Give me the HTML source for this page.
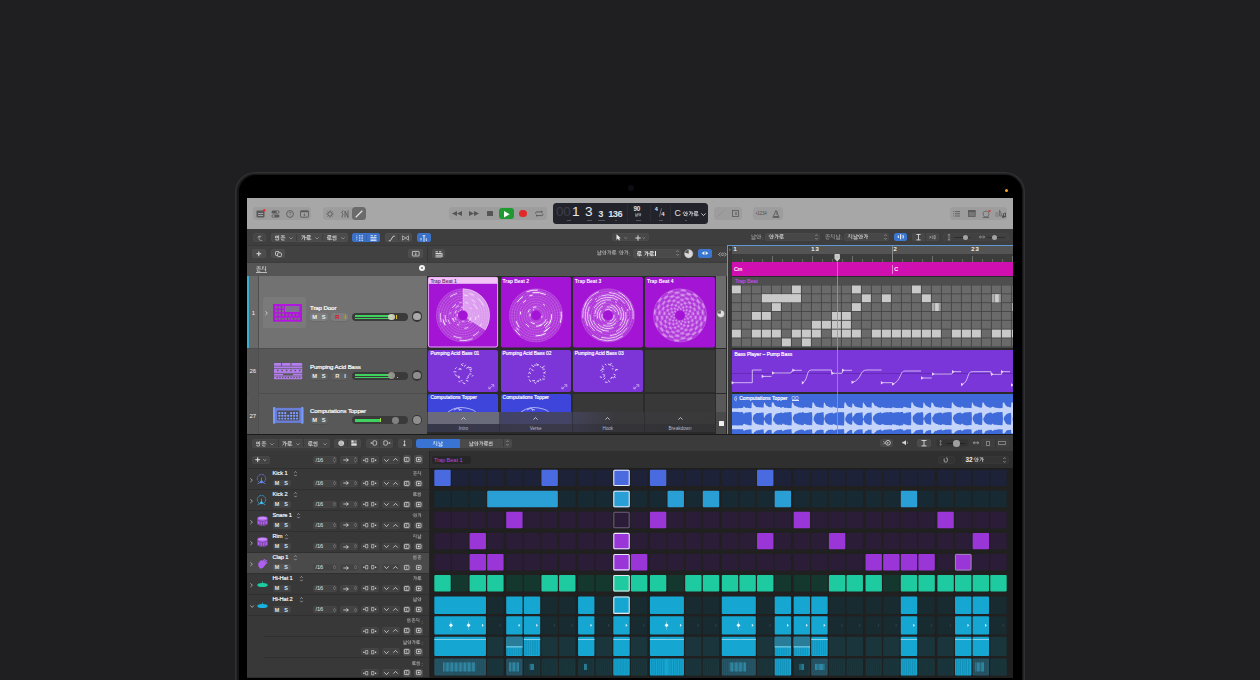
<!DOCTYPE html><html><head><meta charset="utf-8"><style>
html,body{margin:0;padding:0;width:1260px;height:680px;overflow:hidden;background:#1f1f21;}
body{position:relative;font-family:"Liberation Sans",sans-serif;}
.t{position:absolute;white-space:nowrap;font-family:"Liberation Sans",sans-serif;}
svg{overflow:visible}
</style></head><body>
<div style="position:absolute;left:234.80px;top:172.00px;width:790.40px;height:548.00px;background:#151516;border-radius:20px;box-shadow:inset 0 0 0 1px #313133, inset 0 0 0 2.2px #252527;"></div>
<div style="position:absolute;left:238.60px;top:175.30px;width:783.00px;height:544.70px;background:#000;border-radius:17px;"></div>
<div style="position:absolute;left:627.50px;top:184.50px;width:6.00px;height:6.00px;background:#0c0d12;border-radius:50%;"></div>
<div style="position:absolute;left:1004.60px;top:189.10px;width:3.20px;height:3.20px;background:#f5a623;border-radius:50%;"></div>
<div style="position:absolute;left:0;top:0;width:1260px;height:680px;clip-path:polygon(247px 198px,1013px 198px,1013px 677.6px,247px 677.6px);">
<div style="position:absolute;left:247.00px;top:198.00px;width:766.00px;height:479.60px;background:#3c3c3c;"></div>
<div style="position:absolute;left:247.00px;top:198.00px;width:766.00px;height:31.00px;background:#a7a7a7;"></div>
<div style="position:absolute;left:253.30px;top:207.20px;width:57.70px;height:12.40px;background:#9d9d9d;border-radius:3.5px;"></div>
<div style="position:absolute;left:323.00px;top:207.20px;width:43.00px;height:12.40px;background:#9d9d9d;border-radius:3.5px;"></div>
<div style="position:absolute;left:352.00px;top:207.20px;width:14.00px;height:12.40px;background:#6b6b6b;border-radius:3.5px;"></div>
<div style="position:absolute;left:448.70px;top:207.20px;width:98.00px;height:12.70px;background:#9d9d9d;border-radius:3.5px;"></div>
<div style="position:absolute;left:498.70px;top:207.50px;width:15.30px;height:11.90px;background:#1f9a30;border-radius:3px;"></div>
<div style="position:absolute;left:714.40px;top:207.20px;width:28.10px;height:12.70px;background:#9d9d9d;border-radius:3.5px;"></div>
<div style="position:absolute;left:753.30px;top:207.20px;width:29.40px;height:12.70px;background:#9d9d9d;border-radius:3.5px;"></div>
<div style="position:absolute;left:949.80px;top:207.20px;width:57.60px;height:12.70px;background:#9d9d9d;border-radius:3.5px;"></div>
<div style="position:absolute;left:553.00px;top:203.20px;width:155.00px;height:20.50px;background:#23242b;border-radius:3.5px;"></div>
<svg style="position:absolute;left:256.00px;top:209.00px;" width="10" height="9" viewBox="0 0 10 9"><rect x="0.5" y="1.5" width="8" height="7" rx="1" fill="#5a5a5a"/><rect x="2" y="4" width="5" height="1" fill="#a0a0a0"/><rect x="2" y="6" width="5" height="1" fill="#a0a0a0"/><circle cx="8.3" cy="1.3" r="1.3" fill="#f02a2a"/></svg>
<svg style="position:absolute;left:271.00px;top:209.50px;" width="9" height="8" viewBox="0 0 9 8"><rect x="0.5" y="0.5" width="8" height="3" rx="1.5" fill="#5a5a5a"/><rect x="0.5" y="4.5" width="8" height="3" rx="1.5" fill="#5a5a5a"/><circle cx="6.5" cy="2" r="1" fill="#a0a0a0"/><circle cx="2.5" cy="6" r="1" fill="#a0a0a0"/></svg>
<svg style="position:absolute;left:285.50px;top:209.50px;" width="8" height="8" viewBox="0 0 8 8"><circle cx="4" cy="4" r="3.4" fill="none" stroke="#5a5a5a" stroke-width="0.9"/><text x="4" y="6" font-size="5" text-anchor="middle" fill="#5a5a5a" font-family="Liberation Sans">?</text></svg>
<svg style="position:absolute;left:300.00px;top:209.50px;" width="9" height="8" viewBox="0 0 9 8"><rect x="0.5" y="0.8" width="8" height="6.4" rx="0.6" fill="none" stroke="#5a5a5a" stroke-width="0.9"/><rect x="0.5" y="0.8" width="8" height="1.4" fill="#5a5a5a"/><path d="M4.5 3.5v2M3.5 4.8l1 1 1-1" stroke="#5a5a5a" stroke-width="0.7" fill="none"/></svg>
<svg style="position:absolute;left:325.50px;top:209.50px;" width="8" height="8" viewBox="0 0 8 8"><circle cx="4" cy="4" r="2.2" fill="none" stroke="#5a5a5a" stroke-width="0.9"/><path d="M4 0.3v1.2M4 6.5v1.2M0.3 4h1.2M6.5 4h1.2M1.4 1.4l.8.8M5.8 5.8l.8.8M1.4 6.6l.8-.8M5.8 2.2l.8-.8" stroke="#5a5a5a" stroke-width="0.7"/></svg>
<svg style="position:absolute;left:340.50px;top:209.50px;" width="8" height="8" viewBox="0 0 8 8"><path d="M2 0.5L0.8 2.5 2 4.5 0.8 6.5 2 7.5M4 7.5V1l3 6.5V0.5" stroke="#5a5a5a" stroke-width="0.9" fill="none"/></svg>
<svg style="position:absolute;left:355.00px;top:209.50px;" width="8" height="8" viewBox="0 0 8 8"><path d="M1 7L7 1" stroke="#e8e8e8" stroke-width="1.1" stroke-linecap="round"/></svg>
<svg style="position:absolute;left:451.80px;top:211.00px;" width="10" height="5" viewBox="0 0 10 5"><path d="M5 0L0 2.5 5 5zM10 0L5 2.5 10 5z" fill="#555"/></svg>
<svg style="position:absolute;left:469.10px;top:211.00px;" width="10" height="5" viewBox="0 0 10 5"><path d="M0 0L5 2.5 0 5zM5 0L10 2.5 5 5z" fill="#555"/></svg>
<div style="position:absolute;left:487.20px;top:211.00px;width:5.70px;height:5.40px;background:#555;border-radius:0.5px;"></div>
<svg style="position:absolute;left:504.00px;top:210.60px;" width="6" height="6.6" viewBox="0 0 6 6.6"><path d="M0 0L5.6 3.3 0 6.6z" fill="#fff"/></svg>
<div style="position:absolute;left:519.20px;top:210.05px;width:7.40px;height:7.40px;background:#e02a2a;border-radius:50%;"></div>
<svg style="position:absolute;left:535.00px;top:211.00px;" width="8.5" height="5.5" viewBox="0 0 8.5 5.5"><path d="M0.6 2.6V2.1q0-1.2 1.2-1.2h5.5M6.4 0l1 .9-1 .9M7.9 2.9v.5q0 1.2-1.2 1.2H1.2M2.1 3.7l-1 .9 1 .9" stroke="#555" stroke-width="0.9" fill="none"/></svg>
<svg style="position:absolute;left:717.00px;top:210.00px;" width="8" height="7" viewBox="0 0 8 7"><path d="M0.5 6.5L7 0.5" stroke="#8e8e8e" stroke-width="0.9"/></svg>
<div style="position:absolute;left:732.20px;top:210.20px;width:6.80px;height:6.80px;background:transparent;box-shadow:inset 0 0 0 1px #666;"></div>
<div style="position:absolute;left:734.60px;top:212.40px;width:2.00px;height:2.40px;background:#777;"></div>
<div class="t" style="left:755.80px;top:210.80px;font-size:4.6px;line-height:5.6px;color:#555;letter-spacing:-0.2px;">&#8226;1234</div>
<svg style="position:absolute;left:772.00px;top:209.50px;" width="8" height="8" viewBox="0 0 8 8"><path d="M4 0.5L1.3 6.5h5.4z" fill="none" stroke="#5a5a5a" stroke-width="0.9"/><path d="M0.5 7.3h7" stroke="#5a5a5a" stroke-width="1"/><path d="M4 5L6 1.5" stroke="#5a5a5a" stroke-width="0.7"/></svg>
<svg style="position:absolute;left:953.00px;top:210.80px;" width="7" height="6" viewBox="0 0 7 6"><path d="M0.3 0.6h.8M0.3 2.8h.8M0.3 5h.8M2 0.6h5M2 2.8h5M2 5h5" stroke="#5a5a5a" stroke-width="0.9"/></svg>
<svg style="position:absolute;left:968.00px;top:210.00px;" width="7.5" height="7" viewBox="0 0 7.5 7"><rect x="0.4" y="0.5" width="6.8" height="6" fill="#777" stroke="#5a5a5a" stroke-width="0.8"/><rect x="0.4" y="0.5" width="6.8" height="1.6" fill="#5a5a5a"/></svg>
<svg style="position:absolute;left:982.00px;top:209.50px;" width="9" height="8" viewBox="0 0 9 8"><circle cx="4" cy="4" r="3" fill="none" stroke="#6a6a6a" stroke-width="0.9"/><path d="M0.8 7.5h6.4" stroke="#5a5a5a" stroke-width="0.8"/><circle cx="7.6" cy="1" r="1.1" fill="#f02a2a"/></svg>
<svg style="position:absolute;left:995.00px;top:209.00px;" width="12" height="9" viewBox="0 0 12 9"><rect x="0.3" y="3" width="3.4" height="5" fill="#8a8a8a"/><path d="M4.5 1L7.5 7H4.5z" fill="#8a8a8a" stroke="#5a5a5a" stroke-width="0.6"/><path d="M8.5 4.5V8M10.5 4V7.5M8.5 4.5l2-.5" stroke="#444" stroke-width="0.8"/><circle cx="8" cy="8" r="0.9" fill="#444"/><circle cx="10" cy="7.5" r="0.9" fill="#444"/></svg>
<div style="position:absolute;left:627.30px;top:205.00px;width:0.50px;height:17.00px;background:#2c2d35;"></div>
<div style="position:absolute;left:649.50px;top:205.00px;width:0.50px;height:17.00px;background:#2c2d35;"></div>
<div style="position:absolute;left:669.50px;top:205.00px;width:0.50px;height:17.00px;background:#2c2d35;"></div>
<div class="t" style="left:556.00px;top:205.29px;font-size:13.6px;line-height:14.6px;color:#3c3e49;letter-spacing:-0.4px;">00</div>
<div class="t" style="left:572.00px;top:205.29px;font-size:13.6px;line-height:14.6px;color:#e6e8ee;">1</div>
<div class="t" style="left:584.90px;top:205.29px;font-size:13.6px;line-height:14.6px;color:#e6e8ee;">3</div>
<div class="t" style="left:598.30px;top:208.93px;font-size:9.3px;line-height:10.3px;color:#dfe1e8;font-weight:bold;">3</div>
<div class="t" style="left:608.20px;top:208.93px;font-size:9.3px;line-height:10.3px;color:#dfe1e8;font-weight:bold;letter-spacing:-0.5px;">136</div>
<div class="t" style="left:565.80px;top:218.60px;font-size:3px;line-height:4px;color:#666a77;">&#183;&#183;&#183;</div>
<div style="position:absolute;left:566.50px;top:220.10px;width:4.50px;height:1.00px;background:#50535e;"></div>
<div style="position:absolute;left:586.50px;top:220.10px;width:5.00px;height:1.00px;background:#50535e;"></div>
<div style="position:absolute;left:597.50px;top:220.10px;width:7.50px;height:1.00px;background:#50535e;"></div>
<div style="position:absolute;left:614.60px;top:220.10px;width:2.00px;height:1.00px;background:#50535e;"></div>
<div class="t" style="left:633.60px;top:205.37px;font-size:6.3px;line-height:7.3px;color:#dfe1e8;font-weight:bold;letter-spacing:-0.3px;">90</div>
<svg style="position:absolute;left:635.00px;top:212.80px" width="6.46" height="3.40" viewBox="0 0 19.00 10"><g fill="none" stroke="#c8cad2" stroke-width="1.5"><path transform="translate(0.00 0)" d="M1.5 1v4h3.5M6.8 0.5v6M6.8 3h2M1.5 7.5h6v2h-6z"/><path transform="translate(9.50 0)" d="M2.5 1.5a2.2 2.2 0 1 0 0.01 0M6.8 0.5v9M6.8 4.5h2M1.5 8h4"/></g></svg>
<div style="position:absolute;left:635.50px;top:219.70px;width:5.50px;height:1.00px;background:#50535e;"></div>
<div class="t" style="left:654.80px;top:205.64px;font-size:5.5px;line-height:6.5px;color:#dfe1e8;font-weight:bold;">4</div>
<svg style="position:absolute;left:658.50px;top:207.50px;" width="3" height="9" viewBox="0 0 3 9"><path d="M2.5 0.3L0.5 8.7" stroke="#9a9ca5" stroke-width="0.6"/></svg>
<div class="t" style="left:661.30px;top:211.02px;font-size:6px;line-height:7px;color:#dfe1e8;font-weight:bold;">4</div>
<div style="position:absolute;left:658.50px;top:219.70px;width:4.50px;height:1.00px;background:#50535e;"></div>
<div class="t" style="left:674.60px;top:209.15px;font-size:8.8px;line-height:9.8px;color:#e4e6ec;">C</div>
<svg style="position:absolute;left:683.00px;top:211.20px" width="15.96" height="5.60" viewBox="0 0 28.50 10"><g fill="none" stroke="#e4e6ec" stroke-width="1.35"><path transform="translate(0.00 0)" d="M2.5 1.5a2.2 2.2 0 1 0 0.01 0M6.8 0.5v9M6.8 4.5h2M1.5 8h4"/><path transform="translate(9.50 0)" d="M1 1.5h3.5q0 4-3.5 6M6.5 0.5v9M6.5 4.5h2"/><path transform="translate(19.00 0)" d="M1 1h6v2.3h-6v2.3h6M0.5 7.5h8.5M4.5 7.5v2"/></g></svg>
<div style="position:absolute;left:684.60px;top:219.70px;width:2.20px;height:1.00px;background:#50535e;"></div>
<svg style="position:absolute;left:701.30px;top:212.60px;" width="5" height="3.5" viewBox="0 0 5 3.5"><path d="M0.4 0.5L2.5 2.6 4.6 0.5" stroke="#e0e0e6" stroke-width="0.9" fill="none"/></svg>
<div style="position:absolute;left:247.00px;top:229.00px;width:766.00px;height:16.00px;background:#3e3e3e;"></div>
<div style="position:absolute;left:247.00px;top:245.00px;width:480.50px;height:17.30px;background:#414141;"></div>
<div style="position:absolute;left:247.00px;top:244.60px;width:480.50px;height:0.60px;background:#383838;"></div>
<div style="position:absolute;left:252.60px;top:233.40px;width:13.40px;height:8.30px;background:#464646;border-radius:2.5px;box-shadow:inset 0 0 0 0.5px rgba(255,255,255,0.04);"></div>
<svg style="position:absolute;left:256.50px;top:234.80px;" width="6" height="6" viewBox="0 0 6 6"><path d="M4.5 1.2L2 1.2 2 3.8M0.8 2.6L2 1 3.2 2.6M2 3.8q0 1.5 1.6 1.6h1.6" stroke="#a9a9a9" stroke-width="0.8" fill="none"/></svg>
<div style="position:absolute;left:270.80px;top:233.40px;width:77.20px;height:8.30px;background:#4b4b4b;border-radius:2.5px;box-shadow:inset 0 0 0 0.5px rgba(255,255,255,0.04);"></div>
<div style="position:absolute;left:296.40px;top:233.80px;width:0.50px;height:7.50px;background:#3e3e3e;"></div>
<div style="position:absolute;left:322.20px;top:233.80px;width:0.50px;height:7.50px;background:#3e3e3e;"></div>
<svg style="position:absolute;left:275.00px;top:234.80px" width="10.64" height="5.60" viewBox="0 0 19.00 10"><g fill="none" stroke="#e6e6e6" stroke-width="1.3"><path transform="translate(0.00 0)" d="M1 2h3.5v3h-3.5zM6.5 0.5v9M1.5 7v2h4"/><path transform="translate(9.50 0)" d="M1 1.5h7M4.5 1.5v2.5M0.5 5h8.5M2.5 7v2h5"/></g></svg>
<svg style="position:absolute;left:288.60px;top:236.60px;" width="4" height="2.4" viewBox="0 0 4 2.4"><path d="M0.3 0.3L2.0 2.0 3.7 0.3" stroke="#9a9a9a" stroke-width="0.8" fill="none"/></svg>
<svg style="position:absolute;left:301.00px;top:234.80px" width="10.64" height="5.60" viewBox="0 0 19.00 10"><g fill="none" stroke="#e6e6e6" stroke-width="1.3"><path transform="translate(0.00 0)" d="M1 1.5h3.5q0 4-3.5 6M6.5 0.5v9M6.5 4.5h2"/><path transform="translate(9.50 0)" d="M1 1h6v2.3h-6v2.3h6M0.5 7.5h8.5M4.5 7.5v2"/></g></svg>
<svg style="position:absolute;left:315.20px;top:236.60px;" width="4" height="2.4" viewBox="0 0 4 2.4"><path d="M0.3 0.3L2.0 2.0 3.7 0.3" stroke="#9a9a9a" stroke-width="0.8" fill="none"/></svg>
<svg style="position:absolute;left:327.00px;top:234.80px" width="10.64" height="5.60" viewBox="0 0 19.00 10"><g fill="none" stroke="#e6e6e6" stroke-width="1.3"><path transform="translate(0.00 0)" d="M1 1h6v2.3h-6v2.3h6M0.5 7.5h8.5M4.5 7.5v2"/><path transform="translate(9.50 0)" d="M1 2h3.5v3h-3.5zM6.5 0.5v9M1.5 7v2h4"/></g></svg>
<svg style="position:absolute;left:341.30px;top:236.60px;" width="4" height="2.4" viewBox="0 0 4 2.4"><path d="M0.3 0.3L2.0 2.0 3.7 0.3" stroke="#9a9a9a" stroke-width="0.8" fill="none"/></svg>
<div style="position:absolute;left:352.00px;top:233.40px;width:28.30px;height:8.30px;background:#3a70c8;border-radius:2.5px;box-shadow:inset 0 0 0 0.5px rgba(255,255,255,0.04);"></div>
<div style="position:absolute;left:365.90px;top:233.80px;width:0.50px;height:7.50px;background:#3563b0;"></div>
<svg style="position:absolute;left:355.50px;top:234.80px;" width="8" height="6" viewBox="0 0 8 6"><path d="M0.8 0.5v5M3 0.6h4M3 2.2h4M3 3.8h4M3 5.4h4M0.8 0.5v.01" stroke="#e8eef8" stroke-width="0.9" stroke-dasharray="0.9 0.7"/></svg>
<svg style="position:absolute;left:370.00px;top:234.60px;" width="7" height="6.2" viewBox="0 0 7 6.2"><path d="M0.5 0.7h2.5M4 0.7h2.5M0.5 2.4h6M0.5 4.1h6M0.5 5.6h6" stroke="#e8eef8" stroke-width="0.9"/></svg>
<div style="position:absolute;left:384.80px;top:233.40px;width:27.00px;height:8.30px;background:#4b4b4b;border-radius:2.5px;box-shadow:inset 0 0 0 0.5px rgba(255,255,255,0.04);"></div>
<div style="position:absolute;left:398.20px;top:233.80px;width:0.50px;height:7.50px;background:#3e3e3e;"></div>
<svg style="position:absolute;left:388.00px;top:234.60px;" width="7.5" height="6.5" viewBox="0 0 7.5 6.5"><path d="M0.8 5.8L2.2 5.8 5.2 1.2 6.8 1.2" stroke="#dcdcdc" stroke-width="0.9" fill="none"/></svg>
<svg style="position:absolute;left:402.00px;top:234.80px;" width="7" height="6" viewBox="0 0 7 6"><path d="M0.5 0.8q3 2.2 6 4.4M0.5 5.2q3-2.2 6-4.4M0.5 0.8v4.4M6.5 0.8v4.4" stroke="#b5b5b5" stroke-width="0.8" fill="none"/></svg>
<div style="position:absolute;left:416.50px;top:233.40px;width:14.60px;height:8.30px;background:#3a70c8;border-radius:2.5px;box-shadow:inset 0 0 0 0.5px rgba(255,255,255,0.04);"></div>
<svg style="position:absolute;left:419.50px;top:234.50px;" width="9" height="7" viewBox="0 0 9 7"><path d="M4 0.6v6.2M2.6 0.8h2.8M1 3v2.5M7 3.5q-1 0-1 1.1t1 1.1" stroke="#eaf0fa" stroke-width="0.9" fill="none"/></svg>
<div style="position:absolute;left:611.70px;top:233.20px;width:37.20px;height:8.00px;background:#474747;border-radius:2.5px;box-shadow:inset 0 0 0 0.5px rgba(255,255,255,0.04);"></div>
<svg style="position:absolute;left:615.50px;top:234.20px;" width="5" height="6.5" viewBox="0 0 5 6.5"><path d="M0.5 0.3v5.6l1.4-1.3 1.1 1.8 1-.5-1-1.7h1.8z" fill="#eee"/></svg>
<svg style="position:absolute;left:623.50px;top:236.60px;" width="3.5" height="2.1" viewBox="0 0 3.5 2.1"><path d="M0.3 0.3L1.75 1.7000000000000002 3.2 0.3" stroke="#8a8a8a" stroke-width="0.8" fill="none"/></svg>
<svg style="position:absolute;left:634.50px;top:234.60px;" width="6" height="6" viewBox="0 0 6 6"><path d="M3 0.3v5.4M0.3 3h5.4" stroke="#e6e6e6" stroke-width="0.9"/></svg>
<svg style="position:absolute;left:642.20px;top:236.60px;" width="3.5" height="2.1" viewBox="0 0 3.5 2.1"><path d="M0.3 0.3L1.75 1.7000000000000002 3.2 0.3" stroke="#8a8a8a" stroke-width="0.8" fill="none"/></svg>
<svg style="position:absolute;left:751.00px;top:234.40px" width="10.64" height="5.60" viewBox="0 0 19.00 10"><g fill="none" stroke="#a9a9a9" stroke-width="1.1"><path transform="translate(0.00 0)" d="M1.5 1v4h3.5M6.8 0.5v6M6.8 3h2M1.5 7.5h6v2h-6z"/><path transform="translate(9.50 0)" d="M2.5 1.5a2.2 2.2 0 1 0 0.01 0M6.8 0.5v9M6.8 4.5h2M1.5 8h4"/></g></svg>
<div class="t" style="left:762.00px;top:234.96px;font-size:5.6px;line-height:6.6px;color:#a9a9a9;">:</div>
<div style="position:absolute;left:765.00px;top:232.90px;width:54.80px;height:8.00px;background:#474747;border-radius:2.5px;box-shadow:inset 0 0 0 0.5px rgba(255,255,255,0.04);"></div>
<svg style="position:absolute;left:769.20px;top:234.40px" width="15.39" height="5.40" viewBox="0 0 28.50 10"><g fill="none" stroke="#e6e6e6" stroke-width="1.2"><path transform="translate(0.00 0)" d="M2.5 1.5a2.2 2.2 0 1 0 0.01 0M6.8 0.5v9M6.8 4.5h2M1.5 8h4"/><path transform="translate(9.50 0)" d="M1 1.5h3.5q0 4-3.5 6M6.5 0.5v9M6.5 4.5h2"/><path transform="translate(19.00 0)" d="M1 1h6v2.3h-6v2.3h6M0.5 7.5h8.5M4.5 7.5v2"/></g></svg>
<svg style="position:absolute;left:815.20px;top:233.90px;" width="3" height="6" viewBox="0 0 3 6"><path d="M0.3 2L1.5 0.6 2.7 2M0.3 4L1.5 5.4 2.7 4" stroke="#9a9a9a" stroke-width="0.7" fill="none"/></svg>
<svg style="position:absolute;left:824.60px;top:234.40px" width="15.96" height="5.60" viewBox="0 0 28.50 10"><g fill="none" stroke="#a9a9a9" stroke-width="1.1"><path transform="translate(0.00 0)" d="M1 1.5h7M4.5 1.5v2.5M0.5 5h8.5M2.5 7v2h5"/><path transform="translate(9.50 0)" d="M1 1.5h3M2.5 1.5q0 3-2 5M3 4.5l2 2M7 0.5v9"/><path transform="translate(19.00 0)" d="M1.5 1v4h3.5M6.8 0.5v6M6.8 3h2M1.5 7.5h6v2h-6z"/></g></svg>
<div class="t" style="left:841.00px;top:234.96px;font-size:5.6px;line-height:6.6px;color:#a9a9a9;">:</div>
<div style="position:absolute;left:843.80px;top:232.90px;width:44.80px;height:8.00px;background:#474747;border-radius:2.5px;box-shadow:inset 0 0 0 0.5px rgba(255,255,255,0.04);"></div>
<svg style="position:absolute;left:847.50px;top:234.40px" width="20.52" height="5.40" viewBox="0 0 38.00 10"><g fill="none" stroke="#e6e6e6" stroke-width="1.2"><path transform="translate(0.00 0)" d="M1 1.5h3M2.5 1.5q0 3-2 5M3 4.5l2 2M7 0.5v9"/><path transform="translate(9.50 0)" d="M1.5 1v4h3.5M6.8 0.5v6M6.8 3h2M1.5 7.5h6v2h-6z"/><path transform="translate(19.00 0)" d="M2.5 1.5a2.2 2.2 0 1 0 0.01 0M6.8 0.5v9M6.8 4.5h2M1.5 8h4"/><path transform="translate(28.50 0)" d="M1 1.5h3.5q0 4-3.5 6M6.5 0.5v9M6.5 4.5h2"/></g></svg>
<svg style="position:absolute;left:884.00px;top:233.90px;" width="3" height="6" viewBox="0 0 3 6"><path d="M0.3 2L1.5 0.6 2.7 2M0.3 4L1.5 5.4 2.7 4" stroke="#9a9a9a" stroke-width="0.7" fill="none"/></svg>
<div style="position:absolute;left:894.20px;top:232.60px;width:12.80px;height:8.60px;background:#3a76d0;border-radius:2.5px;box-shadow:inset 0 0 0 0.5px rgba(255,255,255,0.04);"></div>
<svg style="position:absolute;left:897.80px;top:234.20px;" width="6" height="5.6" viewBox="0 0 6 5.6"><path d="M2.6 0.3v5M0.3 1.5v2.6M4.8 1.2q1.2 1.6 0 3.2" stroke="#eef3fb" stroke-width="1.1" fill="none"/></svg>
<div style="position:absolute;left:912.00px;top:232.60px;width:26.60px;height:8.60px;background:#474747;border-radius:2.5px;box-shadow:inset 0 0 0 0.5px rgba(255,255,255,0.04);"></div>
<div style="position:absolute;left:925.10px;top:233.00px;width:0.50px;height:7.80px;background:#3e3e3e;"></div>
<svg style="position:absolute;left:916.40px;top:233.80px;" width="5" height="6.4" viewBox="0 0 5 6.4"><path d="M0.4 0.5h4.2M0.4 5.9h4.2M2.5 0.5v5.4" stroke="#d8d8d8" stroke-width="0.9"/></svg>
<svg style="position:absolute;left:929.40px;top:234.80px;" width="6.5" height="4.4" viewBox="0 0 6.5 4.4"><path d="M0.4 2.2h1.4M0.6 1l1.2 1.2-1.2 1.2M3.3 0.5v3.4M5 0.5h1.2v3.4H5z" stroke="#a9a9a9" stroke-width="0.7" fill="none"/></svg>
<div style="position:absolute;left:943.00px;top:232.60px;width:65.80px;height:8.60px;background:#414141;border-radius:2.5px;box-shadow:inset 0 0 0 0.5px rgba(255,255,255,0.04);"></div>
<svg style="position:absolute;left:946.80px;top:233.60px;" width="4" height="6.6" viewBox="0 0 4 6.6"><path d="M2 0.3v6M0.8 1.4L2 0.3 3.2 1.4M0.8 5.2L2 6.3 3.2 5.2" stroke="#a0a0a0" stroke-width="0.7" fill="none"/></svg>
<div style="position:absolute;left:953.50px;top:236.60px;width:16.00px;height:0.80px;background:#2e2e2e;"></div>
<div style="position:absolute;left:963.40px;top:234.50px;width:5.00px;height:5.00px;background:#a3a3a3;border-radius:50%;"></div>
<svg style="position:absolute;left:978.60px;top:235.40px;" width="6" height="4" viewBox="0 0 6 4"><path d="M0.4 2h5.2M1.6 0.6L0.4 2l1.2 1.4M4.4 0.6L5.6 2 4.4 3.4" stroke="#a0a0a0" stroke-width="0.7" fill="none"/></svg>
<div style="position:absolute;left:986.50px;top:236.60px;width:18.50px;height:0.80px;background:#2e2e2e;"></div>
<div style="position:absolute;left:992.30px;top:234.50px;width:5.00px;height:5.00px;background:#a3a3a3;border-radius:50%;"></div>
<div style="position:absolute;left:252.20px;top:249.20px;width:13.80px;height:8.80px;background:#4c4c4c;border-radius:2.5px;box-shadow:inset 0 0 0 0.5px rgba(255,255,255,0.04);"></div>
<svg style="position:absolute;left:256.30px;top:250.80px;" width="5.6" height="5.6" viewBox="0 0 5.6 5.6"><path d="M2.8 0.4v4.8M0.4 2.8h4.8" stroke="#dcdcdc" stroke-width="1.1"/></svg>
<div style="position:absolute;left:270.80px;top:249.20px;width:14.70px;height:8.80px;background:#4c4c4c;border-radius:2.5px;box-shadow:inset 0 0 0 0.5px rgba(255,255,255,0.04);"></div>
<svg style="position:absolute;left:274.80px;top:250.60px;" width="7" height="6" viewBox="0 0 7 6"><rect x="0.5" y="0.5" width="3.6" height="4" rx="0.8" fill="none" stroke="#dcdcdc" stroke-width="0.8"/><rect x="2.6" y="1.8" width="3.8" height="3.8" rx="0.8" fill="#4c4c4c" stroke="#dcdcdc" stroke-width="0.8"/></svg>
<div style="position:absolute;left:408.00px;top:249.20px;width:14.70px;height:8.80px;background:#4c4c4c;border-radius:2.5px;box-shadow:inset 0 0 0 0.5px rgba(255,255,255,0.04);"></div>
<svg style="position:absolute;left:411.60px;top:251.00px;" width="7.5" height="5.4" viewBox="0 0 7.5 5.4"><rect x="0.4" y="0.4" width="6.7" height="4.6" rx="0.5" fill="none" stroke="#dcdcdc" stroke-width="0.8"/><path d="M3.75 1.4v2.4M2.8 2.9l.95.95.95-.95" stroke="#dcdcdc" stroke-width="0.7" fill="none"/></svg>
<div style="position:absolute;left:426.70px;top:245.20px;width:0.60px;height:17.10px;background:#363636;"></div>
<div style="position:absolute;left:432.00px;top:249.20px;width:13.40px;height:8.80px;background:#4c4c4c;border-radius:2.5px;box-shadow:inset 0 0 0 0.5px rgba(255,255,255,0.04);"></div>
<svg style="position:absolute;left:434.80px;top:250.50px;" width="8" height="6.5" viewBox="0 0 8 6.5"><path d="M0.5 0.8h2.5M4 0.8h2.5M0.5 2.5h6M0.5 4.2h6M0.5 5.9h6M7 2v4" stroke="#e8e8e8" stroke-width="0.9"/></svg>
<svg style="position:absolute;left:596.80px;top:250.40px" width="19.76" height="5.20" viewBox="0 0 38.00 10"><g fill="none" stroke="#bcbcbc" stroke-width="1.25"><path transform="translate(0.00 0)" d="M1.5 1v4h3.5M6.8 0.5v6M6.8 3h2M1.5 7.5h6v2h-6z"/><path transform="translate(9.50 0)" d="M2.5 1.5a2.2 2.2 0 1 0 0.01 0M6.8 0.5v9M6.8 4.5h2M1.5 8h4"/><path transform="translate(19.00 0)" d="M1 1.5h3.5q0 4-3.5 6M6.5 0.5v9M6.5 4.5h2"/><path transform="translate(28.50 0)" d="M1 1h6v2.3h-6v2.3h6M0.5 7.5h8.5M4.5 7.5v2"/></g></svg>
<svg style="position:absolute;left:618.60px;top:250.40px" width="9.88" height="5.20" viewBox="0 0 19.00 10"><g fill="none" stroke="#bcbcbc" stroke-width="1.25"><path transform="translate(0.00 0)" d="M2.5 1.5a2.2 2.2 0 1 0 0.01 0M6.8 0.5v9M6.8 4.5h2M1.5 8h4"/><path transform="translate(9.50 0)" d="M1 1.5h3.5q0 4-3.5 6M6.5 0.5v9M6.5 4.5h2"/></g></svg>
<div class="t" style="left:628.80px;top:251.19px;font-size:5.8px;line-height:6.8px;color:#bcbcbc;">:</div>
<div style="position:absolute;left:632.80px;top:249.20px;width:47.80px;height:8.70px;background:#4a4a4a;border-radius:2.5px;box-shadow:inset 0 0 0 0.5px rgba(255,255,255,0.04);"></div>
<svg style="position:absolute;left:637.20px;top:250.60px" width="5.32" height="5.60" viewBox="0 0 9.50 10"><g fill="none" stroke="#f4f4f4" stroke-width="1.4"><path transform="translate(0.00 0)" d="M1 1h6v2.3h-6v2.3h6M0.5 7.5h8.5M4.5 7.5v2"/></g></svg>
<svg style="position:absolute;left:644.20px;top:250.60px" width="10.64" height="5.60" viewBox="0 0 19.00 10"><g fill="none" stroke="#f4f4f4" stroke-width="1.4"><path transform="translate(0.00 0)" d="M1 1.5h3.5q0 4-3.5 6M6.5 0.5v9M6.5 4.5h2"/><path transform="translate(9.50 0)" d="M1 1h6v2.3h-6v2.3h6M0.5 7.5h8.5M4.5 7.5v2"/></g></svg>
<div style="position:absolute;left:655.00px;top:250.60px;width:0.80px;height:5.80px;background:#f4f4f4;"></div>
<svg style="position:absolute;left:676.00px;top:250.40px;" width="3" height="6" viewBox="0 0 3 6"><path d="M0.3 2L1.5 0.6 2.7 2M0.3 4L1.5 5.4 2.7 4" stroke="#9a9a9a" stroke-width="0.7" fill="none"/></svg>
<svg style="position:absolute;left:684.00px;top:249.40px;" width="9.4" height="9.4" viewBox="0 0 9.4 9.4"><circle cx="4.7" cy="4.7" r="4.2" fill="#d8d8d8"/><path d="M4.7 4.7V0.5A4.2 4.2 0 0 0 0.7 3.4z" fill="#555"/><circle cx="4.7" cy="4.7" r="4.2" fill="none" stroke="#aaa" stroke-width="0.5"/></svg>
<div style="position:absolute;left:697.80px;top:249.20px;width:14.10px;height:8.90px;background:#3a76d0;border-radius:2.5px;box-shadow:inset 0 0 0 0.5px rgba(255,255,255,0.04);"></div>
<svg style="position:absolute;left:700.80px;top:251.40px;" width="8" height="4.4" viewBox="0 0 8 4.4"><path d="M3.4 0.3L0.6 2.2 3.4 4.1zM4.6 0.3L7.4 2.2 4.6 4.1z" fill="#eef3fb"/></svg>
<svg style="position:absolute;left:718.00px;top:251.60px;" width="9" height="4.8" viewBox="0 0 9 4.8"><path d="M2.6 0.6L0.5 2.4 2.6 4.2M6.4 0.6L8.5 2.4 6.4 4.2M4.5 0.8L3.2 2.4 4.5 4 5.8 2.4z" stroke="#c0c0c0" stroke-width="0.75" fill="none"/></svg>
<div style="position:absolute;left:247.00px;top:262.60px;width:180.00px;height:13.40px;background:#555555;"></div>
<div style="position:absolute;left:427.00px;top:262.60px;width:300.50px;height:13.40px;background:#535353;"></div>
<svg style="position:absolute;left:255.50px;top:265.50px" width="11.02" height="5.80" viewBox="0 0 19.00 10"><g fill="none" stroke="#e0e0e0" stroke-width="1.2"><path transform="translate(0.00 0)" d="M1 1.5h7M4.5 1.5v2.5M0.5 5h8.5M2.5 7v2h5"/><path transform="translate(9.50 0)" d="M1 1.5h3M2.5 1.5q0 3-2 5M3 4.5l2 2M7 0.5v9"/></g></svg>
<div style="position:absolute;left:255.50px;top:272.10px;width:11.50px;height:0.60px;background:#bbb;"></div>
<div style="position:absolute;left:418.60px;top:264.90px;width:6.20px;height:6.20px;background:#f4f4f4;border-radius:50%;"></div>
<div style="position:absolute;left:420.60px;top:266.90px;width:2.20px;height:2.20px;background:#777;border-radius:50%;"></div>
<div style="position:absolute;left:247.00px;top:276.00px;width:180.00px;height:72.80px;background:#727272;"></div>
<div style="position:absolute;left:247.00px;top:348.80px;width:180.00px;height:85.20px;background:#585858;"></div>
<div style="position:absolute;left:247.00px;top:393.30px;width:180.00px;height:0.80px;background:#4d4d4d;"></div>
<div style="position:absolute;left:247.00px;top:276.00px;width:2.00px;height:72.50px;background:#3bb0d0;"></div>
<div style="position:absolute;left:249.00px;top:276.00px;width:9.30px;height:72.50px;background:#696969;"></div>
<div style="position:absolute;left:258.30px;top:276.00px;width:0.60px;height:158.00px;background:#4f4f4f;"></div>
<div style="position:absolute;left:247.00px;top:348.40px;width:180.00px;height:0.70px;background:#4d4d4d;"></div>
<div style="position:absolute;left:249.00px;top:348.90px;width:9.30px;height:85.10px;background:#555;"></div>
<div class="t" style="left:251.80px;top:309.62px;font-size:6px;line-height:7px;color:#f4f4f4;">1</div>
<div class="t" style="left:249.60px;top:368.32px;font-size:6px;line-height:7px;color:#f4f4f4;letter-spacing:-0.1px;">26</div>
<div class="t" style="left:249.60px;top:412.82px;font-size:6px;line-height:7px;color:#f4f4f4;letter-spacing:-0.1px;">27</div>
<div style="position:absolute;left:262.90px;top:297.20px;width:42.70px;height:30.50px;background:#7a7a7a;border-radius:2.5px;"></div>
<svg style="position:absolute;left:265.30px;top:310.60px;" width="3" height="4.4" viewBox="0 0 3 4.4"><path d="M0.4 0.4L2.4 2.2 0.4 4" stroke="#e8e8e8" stroke-width="0.7" fill="none"/></svg>
<svg style="position:absolute;left:273.10px;top:303.70px;" width="29" height="17.7" viewBox="0 0 29 17.7"><rect x="0" y="0" width="29" height="17.7" fill="#b414e0"/><rect x="2.20" y="2.20" width="2.2" height="2.3" fill="#7d6a86"/><rect x="5.60" y="2.20" width="2.2" height="2.3" fill="#7d6a86"/><rect x="9.00" y="2.20" width="2.2" height="2.3" fill="#7d6a86"/><rect x="2.20" y="5.90" width="2.2" height="2.3" fill="#7d6a86"/><rect x="5.60" y="5.90" width="2.2" height="2.3" fill="#7d6a86"/><rect x="9.00" y="5.90" width="2.2" height="2.3" fill="#7d6a86"/><rect x="2.20" y="9.60" width="2.2" height="2.3" fill="#7d6a86"/><rect x="5.60" y="9.60" width="2.2" height="2.3" fill="#7d6a86"/><rect x="9.00" y="9.60" width="2.2" height="2.3" fill="#7d6a86"/><rect x="12" y="2" width="14.5" height="6" fill="#7f7090"/><rect x="2.20" y="13.6" width="2.2" height="2.3" fill="#7d6a86"/><rect x="5.40" y="13.6" width="2.2" height="2.3" fill="#7d6a86"/><rect x="8.60" y="13.6" width="2.2" height="2.3" fill="#7d6a86"/><rect x="11.80" y="13.6" width="2.2" height="2.3" fill="#7d6a86"/><rect x="15.00" y="13.6" width="2.2" height="2.3" fill="#7d6a86"/><rect x="18.20" y="13.6" width="2.2" height="2.3" fill="#7d6a86"/><rect x="21.40" y="13.6" width="2.2" height="2.3" fill="#7d6a86"/><rect x="24.60" y="13.6" width="2.2" height="2.3" fill="#7d6a86"/><rect x="13.00" y="10" width="1.8" height="1.8" fill="#7d6a86"/><rect x="16.40" y="10" width="1.8" height="1.8" fill="#7d6a86"/><rect x="19.80" y="10" width="1.8" height="1.8" fill="#7d6a86"/><rect x="23.20" y="10" width="1.8" height="1.8" fill="#7d6a86"/></svg>
<div class="t" style="left:310.00px;top:304.24px;font-size:6.1px;line-height:7.1px;color:#ffffff;letter-spacing:-0.1px;-webkit-text-stroke:0.2px #fff;">Trap Door</div>
<div style="position:absolute;left:310.00px;top:313.00px;width:17.80px;height:7.60px;background:#7d7d7d;border-radius:2px;box-shadow:0 0.3px 0.6px rgba(0,0,0,.25);"></div>
<div class="t" style="left:312.20px;top:313.89px;font-size:5.8px;line-height:6.8px;color:#f0f0f0;font-weight:bold;">M</div>
<div class="t" style="left:321.80px;top:313.89px;font-size:5.8px;line-height:6.8px;color:#f0f0f0;font-weight:bold;">S</div>
<div style="position:absolute;left:330.60px;top:313.00px;width:17.90px;height:7.60px;background:#7d7d7d;border-radius:2px;box-shadow:0 0.3px 0.6px rgba(0,0,0,.25);"></div>
<div class="t" style="left:335.20px;top:313.89px;font-size:5.8px;line-height:6.8px;color:#d21e1e;font-weight:bold;">R</div>
<div class="t" style="left:344.20px;top:313.89px;font-size:5.8px;line-height:6.8px;color:#e39a26;font-weight:bold;">I</div>
<div style="position:absolute;left:351.80px;top:312.80px;width:56.00px;height:8.20px;background:#3a3a3a;border-radius:4px;"></div>
<div style="position:absolute;left:354.80px;top:315.30px;width:37.00px;height:1.40px;background:#3fd25e;"></div>
<div style="position:absolute;left:354.80px;top:317.70px;width:37.00px;height:1.40px;background:#3fd25e;"></div>
<div style="position:absolute;left:388.40px;top:313.50px;width:6.80px;height:6.80px;background:#d4d6c4;border-radius:50%;opacity:0.9;"></div>
<div style="position:absolute;left:396.20px;top:314.60px;width:0.60px;height:4.80px;background:#d8c020;"></div>
<div style="position:absolute;left:411.60px;top:311.40px;width:10.60px;height:10.60px;background:#353535;border-radius:50%;"></div>
<div style="position:absolute;left:413.10px;top:312.90px;width:7.60px;height:7.60px;background:#a9a9a9;border-radius:50%;"></div>
<svg style="position:absolute;left:273.80px;top:362.80px;" width="28.2" height="16.2" viewBox="0 0 28.2 16.2"><rect x="0" y="0" width="28.2" height="16.2" rx="1" fill="#b47ef0"/><path d="M0 3.2h28.2M0 5.6h28.2M0 10.4h28.2M0 13h28.2" stroke="#585858" stroke-width="0.7"/><path d="M7.5 0v3.2M17 0v3.2" stroke="#585858" stroke-width="0.9"/><rect x="3.00" y="6.8" width="1.5" height="1.5" fill="#585858"/><rect x="7.40" y="6.8" width="1.5" height="1.5" fill="#585858"/><rect x="11.80" y="6.8" width="1.5" height="1.5" fill="#585858"/><rect x="16.20" y="6.8" width="1.5" height="1.5" fill="#585858"/><rect x="20.60" y="6.8" width="1.5" height="1.5" fill="#585858"/><rect x="25.00" y="6.8" width="1.5" height="1.5" fill="#585858"/><rect x="2.50" y="14" width="1.3" height="1.2" fill="#585858"/><rect x="5.30" y="14" width="1.3" height="1.2" fill="#585858"/><rect x="8.10" y="14" width="1.3" height="1.2" fill="#585858"/><rect x="10.90" y="14" width="1.3" height="1.2" fill="#585858"/><rect x="13.70" y="14" width="1.3" height="1.2" fill="#585858"/><rect x="16.50" y="14" width="1.3" height="1.2" fill="#585858"/><rect x="19.30" y="14" width="1.3" height="1.2" fill="#585858"/><rect x="22.10" y="14" width="1.3" height="1.2" fill="#585858"/><rect x="24.90" y="14" width="1.3" height="1.2" fill="#585858"/><rect x="9" y="10.9" width="10" height="1.4" fill="#585858"/></svg>
<div class="t" style="left:310.00px;top:362.54px;font-size:6.1px;line-height:7.1px;color:#ffffff;letter-spacing:-0.1px;-webkit-text-stroke:0.2px #fff;">Pumping Acid Bass</div>
<div style="position:absolute;left:310.00px;top:372.80px;width:17.80px;height:6.80px;background:#5f5f5f;border-radius:2px;box-shadow:0 0.3px 0.6px rgba(0,0,0,.25);"></div>
<div class="t" style="left:312.20px;top:372.89px;font-size:5.8px;line-height:6.8px;color:#f0f0f0;font-weight:bold;">M</div>
<div class="t" style="left:321.80px;top:372.89px;font-size:5.8px;line-height:6.8px;color:#f0f0f0;font-weight:bold;">S</div>
<div style="position:absolute;left:330.60px;top:372.80px;width:17.90px;height:6.80px;background:#5f5f5f;border-radius:2px;box-shadow:0 0.3px 0.6px rgba(0,0,0,.25);"></div>
<div class="t" style="left:335.20px;top:372.89px;font-size:5.8px;line-height:6.8px;color:#e6e6e6;font-weight:bold;">R</div>
<div class="t" style="left:344.20px;top:372.89px;font-size:5.8px;line-height:6.8px;color:#e6e6e6;font-weight:bold;">I</div>
<div style="position:absolute;left:351.80px;top:371.70px;width:56.00px;height:8.20px;background:#3a3a3a;border-radius:4px;"></div>
<div style="position:absolute;left:354.80px;top:374.20px;width:37.00px;height:1.40px;background:#3fd25e;"></div>
<div style="position:absolute;left:354.80px;top:376.60px;width:37.00px;height:1.40px;background:#3fd25e;"></div>
<div style="position:absolute;left:388.40px;top:372.40px;width:6.80px;height:6.80px;background:#9a9a90;border-radius:50%;opacity:0.9;"></div>
<div style="position:absolute;left:397.00px;top:376.50px;width:0.60px;height:1.70px;background:#d8c020;"></div>
<div style="position:absolute;left:411.60px;top:370.30px;width:10.60px;height:10.60px;background:#353535;border-radius:50%;"></div>
<div style="position:absolute;left:413.10px;top:371.80px;width:7.60px;height:7.60px;background:#8e8e8e;border-radius:50%;"></div>
<svg style="position:absolute;left:272.60px;top:407.10px;" width="30.5" height="17" viewBox="0 0 30.5 17"><rect x="0" y="0" width="2.4" height="16.7" rx="0.8" fill="#7a9af8"/><rect x="28.1" y="0" width="2.4" height="16.7" rx="0.8" fill="#7a9af8"/><rect x="2.2" y="0.9" width="26.1" height="15" fill="#6a80d8"/><rect x="4.2" y="3.6" width="22.1" height="10" rx="0.8" fill="#4c4c5c"/><rect x="5.40" y="5.00" width="1.9" height="1.9" rx="0.5" fill="#80a0ff"/><rect x="8.35" y="5.00" width="1.9" height="1.9" rx="0.5" fill="#80a0ff"/><rect x="11.30" y="5.00" width="1.9" height="1.9" rx="0.5" fill="#80a0ff"/><rect x="17.20" y="5.00" width="1.9" height="1.9" rx="0.5" fill="#80a0ff"/><rect x="20.15" y="5.00" width="1.9" height="1.9" rx="0.5" fill="#80a0ff"/><rect x="23.10" y="5.00" width="1.9" height="1.9" rx="0.5" fill="#80a0ff"/><rect x="5.40" y="7.85" width="1.9" height="1.9" rx="0.5" fill="#80a0ff"/><rect x="8.35" y="7.85" width="1.9" height="1.9" rx="0.5" fill="#80a0ff"/><rect x="11.30" y="7.85" width="1.9" height="1.9" rx="0.5" fill="#80a0ff"/><rect x="14.25" y="7.85" width="1.9" height="1.9" rx="0.5" fill="#80a0ff"/><rect x="17.20" y="7.85" width="1.9" height="1.9" rx="0.5" fill="#80a0ff"/><rect x="20.15" y="7.85" width="1.9" height="1.9" rx="0.5" fill="#80a0ff"/><rect x="23.10" y="7.85" width="1.9" height="1.9" rx="0.5" fill="#80a0ff"/><rect x="5.40" y="10.70" width="1.9" height="1.9" rx="0.5" fill="#80a0ff"/><rect x="8.35" y="10.70" width="1.9" height="1.9" rx="0.5" fill="#80a0ff"/><rect x="11.30" y="10.70" width="1.9" height="1.9" rx="0.5" fill="#80a0ff"/><rect x="14.25" y="10.70" width="1.9" height="1.9" rx="0.5" fill="#80a0ff"/><rect x="17.20" y="10.70" width="1.9" height="1.9" rx="0.5" fill="#80a0ff"/><rect x="20.15" y="10.70" width="1.9" height="1.9" rx="0.5" fill="#80a0ff"/><rect x="23.10" y="10.70" width="1.9" height="1.9" rx="0.5" fill="#80a0ff"/></svg>
<div class="t" style="left:310.00px;top:407.14px;font-size:6.1px;line-height:7.1px;color:#ffffff;letter-spacing:-0.1px;-webkit-text-stroke:0.2px #fff;">Computations Topper</div>
<div style="position:absolute;left:310.00px;top:416.90px;width:17.80px;height:6.80px;background:#5f5f5f;border-radius:2px;box-shadow:0 0.3px 0.6px rgba(0,0,0,.25);"></div>
<div class="t" style="left:312.20px;top:416.99px;font-size:5.8px;line-height:6.8px;color:#f0f0f0;font-weight:bold;">M</div>
<div class="t" style="left:321.80px;top:416.99px;font-size:5.8px;line-height:6.8px;color:#f0f0f0;font-weight:bold;">S</div>
<div style="position:absolute;left:351.80px;top:416.10px;width:56.00px;height:8.20px;background:#3a3a3a;border-radius:4px;"></div>
<div style="position:absolute;left:354.80px;top:418.60px;width:25.70px;height:3.20px;background:#3fd25e;"></div>
<div style="position:absolute;left:392.40px;top:416.80px;width:6.80px;height:6.80px;background:#8a8a8a;border-radius:50%;opacity:0.9;"></div>
<div style="position:absolute;left:380.40px;top:418.20px;width:0.50px;height:4.00px;background:#a6e040;"></div>
<div style="position:absolute;left:411.60px;top:414.90px;width:10.60px;height:10.60px;background:#353535;border-radius:50%;"></div>
<div style="position:absolute;left:413.10px;top:416.40px;width:7.60px;height:7.60px;background:#8e8e8e;border-radius:50%;"></div>
<div style="position:absolute;left:427.00px;top:276.00px;width:288.00px;height:158.00px;background:#2b2b2b;"></div>
<div style="position:absolute;left:715.00px;top:276.00px;width:12.50px;height:158.00px;background:#2b2b2b;"></div>
<div style="position:absolute;left:716.00px;top:276.00px;width:10.00px;height:72.30px;background:#6c6c6c;"></div>
<div style="position:absolute;left:716.00px;top:349.20px;width:10.00px;height:43.80px;background:#585858;"></div>
<div style="position:absolute;left:716.00px;top:393.90px;width:10.00px;height:40.10px;background:#585858;"></div>
<svg style="position:absolute;left:428.40px;top:277.30px;" width="70" height="70.4" viewBox="0 0 70 70.4"><rect x="0" y="0" width="70" height="70.4" rx="2" fill="#a314d4"/><circle cx="35" cy="38.4" r="26.6" fill="rgba(255,255,255,0.13)"/><circle cx="35" cy="38.4" r="7.22" fill="none" stroke="rgba(255,255,255,0.42)" stroke-width="0.4"/><circle cx="35" cy="38.4" r="9.64" fill="none" stroke="rgba(255,255,255,0.42)" stroke-width="0.4"/><circle cx="35" cy="38.4" r="12.07" fill="none" stroke="rgba(255,255,255,0.42)" stroke-width="0.4"/><circle cx="35" cy="38.4" r="14.49" fill="none" stroke="rgba(255,255,255,0.42)" stroke-width="0.4"/><circle cx="35" cy="38.4" r="16.91" fill="none" stroke="rgba(255,255,255,0.42)" stroke-width="0.4"/><circle cx="35" cy="38.4" r="19.33" fill="none" stroke="rgba(255,255,255,0.42)" stroke-width="0.4"/><circle cx="35" cy="38.4" r="21.76" fill="none" stroke="rgba(255,255,255,0.42)" stroke-width="0.4"/><circle cx="35" cy="38.4" r="24.18" fill="none" stroke="rgba(255,255,255,0.42)" stroke-width="0.4"/><circle cx="35" cy="38.4" r="26.60" fill="none" stroke="rgba(255,255,255,0.42)" stroke-width="0.4"/><line x1="39.80" y1="38.40" x2="61.60" y2="38.40" stroke="rgba(255,255,255,0.26)" stroke-width="0.3"/><line x1="39.76" y1="39.03" x2="61.37" y2="41.87" stroke="rgba(255,255,255,0.26)" stroke-width="0.3"/><line x1="39.64" y1="39.64" x2="60.69" y2="45.28" stroke="rgba(255,255,255,0.26)" stroke-width="0.3"/><line x1="39.43" y1="40.24" x2="59.58" y2="48.58" stroke="rgba(255,255,255,0.26)" stroke-width="0.3"/><line x1="39.16" y1="40.80" x2="58.04" y2="51.70" stroke="rgba(255,255,255,0.26)" stroke-width="0.3"/><line x1="38.81" y1="41.32" x2="56.10" y2="54.59" stroke="rgba(255,255,255,0.26)" stroke-width="0.3"/><line x1="38.39" y1="41.79" x2="53.81" y2="57.21" stroke="rgba(255,255,255,0.26)" stroke-width="0.3"/><line x1="37.92" y1="42.21" x2="51.19" y2="59.50" stroke="rgba(255,255,255,0.26)" stroke-width="0.3"/><line x1="37.40" y1="42.56" x2="48.30" y2="61.44" stroke="rgba(255,255,255,0.26)" stroke-width="0.3"/><line x1="36.84" y1="42.83" x2="45.18" y2="62.98" stroke="rgba(255,255,255,0.26)" stroke-width="0.3"/><line x1="36.24" y1="43.04" x2="41.88" y2="64.09" stroke="rgba(255,255,255,0.26)" stroke-width="0.3"/><line x1="35.63" y1="43.16" x2="38.47" y2="64.77" stroke="rgba(255,255,255,0.26)" stroke-width="0.3"/><line x1="35.00" y1="43.20" x2="35.00" y2="65.00" stroke="rgba(255,255,255,0.26)" stroke-width="0.3"/><line x1="34.37" y1="43.16" x2="31.53" y2="64.77" stroke="rgba(255,255,255,0.26)" stroke-width="0.3"/><line x1="33.76" y1="43.04" x2="28.12" y2="64.09" stroke="rgba(255,255,255,0.26)" stroke-width="0.3"/><line x1="33.16" y1="42.83" x2="24.82" y2="62.98" stroke="rgba(255,255,255,0.26)" stroke-width="0.3"/><line x1="32.60" y1="42.56" x2="21.70" y2="61.44" stroke="rgba(255,255,255,0.26)" stroke-width="0.3"/><line x1="32.08" y1="42.21" x2="18.81" y2="59.50" stroke="rgba(255,255,255,0.26)" stroke-width="0.3"/><line x1="31.61" y1="41.79" x2="16.19" y2="57.21" stroke="rgba(255,255,255,0.26)" stroke-width="0.3"/><line x1="31.19" y1="41.32" x2="13.90" y2="54.59" stroke="rgba(255,255,255,0.26)" stroke-width="0.3"/><line x1="30.84" y1="40.80" x2="11.96" y2="51.70" stroke="rgba(255,255,255,0.26)" stroke-width="0.3"/><line x1="30.57" y1="40.24" x2="10.42" y2="48.58" stroke="rgba(255,255,255,0.26)" stroke-width="0.3"/><line x1="30.36" y1="39.64" x2="9.31" y2="45.28" stroke="rgba(255,255,255,0.26)" stroke-width="0.3"/><line x1="30.24" y1="39.03" x2="8.63" y2="41.87" stroke="rgba(255,255,255,0.26)" stroke-width="0.3"/><line x1="30.20" y1="38.40" x2="8.40" y2="38.40" stroke="rgba(255,255,255,0.26)" stroke-width="0.3"/><line x1="30.24" y1="37.77" x2="8.63" y2="34.93" stroke="rgba(255,255,255,0.26)" stroke-width="0.3"/><line x1="30.36" y1="37.16" x2="9.31" y2="31.52" stroke="rgba(255,255,255,0.26)" stroke-width="0.3"/><line x1="30.57" y1="36.56" x2="10.42" y2="28.22" stroke="rgba(255,255,255,0.26)" stroke-width="0.3"/><line x1="30.84" y1="36.00" x2="11.96" y2="25.10" stroke="rgba(255,255,255,0.26)" stroke-width="0.3"/><line x1="31.19" y1="35.48" x2="13.90" y2="22.21" stroke="rgba(255,255,255,0.26)" stroke-width="0.3"/><line x1="31.61" y1="35.01" x2="16.19" y2="19.59" stroke="rgba(255,255,255,0.26)" stroke-width="0.3"/><line x1="32.08" y1="34.59" x2="18.81" y2="17.30" stroke="rgba(255,255,255,0.26)" stroke-width="0.3"/><line x1="32.60" y1="34.24" x2="21.70" y2="15.36" stroke="rgba(255,255,255,0.26)" stroke-width="0.3"/><line x1="33.16" y1="33.97" x2="24.82" y2="13.82" stroke="rgba(255,255,255,0.26)" stroke-width="0.3"/><line x1="33.76" y1="33.76" x2="28.12" y2="12.71" stroke="rgba(255,255,255,0.26)" stroke-width="0.3"/><line x1="34.37" y1="33.64" x2="31.53" y2="12.03" stroke="rgba(255,255,255,0.26)" stroke-width="0.3"/><line x1="35.00" y1="33.60" x2="35.00" y2="11.80" stroke="rgba(255,255,255,0.26)" stroke-width="0.3"/><line x1="35.63" y1="33.64" x2="38.47" y2="12.03" stroke="rgba(255,255,255,0.26)" stroke-width="0.3"/><line x1="36.24" y1="33.76" x2="41.88" y2="12.71" stroke="rgba(255,255,255,0.26)" stroke-width="0.3"/><line x1="36.84" y1="33.97" x2="45.18" y2="13.82" stroke="rgba(255,255,255,0.26)" stroke-width="0.3"/><line x1="37.40" y1="34.24" x2="48.30" y2="15.36" stroke="rgba(255,255,255,0.26)" stroke-width="0.3"/><line x1="37.92" y1="34.59" x2="51.19" y2="17.30" stroke="rgba(255,255,255,0.26)" stroke-width="0.3"/><line x1="38.39" y1="35.01" x2="53.81" y2="19.59" stroke="rgba(255,255,255,0.26)" stroke-width="0.3"/><line x1="38.81" y1="35.48" x2="56.10" y2="22.21" stroke="rgba(255,255,255,0.26)" stroke-width="0.3"/><line x1="39.16" y1="36.00" x2="58.04" y2="25.10" stroke="rgba(255,255,255,0.26)" stroke-width="0.3"/><line x1="39.43" y1="36.56" x2="59.58" y2="28.22" stroke="rgba(255,255,255,0.26)" stroke-width="0.3"/><line x1="39.64" y1="37.16" x2="60.69" y2="31.52" stroke="rgba(255,255,255,0.26)" stroke-width="0.3"/><line x1="39.76" y1="37.77" x2="61.37" y2="34.93" stroke="rgba(255,255,255,0.26)" stroke-width="0.3"/><path d="M50.14 21.38A22.78 22.78 0 0 1 55.64 28.77" fill="none" stroke="rgba(255,255,255,0.8)" stroke-width="0.9"/><path d="M13.26 45.19A22.78 22.78 0 0 1 12.34 36.04" fill="none" stroke="rgba(255,255,255,0.8)" stroke-width="0.9"/><path d="M40.22 50.40A13.09 13.09 0 0 1 36.40 51.41" fill="none" stroke="rgba(255,255,255,0.8)" stroke-width="0.9"/><path d="M43.86 44.35A10.67 10.67 0 0 1 42.18 46.29" fill="none" stroke="rgba(255,255,255,0.8)" stroke-width="0.9"/><path d="M27.00 36.42A8.24 8.24 0 0 1 28.49 33.34" fill="none" stroke="rgba(255,255,255,0.8)" stroke-width="0.9"/><path d="M30.19 35.11A5.82 5.82 0 0 1 31.24 33.96" fill="none" stroke="rgba(255,255,255,0.8)" stroke-width="0.9"/><path d="M22.07 19.65A22.78 22.78 0 0 1 28.95 16.44" fill="none" stroke="rgba(255,255,255,0.8)" stroke-width="0.9"/><path d="M27.37 30.95A10.67 10.67 0 0 1 30.87 28.57" fill="none" stroke="rgba(255,255,255,0.8)" stroke-width="0.9"/><path d="M42.67 41.41A8.24 8.24 0 0 1 41.89 42.93" fill="none" stroke="rgba(255,255,255,0.8)" stroke-width="0.9"/><path d="M24.39 30.73A13.09 13.09 0 0 1 28.03 27.32" fill="none" stroke="rgba(255,255,255,0.8)" stroke-width="0.9"/><path d="M18.30 44.95A17.93 17.93 0 0 1 17.07 37.88" fill="none" stroke="rgba(255,255,255,0.8)" stroke-width="0.9"/><path d="M37.58 63.47A25.20 25.20 0 0 1 31.60 63.37" fill="none" stroke="rgba(255,255,255,0.8)" stroke-width="0.9"/><path d="M31.96 33.44A5.82 5.82 0 0 1 33.49 32.78" fill="none" stroke="rgba(255,255,255,0.8)" stroke-width="0.9"/><path d="M22.07 46.97A15.51 15.51 0 0 1 20.05 42.54" fill="none" stroke="rgba(255,255,255,0.8)" stroke-width="0.9"/><path d="M32.84 30.44A8.24 8.24 0 0 1 34.83 30.16" fill="none" stroke="rgba(255,255,255,0.8)" stroke-width="0.9"/><path d="M21.95 37.34A13.09 13.09 0 0 1 22.29 35.29" fill="none" stroke="rgba(255,255,255,0.8)" stroke-width="0.9"/><path d="M28.32 43.23A8.24 8.24 0 0 1 26.96 40.21" fill="none" stroke="rgba(255,255,255,0.8)" stroke-width="0.9"/><path d="M53.59 46.70A20.36 20.36 0 0 1 52.08 49.47" fill="none" stroke="rgba(255,255,255,0.8)" stroke-width="0.9"/><path d="M36.32 44.07A5.82 5.82 0 0 1 33.85 44.11" fill="none" stroke="rgba(255,255,255,0.8)" stroke-width="0.9"/><path d="M29.28 39.49A5.82 5.82 0 0 1 29.37 36.93" fill="none" stroke="rgba(255,255,255,0.8)" stroke-width="0.9"/><path d="M17.18 48.23A20.36 20.36 0 0 1 14.99 42.13" fill="none" stroke="rgba(255,255,255,0.8)" stroke-width="0.9"/><path d="M37.33 25.52A13.09 13.09 0 0 1 40.22 26.40" fill="none" stroke="rgba(255,255,255,0.8)" stroke-width="0.9"/><path d="M31.91 46.04A8.24 8.24 0 0 1 30.77 45.47" fill="none" stroke="rgba(255,255,255,0.8)" stroke-width="0.9"/><path d="M36.03 18.07A20.36 20.36 0 0 1 39.76 18.61" fill="none" stroke="rgba(255,255,255,0.8)" stroke-width="0.9"/><path d="M31.51 25.79A13.09 13.09 0 0 1 33.47 25.40" fill="none" stroke="rgba(255,255,255,0.8)" stroke-width="0.9"/><path d="M41.63 16.61A22.78 22.78 0 0 1 45.90 18.40" fill="none" stroke="rgba(255,255,255,0.8)" stroke-width="0.9"/><path d="M44.51 61.74A25.20 25.20 0 0 1 37.13 63.51" fill="none" stroke="rgba(255,255,255,0.8)" stroke-width="0.9"/><path d="M25.68 43.58A10.67 10.67 0 0 1 24.65 40.96" fill="none" stroke="rgba(255,255,255,0.8)" stroke-width="0.9"/><path d="M17.12 48.12A20.36 20.36 0 0 1 15.46 44.10" fill="none" stroke="rgba(255,255,255,0.8)" stroke-width="0.9"/><path d="M45.21 26.72A15.51 15.51 0 0 1 49.23 32.22" fill="none" stroke="rgba(255,255,255,0.8)" stroke-width="0.9"/><path d="M50.51 38.20A15.51 15.51 0 0 1 50.35 40.61" fill="none" stroke="rgba(255,255,255,0.8)" stroke-width="0.9"/><path d="M26.60 44.98A10.67 10.67 0 0 1 24.69 41.12" fill="none" stroke="rgba(255,255,255,0.8)" stroke-width="0.9"/><path d="M42.96 40.56A8.24 8.24 0 0 1 42.39 42.05" fill="none" stroke="rgba(255,255,255,0.8)" stroke-width="0.9"/><path d="M33.82 61.15A22.78 22.78 0 0 1 25.43 59.07" fill="none" stroke="rgba(255,255,255,0.8)" stroke-width="0.9"/><path d="M43.67 22.70A17.93 17.93 0 0 1 47.49 25.53" fill="none" stroke="rgba(255,255,255,0.8)" stroke-width="0.9"/><path d="M41.96 42.82A8.24 8.24 0 0 1 40.18 44.81" fill="none" stroke="rgba(255,255,255,0.8)" stroke-width="0.9"/><path d="M48.03 39.67A13.09 13.09 0 0 1 47.26 42.99" fill="none" stroke="rgba(255,255,255,0.8)" stroke-width="0.9"/><path d="M50.88 54.73A22.78 22.78 0 0 1 44.81 58.96" fill="none" stroke="rgba(255,255,255,0.8)" stroke-width="0.9"/><path d="M42.13 30.47A10.67 10.67 0 0 1 43.60 32.08" fill="none" stroke="rgba(255,255,255,0.8)" stroke-width="0.9"/><path d="M31.02 48.30A10.67 10.67 0 0 1 28.97 47.20" fill="none" stroke="rgba(255,255,255,0.8)" stroke-width="0.9"/><path d="M35 38.4L35.00 11.80A26.6 26.6 0 0 1 57.31 52.89z" fill="rgba(255,235,255,0.55)" stroke="rgba(255,255,255,0.7)" stroke-width="0.5"/><circle cx="35" cy="38.4" r="4.8" fill="#a314d4"/><rect x="0.4" y="0.4" width="69.2" height="69.6" rx="2" fill="none" stroke="#f4c8fa" stroke-width="0.8"/><rect x="0.4" y="0.4" width="69.2" height="6.4" fill="#f2c4f8"/></svg>
<div class="t" style="left:430.40px;top:278.07px;font-size:5.0px;line-height:6.0px;color:#6e3a80;font-weight:bold;letter-spacing:-0.05px;">Trap Beat 1</div>
<svg style="position:absolute;left:500.60px;top:277.30px;" width="70" height="70.4" viewBox="0 0 70 70.4"><rect x="0" y="0" width="70" height="70.4" rx="2" fill="#a314d4"/><circle cx="35" cy="38.4" r="26.6" fill="rgba(255,255,255,0.13)"/><circle cx="35" cy="38.4" r="7.22" fill="none" stroke="rgba(255,255,255,0.42)" stroke-width="0.4"/><circle cx="35" cy="38.4" r="9.64" fill="none" stroke="rgba(255,255,255,0.42)" stroke-width="0.4"/><circle cx="35" cy="38.4" r="12.07" fill="none" stroke="rgba(255,255,255,0.42)" stroke-width="0.4"/><circle cx="35" cy="38.4" r="14.49" fill="none" stroke="rgba(255,255,255,0.42)" stroke-width="0.4"/><circle cx="35" cy="38.4" r="16.91" fill="none" stroke="rgba(255,255,255,0.42)" stroke-width="0.4"/><circle cx="35" cy="38.4" r="19.33" fill="none" stroke="rgba(255,255,255,0.42)" stroke-width="0.4"/><circle cx="35" cy="38.4" r="21.76" fill="none" stroke="rgba(255,255,255,0.42)" stroke-width="0.4"/><circle cx="35" cy="38.4" r="24.18" fill="none" stroke="rgba(255,255,255,0.42)" stroke-width="0.4"/><circle cx="35" cy="38.4" r="26.60" fill="none" stroke="rgba(255,255,255,0.42)" stroke-width="0.4"/><line x1="39.80" y1="38.40" x2="61.60" y2="38.40" stroke="rgba(255,255,255,0.26)" stroke-width="0.3"/><line x1="39.76" y1="39.03" x2="61.37" y2="41.87" stroke="rgba(255,255,255,0.26)" stroke-width="0.3"/><line x1="39.64" y1="39.64" x2="60.69" y2="45.28" stroke="rgba(255,255,255,0.26)" stroke-width="0.3"/><line x1="39.43" y1="40.24" x2="59.58" y2="48.58" stroke="rgba(255,255,255,0.26)" stroke-width="0.3"/><line x1="39.16" y1="40.80" x2="58.04" y2="51.70" stroke="rgba(255,255,255,0.26)" stroke-width="0.3"/><line x1="38.81" y1="41.32" x2="56.10" y2="54.59" stroke="rgba(255,255,255,0.26)" stroke-width="0.3"/><line x1="38.39" y1="41.79" x2="53.81" y2="57.21" stroke="rgba(255,255,255,0.26)" stroke-width="0.3"/><line x1="37.92" y1="42.21" x2="51.19" y2="59.50" stroke="rgba(255,255,255,0.26)" stroke-width="0.3"/><line x1="37.40" y1="42.56" x2="48.30" y2="61.44" stroke="rgba(255,255,255,0.26)" stroke-width="0.3"/><line x1="36.84" y1="42.83" x2="45.18" y2="62.98" stroke="rgba(255,255,255,0.26)" stroke-width="0.3"/><line x1="36.24" y1="43.04" x2="41.88" y2="64.09" stroke="rgba(255,255,255,0.26)" stroke-width="0.3"/><line x1="35.63" y1="43.16" x2="38.47" y2="64.77" stroke="rgba(255,255,255,0.26)" stroke-width="0.3"/><line x1="35.00" y1="43.20" x2="35.00" y2="65.00" stroke="rgba(255,255,255,0.26)" stroke-width="0.3"/><line x1="34.37" y1="43.16" x2="31.53" y2="64.77" stroke="rgba(255,255,255,0.26)" stroke-width="0.3"/><line x1="33.76" y1="43.04" x2="28.12" y2="64.09" stroke="rgba(255,255,255,0.26)" stroke-width="0.3"/><line x1="33.16" y1="42.83" x2="24.82" y2="62.98" stroke="rgba(255,255,255,0.26)" stroke-width="0.3"/><line x1="32.60" y1="42.56" x2="21.70" y2="61.44" stroke="rgba(255,255,255,0.26)" stroke-width="0.3"/><line x1="32.08" y1="42.21" x2="18.81" y2="59.50" stroke="rgba(255,255,255,0.26)" stroke-width="0.3"/><line x1="31.61" y1="41.79" x2="16.19" y2="57.21" stroke="rgba(255,255,255,0.26)" stroke-width="0.3"/><line x1="31.19" y1="41.32" x2="13.90" y2="54.59" stroke="rgba(255,255,255,0.26)" stroke-width="0.3"/><line x1="30.84" y1="40.80" x2="11.96" y2="51.70" stroke="rgba(255,255,255,0.26)" stroke-width="0.3"/><line x1="30.57" y1="40.24" x2="10.42" y2="48.58" stroke="rgba(255,255,255,0.26)" stroke-width="0.3"/><line x1="30.36" y1="39.64" x2="9.31" y2="45.28" stroke="rgba(255,255,255,0.26)" stroke-width="0.3"/><line x1="30.24" y1="39.03" x2="8.63" y2="41.87" stroke="rgba(255,255,255,0.26)" stroke-width="0.3"/><line x1="30.20" y1="38.40" x2="8.40" y2="38.40" stroke="rgba(255,255,255,0.26)" stroke-width="0.3"/><line x1="30.24" y1="37.77" x2="8.63" y2="34.93" stroke="rgba(255,255,255,0.26)" stroke-width="0.3"/><line x1="30.36" y1="37.16" x2="9.31" y2="31.52" stroke="rgba(255,255,255,0.26)" stroke-width="0.3"/><line x1="30.57" y1="36.56" x2="10.42" y2="28.22" stroke="rgba(255,255,255,0.26)" stroke-width="0.3"/><line x1="30.84" y1="36.00" x2="11.96" y2="25.10" stroke="rgba(255,255,255,0.26)" stroke-width="0.3"/><line x1="31.19" y1="35.48" x2="13.90" y2="22.21" stroke="rgba(255,255,255,0.26)" stroke-width="0.3"/><line x1="31.61" y1="35.01" x2="16.19" y2="19.59" stroke="rgba(255,255,255,0.26)" stroke-width="0.3"/><line x1="32.08" y1="34.59" x2="18.81" y2="17.30" stroke="rgba(255,255,255,0.26)" stroke-width="0.3"/><line x1="32.60" y1="34.24" x2="21.70" y2="15.36" stroke="rgba(255,255,255,0.26)" stroke-width="0.3"/><line x1="33.16" y1="33.97" x2="24.82" y2="13.82" stroke="rgba(255,255,255,0.26)" stroke-width="0.3"/><line x1="33.76" y1="33.76" x2="28.12" y2="12.71" stroke="rgba(255,255,255,0.26)" stroke-width="0.3"/><line x1="34.37" y1="33.64" x2="31.53" y2="12.03" stroke="rgba(255,255,255,0.26)" stroke-width="0.3"/><line x1="35.00" y1="33.60" x2="35.00" y2="11.80" stroke="rgba(255,255,255,0.26)" stroke-width="0.3"/><line x1="35.63" y1="33.64" x2="38.47" y2="12.03" stroke="rgba(255,255,255,0.26)" stroke-width="0.3"/><line x1="36.24" y1="33.76" x2="41.88" y2="12.71" stroke="rgba(255,255,255,0.26)" stroke-width="0.3"/><line x1="36.84" y1="33.97" x2="45.18" y2="13.82" stroke="rgba(255,255,255,0.26)" stroke-width="0.3"/><line x1="37.40" y1="34.24" x2="48.30" y2="15.36" stroke="rgba(255,255,255,0.26)" stroke-width="0.3"/><line x1="37.92" y1="34.59" x2="51.19" y2="17.30" stroke="rgba(255,255,255,0.26)" stroke-width="0.3"/><line x1="38.39" y1="35.01" x2="53.81" y2="19.59" stroke="rgba(255,255,255,0.26)" stroke-width="0.3"/><line x1="38.81" y1="35.48" x2="56.10" y2="22.21" stroke="rgba(255,255,255,0.26)" stroke-width="0.3"/><line x1="39.16" y1="36.00" x2="58.04" y2="25.10" stroke="rgba(255,255,255,0.26)" stroke-width="0.3"/><line x1="39.43" y1="36.56" x2="59.58" y2="28.22" stroke="rgba(255,255,255,0.26)" stroke-width="0.3"/><line x1="39.64" y1="37.16" x2="60.69" y2="31.52" stroke="rgba(255,255,255,0.26)" stroke-width="0.3"/><line x1="39.76" y1="37.77" x2="61.37" y2="34.93" stroke="rgba(255,255,255,0.26)" stroke-width="0.3"/><path d="M29.05 39.36A6.02 6.02 0 0 1 29.22 36.70" fill="none" stroke="rgba(255,255,255,0.9)" stroke-width="1.0"/><path d="M31.98 33.19A6.02 6.02 0 0 1 33.16 32.67" fill="none" stroke="rgba(255,255,255,0.9)" stroke-width="1.0"/><path d="M41.01 38.81A6.02 6.02 0 0 1 40.58 40.67" fill="none" stroke="rgba(255,255,255,0.9)" stroke-width="1.0"/><path d="M33.73 46.75A8.44 8.44 0 0 1 29.78 45.04" fill="none" stroke="rgba(255,255,255,0.9)" stroke-width="1.0"/><path d="M31.92 30.54A8.44 8.44 0 0 1 35.40 29.97" fill="none" stroke="rgba(255,255,255,0.9)" stroke-width="1.0"/><path d="M27.11 35.38A8.44 8.44 0 0 1 29.20 32.27" fill="none" stroke="rgba(255,255,255,0.9)" stroke-width="1.0"/><path d="M41.64 47.00A10.87 10.87 0 0 1 38.31 48.75" fill="none" stroke="rgba(255,255,255,0.9)" stroke-width="1.0"/><path d="M40.69 47.66A10.87 10.87 0 0 1 34.93 49.27" fill="none" stroke="rgba(255,255,255,0.9)" stroke-width="1.0"/><path d="M45.13 42.33A10.87 10.87 0 0 1 41.86 46.83" fill="none" stroke="rgba(255,255,255,0.9)" stroke-width="1.0"/><path d="M46.86 44.40A13.29 13.29 0 0 1 42.97 49.04" fill="none" stroke="rgba(255,255,255,0.9)" stroke-width="1.0"/><path d="M28.09 49.75A13.29 13.29 0 0 1 24.77 46.88" fill="none" stroke="rgba(255,255,255,0.9)" stroke-width="1.0"/><path d="M42.29 27.29A13.29 13.29 0 0 1 43.95 28.58" fill="none" stroke="rgba(255,255,255,0.9)" stroke-width="1.0"/><path d="M49.58 44.26A15.71 15.71 0 0 1 44.22 51.12" fill="none" stroke="rgba(255,255,255,0.9)" stroke-width="1.0"/><path d="M19.31 37.52A15.71 15.71 0 0 1 19.77 34.56" fill="none" stroke="rgba(255,255,255,0.9)" stroke-width="1.0"/><path d="M50.66 37.13A15.71 15.71 0 0 1 48.82 45.87" fill="none" stroke="rgba(255,255,255,0.9)" stroke-width="1.0"/><path d="M48.79 50.18A18.13 18.13 0 0 1 44.06 54.11" fill="none" stroke="rgba(255,255,255,0.9)" stroke-width="1.0"/><path d="M46.99 52.01A18.13 18.13 0 0 1 42.58 54.87" fill="none" stroke="rgba(255,255,255,0.9)" stroke-width="1.0"/><path d="M21.90 25.87A18.13 18.13 0 0 1 25.00 23.27" fill="none" stroke="rgba(255,255,255,0.9)" stroke-width="1.0"/><path d="M28.26 18.98A20.56 20.56 0 0 1 31.71 18.11" fill="none" stroke="rgba(255,255,255,0.9)" stroke-width="1.0"/><path d="M44.77 56.49A20.56 20.56 0 0 1 34.55 58.95" fill="none" stroke="rgba(255,255,255,0.9)" stroke-width="1.0"/><path d="M18.33 50.43A20.56 20.56 0 0 1 15.28 44.21" fill="none" stroke="rgba(255,255,255,0.9)" stroke-width="1.0"/><path d="M16.07 25.37A22.98 22.98 0 0 1 21.96 19.48" fill="none" stroke="rgba(255,255,255,0.9)" stroke-width="1.0"/><path d="M17.80 53.64A22.98 22.98 0 0 1 15.55 50.63" fill="none" stroke="rgba(255,255,255,0.9)" stroke-width="1.0"/><path d="M31.59 15.68A22.98 22.98 0 0 1 44.72 17.58" fill="none" stroke="rgba(255,255,255,0.9)" stroke-width="1.0"/><path d="M60.12 34.63A25.40 25.40 0 0 1 59.27 45.90" fill="none" stroke="rgba(255,255,255,0.9)" stroke-width="1.0"/><path d="M19.26 58.34A25.40 25.40 0 0 1 13.88 52.51" fill="none" stroke="rgba(255,255,255,0.9)" stroke-width="1.0"/><path d="M25.67 14.78A25.40 25.40 0 0 1 36.95 13.08" fill="none" stroke="rgba(255,255,255,0.9)" stroke-width="1.0"/><circle cx="35" cy="38.4" r="4.8" fill="#a314d4"/></svg>
<div class="t" style="left:502.60px;top:278.07px;font-size:5.0px;line-height:6.0px;color:#ffffff;font-weight:bold;letter-spacing:-0.05px;">Trap Beat 2</div>
<svg style="position:absolute;left:572.80px;top:277.30px;" width="70" height="70.4" viewBox="0 0 70 70.4"><rect x="0" y="0" width="70" height="70.4" rx="2" fill="#a314d4"/><circle cx="35" cy="38.4" r="26.6" fill="rgba(255,255,255,0.13)"/><circle cx="35" cy="38.4" r="7.22" fill="none" stroke="rgba(255,255,255,0.42)" stroke-width="0.4"/><circle cx="35" cy="38.4" r="9.64" fill="none" stroke="rgba(255,255,255,0.42)" stroke-width="0.4"/><circle cx="35" cy="38.4" r="12.07" fill="none" stroke="rgba(255,255,255,0.42)" stroke-width="0.4"/><circle cx="35" cy="38.4" r="14.49" fill="none" stroke="rgba(255,255,255,0.42)" stroke-width="0.4"/><circle cx="35" cy="38.4" r="16.91" fill="none" stroke="rgba(255,255,255,0.42)" stroke-width="0.4"/><circle cx="35" cy="38.4" r="19.33" fill="none" stroke="rgba(255,255,255,0.42)" stroke-width="0.4"/><circle cx="35" cy="38.4" r="21.76" fill="none" stroke="rgba(255,255,255,0.42)" stroke-width="0.4"/><circle cx="35" cy="38.4" r="24.18" fill="none" stroke="rgba(255,255,255,0.42)" stroke-width="0.4"/><circle cx="35" cy="38.4" r="26.60" fill="none" stroke="rgba(255,255,255,0.42)" stroke-width="0.4"/><line x1="39.80" y1="38.40" x2="61.60" y2="38.40" stroke="rgba(255,255,255,0.26)" stroke-width="0.3"/><line x1="39.76" y1="39.03" x2="61.37" y2="41.87" stroke="rgba(255,255,255,0.26)" stroke-width="0.3"/><line x1="39.64" y1="39.64" x2="60.69" y2="45.28" stroke="rgba(255,255,255,0.26)" stroke-width="0.3"/><line x1="39.43" y1="40.24" x2="59.58" y2="48.58" stroke="rgba(255,255,255,0.26)" stroke-width="0.3"/><line x1="39.16" y1="40.80" x2="58.04" y2="51.70" stroke="rgba(255,255,255,0.26)" stroke-width="0.3"/><line x1="38.81" y1="41.32" x2="56.10" y2="54.59" stroke="rgba(255,255,255,0.26)" stroke-width="0.3"/><line x1="38.39" y1="41.79" x2="53.81" y2="57.21" stroke="rgba(255,255,255,0.26)" stroke-width="0.3"/><line x1="37.92" y1="42.21" x2="51.19" y2="59.50" stroke="rgba(255,255,255,0.26)" stroke-width="0.3"/><line x1="37.40" y1="42.56" x2="48.30" y2="61.44" stroke="rgba(255,255,255,0.26)" stroke-width="0.3"/><line x1="36.84" y1="42.83" x2="45.18" y2="62.98" stroke="rgba(255,255,255,0.26)" stroke-width="0.3"/><line x1="36.24" y1="43.04" x2="41.88" y2="64.09" stroke="rgba(255,255,255,0.26)" stroke-width="0.3"/><line x1="35.63" y1="43.16" x2="38.47" y2="64.77" stroke="rgba(255,255,255,0.26)" stroke-width="0.3"/><line x1="35.00" y1="43.20" x2="35.00" y2="65.00" stroke="rgba(255,255,255,0.26)" stroke-width="0.3"/><line x1="34.37" y1="43.16" x2="31.53" y2="64.77" stroke="rgba(255,255,255,0.26)" stroke-width="0.3"/><line x1="33.76" y1="43.04" x2="28.12" y2="64.09" stroke="rgba(255,255,255,0.26)" stroke-width="0.3"/><line x1="33.16" y1="42.83" x2="24.82" y2="62.98" stroke="rgba(255,255,255,0.26)" stroke-width="0.3"/><line x1="32.60" y1="42.56" x2="21.70" y2="61.44" stroke="rgba(255,255,255,0.26)" stroke-width="0.3"/><line x1="32.08" y1="42.21" x2="18.81" y2="59.50" stroke="rgba(255,255,255,0.26)" stroke-width="0.3"/><line x1="31.61" y1="41.79" x2="16.19" y2="57.21" stroke="rgba(255,255,255,0.26)" stroke-width="0.3"/><line x1="31.19" y1="41.32" x2="13.90" y2="54.59" stroke="rgba(255,255,255,0.26)" stroke-width="0.3"/><line x1="30.84" y1="40.80" x2="11.96" y2="51.70" stroke="rgba(255,255,255,0.26)" stroke-width="0.3"/><line x1="30.57" y1="40.24" x2="10.42" y2="48.58" stroke="rgba(255,255,255,0.26)" stroke-width="0.3"/><line x1="30.36" y1="39.64" x2="9.31" y2="45.28" stroke="rgba(255,255,255,0.26)" stroke-width="0.3"/><line x1="30.24" y1="39.03" x2="8.63" y2="41.87" stroke="rgba(255,255,255,0.26)" stroke-width="0.3"/><line x1="30.20" y1="38.40" x2="8.40" y2="38.40" stroke="rgba(255,255,255,0.26)" stroke-width="0.3"/><line x1="30.24" y1="37.77" x2="8.63" y2="34.93" stroke="rgba(255,255,255,0.26)" stroke-width="0.3"/><line x1="30.36" y1="37.16" x2="9.31" y2="31.52" stroke="rgba(255,255,255,0.26)" stroke-width="0.3"/><line x1="30.57" y1="36.56" x2="10.42" y2="28.22" stroke="rgba(255,255,255,0.26)" stroke-width="0.3"/><line x1="30.84" y1="36.00" x2="11.96" y2="25.10" stroke="rgba(255,255,255,0.26)" stroke-width="0.3"/><line x1="31.19" y1="35.48" x2="13.90" y2="22.21" stroke="rgba(255,255,255,0.26)" stroke-width="0.3"/><line x1="31.61" y1="35.01" x2="16.19" y2="19.59" stroke="rgba(255,255,255,0.26)" stroke-width="0.3"/><line x1="32.08" y1="34.59" x2="18.81" y2="17.30" stroke="rgba(255,255,255,0.26)" stroke-width="0.3"/><line x1="32.60" y1="34.24" x2="21.70" y2="15.36" stroke="rgba(255,255,255,0.26)" stroke-width="0.3"/><line x1="33.16" y1="33.97" x2="24.82" y2="13.82" stroke="rgba(255,255,255,0.26)" stroke-width="0.3"/><line x1="33.76" y1="33.76" x2="28.12" y2="12.71" stroke="rgba(255,255,255,0.26)" stroke-width="0.3"/><line x1="34.37" y1="33.64" x2="31.53" y2="12.03" stroke="rgba(255,255,255,0.26)" stroke-width="0.3"/><line x1="35.00" y1="33.60" x2="35.00" y2="11.80" stroke="rgba(255,255,255,0.26)" stroke-width="0.3"/><line x1="35.63" y1="33.64" x2="38.47" y2="12.03" stroke="rgba(255,255,255,0.26)" stroke-width="0.3"/><line x1="36.24" y1="33.76" x2="41.88" y2="12.71" stroke="rgba(255,255,255,0.26)" stroke-width="0.3"/><line x1="36.84" y1="33.97" x2="45.18" y2="13.82" stroke="rgba(255,255,255,0.26)" stroke-width="0.3"/><line x1="37.40" y1="34.24" x2="48.30" y2="15.36" stroke="rgba(255,255,255,0.26)" stroke-width="0.3"/><line x1="37.92" y1="34.59" x2="51.19" y2="17.30" stroke="rgba(255,255,255,0.26)" stroke-width="0.3"/><line x1="38.39" y1="35.01" x2="53.81" y2="19.59" stroke="rgba(255,255,255,0.26)" stroke-width="0.3"/><line x1="38.81" y1="35.48" x2="56.10" y2="22.21" stroke="rgba(255,255,255,0.26)" stroke-width="0.3"/><line x1="39.16" y1="36.00" x2="58.04" y2="25.10" stroke="rgba(255,255,255,0.26)" stroke-width="0.3"/><line x1="39.43" y1="36.56" x2="59.58" y2="28.22" stroke="rgba(255,255,255,0.26)" stroke-width="0.3"/><line x1="39.64" y1="37.16" x2="60.69" y2="31.52" stroke="rgba(255,255,255,0.26)" stroke-width="0.3"/><line x1="39.76" y1="37.77" x2="61.37" y2="34.93" stroke="rgba(255,255,255,0.26)" stroke-width="0.3"/><path d="M41.02 38.40A6.02 6.02 0 0 1 36.61 44.20" fill="none" stroke="rgba(255,255,255,0.8)" stroke-width="0.9"/><path d="M42.84 41.53A8.44 8.44 0 0 1 34.08 46.79" fill="none" stroke="rgba(255,255,255,0.8)" stroke-width="0.9"/><path d="M42.88 45.89A10.87 10.87 0 0 1 29.89 47.99" fill="none" stroke="rgba(255,255,255,0.8)" stroke-width="0.9"/><path d="M40.55 50.47A13.29 13.29 0 0 1 24.85 46.98" fill="none" stroke="rgba(255,255,255,0.8)" stroke-width="0.9"/><path d="M35.80 54.09A15.71 15.71 0 0 1 20.09 43.37" fill="none" stroke="rgba(255,255,255,0.8)" stroke-width="0.9"/><path d="M29.14 55.56A18.13 18.13 0 0 1 16.90 37.34" fill="none" stroke="rgba(255,255,255,0.8)" stroke-width="0.9"/><path d="M21.61 54.00A20.56 20.56 0 0 1 16.39 29.67" fill="none" stroke="rgba(255,255,255,0.8)" stroke-width="0.9"/><path d="M14.64 49.04A22.98 22.98 0 0 1 19.30 21.62" fill="none" stroke="rgba(255,255,255,0.8)" stroke-width="0.9"/><path d="M9.73 40.98A25.40 25.40 0 0 1 25.76 14.74" fill="none" stroke="rgba(255,255,255,0.8)" stroke-width="0.9"/><path d="M31.99 43.62A6.02 6.02 0 0 1 29.17 36.89" fill="none" stroke="rgba(255,255,255,0.8)" stroke-width="0.9"/><path d="M28.37 43.63A8.44 8.44 0 0 1 28.19 33.41" fill="none" stroke="rgba(255,255,255,0.8)" stroke-width="0.9"/><path d="M24.58 41.48A10.87 10.87 0 0 1 29.25 29.18" fill="none" stroke="rgba(255,255,255,0.8)" stroke-width="0.9"/><path d="M21.77 37.17A13.29 13.29 0 0 1 32.65 25.32" fill="none" stroke="rgba(255,255,255,0.8)" stroke-width="0.9"/><path d="M21.01 31.25A15.71 15.71 0 0 1 38.15 23.01" fill="none" stroke="rgba(255,255,255,0.8)" stroke-width="0.9"/><path d="M23.07 24.74A18.13 18.13 0 0 1 44.97 23.25" fill="none" stroke="rgba(255,255,255,0.8)" stroke-width="0.9"/><path d="M28.18 19.01A20.56 20.56 0 0 1 51.86 26.64" fill="none" stroke="rgba(255,255,255,0.8)" stroke-width="0.9"/><path d="M35.96 15.44A22.98 22.98 0 0 1 57.38 33.19" fill="none" stroke="rgba(255,255,255,0.8)" stroke-width="0.9"/><path d="M45.40 15.23A25.40 25.40 0 0 1 60.11 42.23" fill="none" stroke="rgba(255,255,255,0.8)" stroke-width="0.9"/><path d="M31.99 33.18A6.02 6.02 0 0 1 39.22 34.10" fill="none" stroke="rgba(255,255,255,0.8)" stroke-width="0.9"/><path d="M33.79 30.04A8.44 8.44 0 0 1 42.73 35.00" fill="none" stroke="rgba(255,255,255,0.8)" stroke-width="0.9"/><path d="M37.55 27.84A10.87 10.87 0 0 1 45.86 38.03" fill="none" stroke="rgba(255,255,255,0.8)" stroke-width="0.9"/><path d="M42.68 27.56A13.29 13.29 0 0 1 47.50 42.90" fill="none" stroke="rgba(255,255,255,0.8)" stroke-width="0.9"/><path d="M48.19 29.86A15.71 15.71 0 0 1 46.75 48.83" fill="none" stroke="rgba(255,255,255,0.8)" stroke-width="0.9"/><path d="M52.79 34.90A18.13 18.13 0 0 1 43.13 54.61" fill="none" stroke="rgba(255,255,255,0.8)" stroke-width="0.9"/><path d="M55.20 42.19A20.56 20.56 0 0 1 36.75 58.88" fill="none" stroke="rgba(255,255,255,0.8)" stroke-width="0.9"/><path d="M54.40 50.71A22.98 22.98 0 0 1 28.32 60.39" fill="none" stroke="rgba(255,255,255,0.8)" stroke-width="0.9"/><path d="M49.87 59.00A25.40 25.40 0 0 1 19.13 58.23" fill="none" stroke="rgba(255,255,255,0.8)" stroke-width="0.9"/><path d="M31.07 53.41A15.51 15.51 0 0 1 29.30 52.83" fill="none" stroke="rgba(255,255,255,0.7)" stroke-width="0.9"/><path d="M28.84 29.69A10.67 10.67 0 0 1 29.93 29.02" fill="none" stroke="rgba(255,255,255,0.7)" stroke-width="0.9"/><path d="M42.26 30.59A10.67 10.67 0 0 1 43.15 31.51" fill="none" stroke="rgba(255,255,255,0.7)" stroke-width="0.9"/><path d="M42.29 46.19A10.67 10.67 0 0 1 41.31 47.00" fill="none" stroke="rgba(255,255,255,0.7)" stroke-width="0.9"/><path d="M49.27 17.63A25.20 25.20 0 0 1 51.65 19.49" fill="none" stroke="rgba(255,255,255,0.7)" stroke-width="0.9"/><path d="M50.24 41.30A15.51 15.51 0 0 1 49.78 43.11" fill="none" stroke="rgba(255,255,255,0.7)" stroke-width="0.9"/><path d="M40.58 29.31A10.67 10.67 0 0 1 41.63 30.04" fill="none" stroke="rgba(255,255,255,0.7)" stroke-width="0.9"/><path d="M40.82 38.14A5.82 5.82 0 0 1 40.81 38.84" fill="none" stroke="rgba(255,255,255,0.7)" stroke-width="0.9"/><path d="M44.18 43.83A10.67 10.67 0 0 1 43.47 44.89" fill="none" stroke="rgba(255,255,255,0.7)" stroke-width="0.9"/><path d="M42.16 24.64A15.51 15.51 0 0 1 43.76 25.60" fill="none" stroke="rgba(255,255,255,0.7)" stroke-width="0.9"/><path d="M54.33 32.03A20.36 20.36 0 0 1 54.96 34.39" fill="none" stroke="rgba(255,255,255,0.7)" stroke-width="0.9"/><path d="M25.44 50.61A15.51 15.51 0 0 1 24.04 49.38" fill="none" stroke="rgba(255,255,255,0.7)" stroke-width="0.9"/><path d="M21.96 39.49A13.09 13.09 0 0 1 21.92 37.92" fill="none" stroke="rgba(255,255,255,0.7)" stroke-width="0.9"/><path d="M11.82 28.52A25.20 25.20 0 0 1 13.17 25.81" fill="none" stroke="rgba(255,255,255,0.7)" stroke-width="0.9"/><path d="M25.28 20.52A20.36 20.36 0 0 1 27.49 19.48" fill="none" stroke="rgba(255,255,255,0.7)" stroke-width="0.9"/><path d="M21.89 22.83A20.36 20.36 0 0 1 23.85 21.37" fill="none" stroke="rgba(255,255,255,0.7)" stroke-width="0.9"/><circle cx="35" cy="38.4" r="4.8" fill="#a314d4"/></svg>
<div class="t" style="left:574.80px;top:278.07px;font-size:5.0px;line-height:6.0px;color:#ffffff;font-weight:bold;letter-spacing:-0.05px;">Trap Beat 3</div>
<svg style="position:absolute;left:645.00px;top:277.30px;" width="70" height="70.4" viewBox="0 0 70 70.4"><rect x="0" y="0" width="70" height="70.4" rx="2" fill="#a314d4"/><circle cx="35" cy="38.4" r="26.6" fill="rgba(255,255,255,0.13)"/><circle cx="35" cy="38.4" r="7.22" fill="none" stroke="rgba(255,255,255,0.42)" stroke-width="0.4"/><circle cx="35" cy="38.4" r="9.64" fill="none" stroke="rgba(255,255,255,0.42)" stroke-width="0.4"/><circle cx="35" cy="38.4" r="12.07" fill="none" stroke="rgba(255,255,255,0.42)" stroke-width="0.4"/><circle cx="35" cy="38.4" r="14.49" fill="none" stroke="rgba(255,255,255,0.42)" stroke-width="0.4"/><circle cx="35" cy="38.4" r="16.91" fill="none" stroke="rgba(255,255,255,0.42)" stroke-width="0.4"/><circle cx="35" cy="38.4" r="19.33" fill="none" stroke="rgba(255,255,255,0.42)" stroke-width="0.4"/><circle cx="35" cy="38.4" r="21.76" fill="none" stroke="rgba(255,255,255,0.42)" stroke-width="0.4"/><circle cx="35" cy="38.4" r="24.18" fill="none" stroke="rgba(255,255,255,0.42)" stroke-width="0.4"/><circle cx="35" cy="38.4" r="26.60" fill="none" stroke="rgba(255,255,255,0.42)" stroke-width="0.4"/><line x1="39.80" y1="38.40" x2="61.60" y2="38.40" stroke="rgba(255,255,255,0.26)" stroke-width="0.3"/><line x1="39.76" y1="39.03" x2="61.37" y2="41.87" stroke="rgba(255,255,255,0.26)" stroke-width="0.3"/><line x1="39.64" y1="39.64" x2="60.69" y2="45.28" stroke="rgba(255,255,255,0.26)" stroke-width="0.3"/><line x1="39.43" y1="40.24" x2="59.58" y2="48.58" stroke="rgba(255,255,255,0.26)" stroke-width="0.3"/><line x1="39.16" y1="40.80" x2="58.04" y2="51.70" stroke="rgba(255,255,255,0.26)" stroke-width="0.3"/><line x1="38.81" y1="41.32" x2="56.10" y2="54.59" stroke="rgba(255,255,255,0.26)" stroke-width="0.3"/><line x1="38.39" y1="41.79" x2="53.81" y2="57.21" stroke="rgba(255,255,255,0.26)" stroke-width="0.3"/><line x1="37.92" y1="42.21" x2="51.19" y2="59.50" stroke="rgba(255,255,255,0.26)" stroke-width="0.3"/><line x1="37.40" y1="42.56" x2="48.30" y2="61.44" stroke="rgba(255,255,255,0.26)" stroke-width="0.3"/><line x1="36.84" y1="42.83" x2="45.18" y2="62.98" stroke="rgba(255,255,255,0.26)" stroke-width="0.3"/><line x1="36.24" y1="43.04" x2="41.88" y2="64.09" stroke="rgba(255,255,255,0.26)" stroke-width="0.3"/><line x1="35.63" y1="43.16" x2="38.47" y2="64.77" stroke="rgba(255,255,255,0.26)" stroke-width="0.3"/><line x1="35.00" y1="43.20" x2="35.00" y2="65.00" stroke="rgba(255,255,255,0.26)" stroke-width="0.3"/><line x1="34.37" y1="43.16" x2="31.53" y2="64.77" stroke="rgba(255,255,255,0.26)" stroke-width="0.3"/><line x1="33.76" y1="43.04" x2="28.12" y2="64.09" stroke="rgba(255,255,255,0.26)" stroke-width="0.3"/><line x1="33.16" y1="42.83" x2="24.82" y2="62.98" stroke="rgba(255,255,255,0.26)" stroke-width="0.3"/><line x1="32.60" y1="42.56" x2="21.70" y2="61.44" stroke="rgba(255,255,255,0.26)" stroke-width="0.3"/><line x1="32.08" y1="42.21" x2="18.81" y2="59.50" stroke="rgba(255,255,255,0.26)" stroke-width="0.3"/><line x1="31.61" y1="41.79" x2="16.19" y2="57.21" stroke="rgba(255,255,255,0.26)" stroke-width="0.3"/><line x1="31.19" y1="41.32" x2="13.90" y2="54.59" stroke="rgba(255,255,255,0.26)" stroke-width="0.3"/><line x1="30.84" y1="40.80" x2="11.96" y2="51.70" stroke="rgba(255,255,255,0.26)" stroke-width="0.3"/><line x1="30.57" y1="40.24" x2="10.42" y2="48.58" stroke="rgba(255,255,255,0.26)" stroke-width="0.3"/><line x1="30.36" y1="39.64" x2="9.31" y2="45.28" stroke="rgba(255,255,255,0.26)" stroke-width="0.3"/><line x1="30.24" y1="39.03" x2="8.63" y2="41.87" stroke="rgba(255,255,255,0.26)" stroke-width="0.3"/><line x1="30.20" y1="38.40" x2="8.40" y2="38.40" stroke="rgba(255,255,255,0.26)" stroke-width="0.3"/><line x1="30.24" y1="37.77" x2="8.63" y2="34.93" stroke="rgba(255,255,255,0.26)" stroke-width="0.3"/><line x1="30.36" y1="37.16" x2="9.31" y2="31.52" stroke="rgba(255,255,255,0.26)" stroke-width="0.3"/><line x1="30.57" y1="36.56" x2="10.42" y2="28.22" stroke="rgba(255,255,255,0.26)" stroke-width="0.3"/><line x1="30.84" y1="36.00" x2="11.96" y2="25.10" stroke="rgba(255,255,255,0.26)" stroke-width="0.3"/><line x1="31.19" y1="35.48" x2="13.90" y2="22.21" stroke="rgba(255,255,255,0.26)" stroke-width="0.3"/><line x1="31.61" y1="35.01" x2="16.19" y2="19.59" stroke="rgba(255,255,255,0.26)" stroke-width="0.3"/><line x1="32.08" y1="34.59" x2="18.81" y2="17.30" stroke="rgba(255,255,255,0.26)" stroke-width="0.3"/><line x1="32.60" y1="34.24" x2="21.70" y2="15.36" stroke="rgba(255,255,255,0.26)" stroke-width="0.3"/><line x1="33.16" y1="33.97" x2="24.82" y2="13.82" stroke="rgba(255,255,255,0.26)" stroke-width="0.3"/><line x1="33.76" y1="33.76" x2="28.12" y2="12.71" stroke="rgba(255,255,255,0.26)" stroke-width="0.3"/><line x1="34.37" y1="33.64" x2="31.53" y2="12.03" stroke="rgba(255,255,255,0.26)" stroke-width="0.3"/><line x1="35.00" y1="33.60" x2="35.00" y2="11.80" stroke="rgba(255,255,255,0.26)" stroke-width="0.3"/><line x1="35.63" y1="33.64" x2="38.47" y2="12.03" stroke="rgba(255,255,255,0.26)" stroke-width="0.3"/><line x1="36.24" y1="33.76" x2="41.88" y2="12.71" stroke="rgba(255,255,255,0.26)" stroke-width="0.3"/><line x1="36.84" y1="33.97" x2="45.18" y2="13.82" stroke="rgba(255,255,255,0.26)" stroke-width="0.3"/><line x1="37.40" y1="34.24" x2="48.30" y2="15.36" stroke="rgba(255,255,255,0.26)" stroke-width="0.3"/><line x1="37.92" y1="34.59" x2="51.19" y2="17.30" stroke="rgba(255,255,255,0.26)" stroke-width="0.3"/><line x1="38.39" y1="35.01" x2="53.81" y2="19.59" stroke="rgba(255,255,255,0.26)" stroke-width="0.3"/><line x1="38.81" y1="35.48" x2="56.10" y2="22.21" stroke="rgba(255,255,255,0.26)" stroke-width="0.3"/><line x1="39.16" y1="36.00" x2="58.04" y2="25.10" stroke="rgba(255,255,255,0.26)" stroke-width="0.3"/><line x1="39.43" y1="36.56" x2="59.58" y2="28.22" stroke="rgba(255,255,255,0.26)" stroke-width="0.3"/><line x1="39.64" y1="37.16" x2="60.69" y2="31.52" stroke="rgba(255,255,255,0.26)" stroke-width="0.3"/><line x1="39.76" y1="37.77" x2="61.37" y2="34.93" stroke="rgba(255,255,255,0.26)" stroke-width="0.3"/><path d="M41.02 38.58A6.02 6.02 0 0 1 40.86 39.78" fill="none" stroke="rgba(255,255,255,0.45)" stroke-width="1.6"/><path d="M40.12 41.57A6.02 6.02 0 0 1 39.38 42.53" fill="none" stroke="rgba(255,255,255,0.45)" stroke-width="1.6"/><path d="M37.85 43.70A6.02 6.02 0 0 1 36.73 44.17" fill="none" stroke="rgba(255,255,255,0.45)" stroke-width="1.6"/><path d="M34.82 44.42A6.02 6.02 0 0 1 33.62 44.26" fill="none" stroke="rgba(255,255,255,0.45)" stroke-width="1.6"/><path d="M31.83 43.52A6.02 6.02 0 0 1 30.87 42.78" fill="none" stroke="rgba(255,255,255,0.45)" stroke-width="1.6"/><path d="M29.70 41.25A6.02 6.02 0 0 1 29.23 40.13" fill="none" stroke="rgba(255,255,255,0.45)" stroke-width="1.6"/><path d="M28.98 38.22A6.02 6.02 0 0 1 29.14 37.02" fill="none" stroke="rgba(255,255,255,0.45)" stroke-width="1.6"/><path d="M29.88 35.23A6.02 6.02 0 0 1 30.62 34.27" fill="none" stroke="rgba(255,255,255,0.45)" stroke-width="1.6"/><path d="M32.15 33.10A6.02 6.02 0 0 1 33.27 32.63" fill="none" stroke="rgba(255,255,255,0.45)" stroke-width="1.6"/><path d="M35.18 32.38A6.02 6.02 0 0 1 36.38 32.54" fill="none" stroke="rgba(255,255,255,0.45)" stroke-width="1.6"/><path d="M38.17 33.28A6.02 6.02 0 0 1 39.13 34.02" fill="none" stroke="rgba(255,255,255,0.45)" stroke-width="1.6"/><path d="M40.30 35.55A6.02 6.02 0 0 1 40.77 36.67" fill="none" stroke="rgba(255,255,255,0.45)" stroke-width="1.6"/><path d="M43.09 40.83A8.44 8.44 0 0 1 42.44 42.40" fill="none" stroke="rgba(255,255,255,0.45)" stroke-width="1.6"/><path d="M40.79 44.55A8.44 8.44 0 0 1 39.44 45.58" fill="none" stroke="rgba(255,255,255,0.45)" stroke-width="1.6"/><path d="M36.94 46.62A8.44 8.44 0 0 1 35.25 46.84" fill="none" stroke="rgba(255,255,255,0.45)" stroke-width="1.6"/><path d="M32.57 46.49A8.44 8.44 0 0 1 31.00 45.84" fill="none" stroke="rgba(255,255,255,0.45)" stroke-width="1.6"/><path d="M28.85 44.19A8.44 8.44 0 0 1 27.82 42.84" fill="none" stroke="rgba(255,255,255,0.45)" stroke-width="1.6"/><path d="M26.78 40.34A8.44 8.44 0 0 1 26.56 38.65" fill="none" stroke="rgba(255,255,255,0.45)" stroke-width="1.6"/><path d="M26.91 35.97A8.44 8.44 0 0 1 27.56 34.40" fill="none" stroke="rgba(255,255,255,0.45)" stroke-width="1.6"/><path d="M29.21 32.25A8.44 8.44 0 0 1 30.56 31.22" fill="none" stroke="rgba(255,255,255,0.45)" stroke-width="1.6"/><path d="M33.06 30.18A8.44 8.44 0 0 1 34.75 29.96" fill="none" stroke="rgba(255,255,255,0.45)" stroke-width="1.6"/><path d="M37.43 30.31A8.44 8.44 0 0 1 39.00 30.96" fill="none" stroke="rgba(255,255,255,0.45)" stroke-width="1.6"/><path d="M41.15 32.61A8.44 8.44 0 0 1 42.18 33.96" fill="none" stroke="rgba(255,255,255,0.45)" stroke-width="1.6"/><path d="M43.22 36.46A8.44 8.44 0 0 1 43.44 38.15" fill="none" stroke="rgba(255,255,255,0.45)" stroke-width="1.6"/><path d="M45.86 38.73A10.87 10.87 0 0 1 45.58 40.90" fill="none" stroke="rgba(255,255,255,0.45)" stroke-width="1.6"/><path d="M44.24 44.11A10.87 10.87 0 0 1 42.91 45.85" fill="none" stroke="rgba(255,255,255,0.45)" stroke-width="1.6"/><path d="M40.15 47.97A10.87 10.87 0 0 1 38.13 48.81" fill="none" stroke="rgba(255,255,255,0.45)" stroke-width="1.6"/><path d="M34.67 49.26A10.87 10.87 0 0 1 32.50 48.98" fill="none" stroke="rgba(255,255,255,0.45)" stroke-width="1.6"/><path d="M29.29 47.64A10.87 10.87 0 0 1 27.55 46.31" fill="none" stroke="rgba(255,255,255,0.45)" stroke-width="1.6"/><path d="M25.43 43.55A10.87 10.87 0 0 1 24.59 41.53" fill="none" stroke="rgba(255,255,255,0.45)" stroke-width="1.6"/><path d="M24.14 38.07A10.87 10.87 0 0 1 24.42 35.90" fill="none" stroke="rgba(255,255,255,0.45)" stroke-width="1.6"/><path d="M25.76 32.69A10.87 10.87 0 0 1 27.09 30.95" fill="none" stroke="rgba(255,255,255,0.45)" stroke-width="1.6"/><path d="M29.85 28.83A10.87 10.87 0 0 1 31.87 27.99" fill="none" stroke="rgba(255,255,255,0.45)" stroke-width="1.6"/><path d="M35.33 27.54A10.87 10.87 0 0 1 37.50 27.82" fill="none" stroke="rgba(255,255,255,0.45)" stroke-width="1.6"/><path d="M40.71 29.16A10.87 10.87 0 0 1 42.45 30.49" fill="none" stroke="rgba(255,255,255,0.45)" stroke-width="1.6"/><path d="M44.57 33.25A10.87 10.87 0 0 1 45.41 35.27" fill="none" stroke="rgba(255,255,255,0.45)" stroke-width="1.6"/><path d="M47.73 42.22A13.29 13.29 0 0 1 46.70 44.70" fill="none" stroke="rgba(255,255,255,0.45)" stroke-width="1.6"/><path d="M44.11 48.07A13.29 13.29 0 0 1 41.99 49.70" fill="none" stroke="rgba(255,255,255,0.45)" stroke-width="1.6"/><path d="M38.05 51.33A13.29 13.29 0 0 1 35.40 51.68" fill="none" stroke="rgba(255,255,255,0.45)" stroke-width="1.6"/><path d="M31.18 51.13A13.29 13.29 0 0 1 28.70 50.10" fill="none" stroke="rgba(255,255,255,0.45)" stroke-width="1.6"/><path d="M25.33 47.51A13.29 13.29 0 0 1 23.70 45.39" fill="none" stroke="rgba(255,255,255,0.45)" stroke-width="1.6"/><path d="M22.07 41.45A13.29 13.29 0 0 1 21.72 38.80" fill="none" stroke="rgba(255,255,255,0.45)" stroke-width="1.6"/><path d="M22.27 34.58A13.29 13.29 0 0 1 23.30 32.10" fill="none" stroke="rgba(255,255,255,0.45)" stroke-width="1.6"/><path d="M25.89 28.73A13.29 13.29 0 0 1 28.01 27.10" fill="none" stroke="rgba(255,255,255,0.45)" stroke-width="1.6"/><path d="M31.95 25.47A13.29 13.29 0 0 1 34.60 25.12" fill="none" stroke="rgba(255,255,255,0.45)" stroke-width="1.6"/><path d="M38.82 25.67A13.29 13.29 0 0 1 41.30 26.70" fill="none" stroke="rgba(255,255,255,0.45)" stroke-width="1.6"/><path d="M44.67 29.29A13.29 13.29 0 0 1 46.30 31.41" fill="none" stroke="rgba(255,255,255,0.45)" stroke-width="1.6"/><path d="M47.93 35.35A13.29 13.29 0 0 1 48.28 38.00" fill="none" stroke="rgba(255,255,255,0.45)" stroke-width="1.6"/><path d="M50.70 38.87A15.71 15.71 0 0 1 50.29 42.01" fill="none" stroke="rgba(255,255,255,0.45)" stroke-width="1.6"/><path d="M48.36 46.66A15.71 15.71 0 0 1 46.44 49.17" fill="none" stroke="rgba(255,255,255,0.45)" stroke-width="1.6"/><path d="M42.44 52.24A15.71 15.71 0 0 1 39.52 53.45" fill="none" stroke="rgba(255,255,255,0.45)" stroke-width="1.6"/><path d="M34.53 54.10A15.71 15.71 0 0 1 31.39 53.69" fill="none" stroke="rgba(255,255,255,0.45)" stroke-width="1.6"/><path d="M26.74 51.76A15.71 15.71 0 0 1 24.23 49.84" fill="none" stroke="rgba(255,255,255,0.45)" stroke-width="1.6"/><path d="M21.16 45.84A15.71 15.71 0 0 1 19.95 42.92" fill="none" stroke="rgba(255,255,255,0.45)" stroke-width="1.6"/><path d="M19.30 37.93A15.71 15.71 0 0 1 19.71 34.79" fill="none" stroke="rgba(255,255,255,0.45)" stroke-width="1.6"/><path d="M21.64 30.14A15.71 15.71 0 0 1 23.56 27.63" fill="none" stroke="rgba(255,255,255,0.45)" stroke-width="1.6"/><path d="M27.56 24.56A15.71 15.71 0 0 1 30.48 23.35" fill="none" stroke="rgba(255,255,255,0.45)" stroke-width="1.6"/><path d="M35.47 22.70A15.71 15.71 0 0 1 38.61 23.11" fill="none" stroke="rgba(255,255,255,0.45)" stroke-width="1.6"/><path d="M43.26 25.04A15.71 15.71 0 0 1 45.77 26.96" fill="none" stroke="rgba(255,255,255,0.45)" stroke-width="1.6"/><path d="M48.84 30.96A15.71 15.71 0 0 1 50.05 33.88" fill="none" stroke="rgba(255,255,255,0.45)" stroke-width="1.6"/><path d="M52.37 43.62A18.13 18.13 0 0 1 50.97 46.99" fill="none" stroke="rgba(255,255,255,0.45)" stroke-width="1.6"/><path d="M47.43 51.60A18.13 18.13 0 0 1 44.53 53.82" fill="none" stroke="rgba(255,255,255,0.45)" stroke-width="1.6"/><path d="M39.17 56.05A18.13 18.13 0 0 1 35.54 56.53" fill="none" stroke="rgba(255,255,255,0.45)" stroke-width="1.6"/><path d="M29.78 55.77A18.13 18.13 0 0 1 26.41 54.37" fill="none" stroke="rgba(255,255,255,0.45)" stroke-width="1.6"/><path d="M21.80 50.83A18.13 18.13 0 0 1 19.58 47.93" fill="none" stroke="rgba(255,255,255,0.45)" stroke-width="1.6"/><path d="M17.35 42.57A18.13 18.13 0 0 1 16.87 38.94" fill="none" stroke="rgba(255,255,255,0.45)" stroke-width="1.6"/><path d="M17.63 33.18A18.13 18.13 0 0 1 19.03 29.81" fill="none" stroke="rgba(255,255,255,0.45)" stroke-width="1.6"/><path d="M22.57 25.20A18.13 18.13 0 0 1 25.47 22.98" fill="none" stroke="rgba(255,255,255,0.45)" stroke-width="1.6"/><path d="M30.83 20.75A18.13 18.13 0 0 1 34.46 20.27" fill="none" stroke="rgba(255,255,255,0.45)" stroke-width="1.6"/><path d="M40.22 21.03A18.13 18.13 0 0 1 43.59 22.43" fill="none" stroke="rgba(255,255,255,0.45)" stroke-width="1.6"/><path d="M48.20 25.97A18.13 18.13 0 0 1 50.42 28.87" fill="none" stroke="rgba(255,255,255,0.45)" stroke-width="1.6"/><path d="M52.65 34.23A18.13 18.13 0 0 1 53.13 37.86" fill="none" stroke="rgba(255,255,255,0.45)" stroke-width="1.6"/><path d="M55.55 39.02A20.56 20.56 0 0 1 55.01 43.12" fill="none" stroke="rgba(255,255,255,0.45)" stroke-width="1.6"/><path d="M52.49 49.21A20.56 20.56 0 0 1 49.96 52.49" fill="none" stroke="rgba(255,255,255,0.45)" stroke-width="1.6"/><path d="M44.74 56.50A20.56 20.56 0 0 1 40.91 58.09" fill="none" stroke="rgba(255,255,255,0.45)" stroke-width="1.6"/><path d="M34.38 58.95A20.56 20.56 0 0 1 30.28 58.41" fill="none" stroke="rgba(255,255,255,0.45)" stroke-width="1.6"/><path d="M24.19 55.89A20.56 20.56 0 0 1 20.91 53.36" fill="none" stroke="rgba(255,255,255,0.45)" stroke-width="1.6"/><path d="M16.90 48.14A20.56 20.56 0 0 1 15.31 44.31" fill="none" stroke="rgba(255,255,255,0.45)" stroke-width="1.6"/><path d="M14.45 37.78A20.56 20.56 0 0 1 14.99 33.68" fill="none" stroke="rgba(255,255,255,0.45)" stroke-width="1.6"/><path d="M17.51 27.59A20.56 20.56 0 0 1 20.04 24.31" fill="none" stroke="rgba(255,255,255,0.45)" stroke-width="1.6"/><path d="M25.26 20.30A20.56 20.56 0 0 1 29.09 18.71" fill="none" stroke="rgba(255,255,255,0.45)" stroke-width="1.6"/><path d="M35.62 17.85A20.56 20.56 0 0 1 39.72 18.39" fill="none" stroke="rgba(255,255,255,0.45)" stroke-width="1.6"/><path d="M45.81 20.91A20.56 20.56 0 0 1 49.09 23.44" fill="none" stroke="rgba(255,255,255,0.45)" stroke-width="1.6"/><path d="M53.10 28.66A20.56 20.56 0 0 1 54.69 32.49" fill="none" stroke="rgba(255,255,255,0.45)" stroke-width="1.6"/><path d="M57.01 45.01A22.98 22.98 0 0 1 55.24 49.29" fill="none" stroke="rgba(255,255,255,0.45)" stroke-width="1.6"/><path d="M50.75 55.13A22.98 22.98 0 0 1 47.08 57.95" fill="none" stroke="rgba(255,255,255,0.45)" stroke-width="1.6"/><path d="M40.28 60.76A22.98 22.98 0 0 1 35.69 61.37" fill="none" stroke="rgba(255,255,255,0.45)" stroke-width="1.6"/><path d="M28.39 60.41A22.98 22.98 0 0 1 24.11 58.64" fill="none" stroke="rgba(255,255,255,0.45)" stroke-width="1.6"/><path d="M18.27 54.15A22.98 22.98 0 0 1 15.45 50.48" fill="none" stroke="rgba(255,255,255,0.45)" stroke-width="1.6"/><path d="M12.64 43.68A22.98 22.98 0 0 1 12.03 39.09" fill="none" stroke="rgba(255,255,255,0.45)" stroke-width="1.6"/><path d="M12.99 31.79A22.98 22.98 0 0 1 14.76 27.51" fill="none" stroke="rgba(255,255,255,0.45)" stroke-width="1.6"/><path d="M19.25 21.67A22.98 22.98 0 0 1 22.92 18.85" fill="none" stroke="rgba(255,255,255,0.45)" stroke-width="1.6"/><path d="M29.72 16.04A22.98 22.98 0 0 1 34.31 15.43" fill="none" stroke="rgba(255,255,255,0.45)" stroke-width="1.6"/><path d="M41.61 16.39A22.98 22.98 0 0 1 45.89 18.16" fill="none" stroke="rgba(255,255,255,0.45)" stroke-width="1.6"/><path d="M51.73 22.65A22.98 22.98 0 0 1 54.55 26.32" fill="none" stroke="rgba(255,255,255,0.45)" stroke-width="1.6"/><path d="M57.36 33.12A22.98 22.98 0 0 1 57.97 37.71" fill="none" stroke="rgba(255,255,255,0.45)" stroke-width="1.6"/><path d="M60.39 39.16A25.40 25.40 0 0 1 59.72 44.24" fill="none" stroke="rgba(255,255,255,0.45)" stroke-width="1.6"/><path d="M56.61 51.75A25.40 25.40 0 0 1 53.49 55.81" fill="none" stroke="rgba(255,255,255,0.45)" stroke-width="1.6"/><path d="M47.03 60.77A25.40 25.40 0 0 1 42.31 62.73" fill="none" stroke="rgba(255,255,255,0.45)" stroke-width="1.6"/><path d="M34.24 63.79A25.40 25.40 0 0 1 29.16 63.12" fill="none" stroke="rgba(255,255,255,0.45)" stroke-width="1.6"/><path d="M21.65 60.01A25.40 25.40 0 0 1 17.59 56.89" fill="none" stroke="rgba(255,255,255,0.45)" stroke-width="1.6"/><path d="M12.63 50.43A25.40 25.40 0 0 1 10.67 45.71" fill="none" stroke="rgba(255,255,255,0.45)" stroke-width="1.6"/><path d="M9.61 37.64A25.40 25.40 0 0 1 10.28 32.56" fill="none" stroke="rgba(255,255,255,0.45)" stroke-width="1.6"/><path d="M13.39 25.05A25.40 25.40 0 0 1 16.51 20.99" fill="none" stroke="rgba(255,255,255,0.45)" stroke-width="1.6"/><path d="M22.97 16.03A25.40 25.40 0 0 1 27.69 14.07" fill="none" stroke="rgba(255,255,255,0.45)" stroke-width="1.6"/><path d="M35.76 13.01A25.40 25.40 0 0 1 40.84 13.68" fill="none" stroke="rgba(255,255,255,0.45)" stroke-width="1.6"/><path d="M48.35 16.79A25.40 25.40 0 0 1 52.41 19.91" fill="none" stroke="rgba(255,255,255,0.45)" stroke-width="1.6"/><path d="M57.37 26.37A25.40 25.40 0 0 1 59.33 31.09" fill="none" stroke="rgba(255,255,255,0.45)" stroke-width="1.6"/><circle cx="35" cy="38.4" r="4.8" fill="#a314d4"/></svg>
<div class="t" style="left:647.00px;top:278.07px;font-size:5.0px;line-height:6.0px;color:#ffffff;font-weight:bold;letter-spacing:-0.05px;">Trap Beat 4</div>
<svg style="position:absolute;left:428.40px;top:349.90px;" width="70" height="42" viewBox="0 0 70 42"><rect x="0" y="0" width="70" height="42" rx="2" fill="#7c36d8"/><path transform="translate(41.54 23.65) rotate(16.5)" d="M0 0h1.91" stroke="#f4ecff" stroke-width="0.75"/><path transform="translate(43.98 26.59) rotate(-49.8)" d="M0 0h2.04" stroke="#f4ecff" stroke-width="0.75"/><path transform="translate(39.39 26.75) rotate(-41.6)" d="M0 0h2.90" stroke="#f4ecff" stroke-width="0.75"/><path transform="translate(38.37 28.91) rotate(-37.3)" d="M0 0h3.15" stroke="#f4ecff" stroke-width="0.75"/><path transform="translate(37.86 30.53) rotate(12.9)" d="M0 0h2.58" stroke="#f4ecff" stroke-width="0.75"/><path transform="translate(34.61 32.63) rotate(23.2)" d="M0 0h2.90" stroke="#f4ecff" stroke-width="0.75"/><path transform="translate(32.56 30.86) rotate(-8.4)" d="M0 0h1.89" stroke="#f4ecff" stroke-width="0.75"/><path transform="translate(30.60 31.41) rotate(24.0)" d="M0 0h1.68" stroke="#f4ecff" stroke-width="0.75"/><path transform="translate(29.85 27.12) rotate(23.1)" d="M0 0h2.28" stroke="#f4ecff" stroke-width="0.75"/><path transform="translate(29.51 26.13) rotate(9.5)" d="M0 0h2.20" stroke="#f4ecff" stroke-width="0.75"/><path transform="translate(26.65 24.35) rotate(38.3)" d="M0 0h2.95" stroke="#f4ecff" stroke-width="0.75"/><path transform="translate(25.42 21.80) rotate(-0.5)" d="M0 0h3.01" stroke="#f4ecff" stroke-width="0.75"/><path transform="translate(26.89 19.10) rotate(-45.0)" d="M0 0h2.47" stroke="#f4ecff" stroke-width="0.75"/><path transform="translate(30.46 19.37) rotate(-15.9)" d="M0 0h2.38" stroke="#f4ecff" stroke-width="0.75"/><path transform="translate(31.44 18.88) rotate(10.4)" d="M0 0h2.20" stroke="#f4ecff" stroke-width="0.75"/><path transform="translate(32.89 14.11) rotate(39.5)" d="M0 0h2.86" stroke="#f4ecff" stroke-width="0.75"/><path transform="translate(34.16 14.45) rotate(-48.2)" d="M0 0h1.73" stroke="#f4ecff" stroke-width="0.75"/><path transform="translate(36.40 16.67) rotate(-56.0)" d="M0 0h2.38" stroke="#f4ecff" stroke-width="0.75"/><path transform="translate(38.35 18.33) rotate(-31.5)" d="M0 0h3.07" stroke="#f4ecff" stroke-width="0.75"/><path transform="translate(40.44 17.92) rotate(-9.8)" d="M0 0h2.90" stroke="#f4ecff" stroke-width="0.75"/><path transform="translate(41.37 19.71) rotate(-16.5)" d="M0 0h2.82" stroke="#f4ecff" stroke-width="0.75"/><path transform="translate(42.06 20.96) rotate(16.7)" d="M0 0h1.52" stroke="#f4ecff" stroke-width="0.75"/><path d="M60.8 38.8l5-4M63.2 34.6h2.6v2.6M60.8 38.8v-2.2M60.8 38.8h2.2" stroke="#d8c4f4" stroke-width="0.6" fill="none"/></svg>
<div class="t" style="left:430.40px;top:350.75px;font-size:4.9px;line-height:5.9px;color:#ffffff;letter-spacing:0px;-webkit-text-stroke:0.18px #fff;">Pumping Acid Bass 01</div>
<svg style="position:absolute;left:500.60px;top:349.90px;" width="70" height="42" viewBox="0 0 70 42"><rect x="0" y="0" width="70" height="42" rx="2" fill="#7c36d8"/><path transform="translate(42.60 23.37) rotate(-40.6)" d="M0 0h2.90" stroke="#f4ecff" stroke-width="0.75"/><path transform="translate(42.40 25.55) rotate(51.2)" d="M0 0h2.18" stroke="#f4ecff" stroke-width="0.75"/><path transform="translate(41.22 28.97) rotate(5.8)" d="M0 0h2.57" stroke="#f4ecff" stroke-width="0.75"/><path transform="translate(38.93 28.78) rotate(59.6)" d="M0 0h2.19" stroke="#f4ecff" stroke-width="0.75"/><path transform="translate(37.10 31.91) rotate(-56.6)" d="M0 0h1.94" stroke="#f4ecff" stroke-width="0.75"/><path transform="translate(35.42 31.97) rotate(-38.7)" d="M0 0h2.55" stroke="#f4ecff" stroke-width="0.75"/><path transform="translate(33.10 31.65) rotate(51.2)" d="M0 0h2.80" stroke="#f4ecff" stroke-width="0.75"/><path transform="translate(31.06 30.81) rotate(-7.4)" d="M0 0h2.92" stroke="#f4ecff" stroke-width="0.75"/><path transform="translate(28.21 29.49) rotate(58.3)" d="M0 0h2.90" stroke="#f4ecff" stroke-width="0.75"/><path transform="translate(26.73 26.56) rotate(11.1)" d="M0 0h1.80" stroke="#f4ecff" stroke-width="0.75"/><path transform="translate(27.59 23.66) rotate(-58.1)" d="M0 0h2.24" stroke="#f4ecff" stroke-width="0.75"/><path transform="translate(28.74 22.48) rotate(55.2)" d="M0 0h1.69" stroke="#f4ecff" stroke-width="0.75"/><path transform="translate(28.02 19.48) rotate(-38.6)" d="M0 0h2.11" stroke="#f4ecff" stroke-width="0.75"/><path transform="translate(30.33 19.37) rotate(31.6)" d="M0 0h2.61" stroke="#f4ecff" stroke-width="0.75"/><path transform="translate(30.52 15.13) rotate(34.3)" d="M0 0h3.19" stroke="#f4ecff" stroke-width="0.75"/><path transform="translate(33.03 15.01) rotate(4.7)" d="M0 0h2.39" stroke="#f4ecff" stroke-width="0.75"/><path transform="translate(35.19 13.53) rotate(39.7)" d="M0 0h2.93" stroke="#f4ecff" stroke-width="0.75"/><path transform="translate(36.07 15.83) rotate(-49.5)" d="M0 0h2.49" stroke="#f4ecff" stroke-width="0.75"/><path transform="translate(39.07 16.27) rotate(43.0)" d="M0 0h1.88" stroke="#f4ecff" stroke-width="0.75"/><path transform="translate(41.05 17.79) rotate(-34.4)" d="M0 0h3.16" stroke="#f4ecff" stroke-width="0.75"/><path transform="translate(41.31 19.04) rotate(4.3)" d="M0 0h2.51" stroke="#f4ecff" stroke-width="0.75"/><path transform="translate(42.80 22.30) rotate(46.4)" d="M0 0h2.00" stroke="#f4ecff" stroke-width="0.75"/><path d="M60.8 38.8l5-4M63.2 34.6h2.6v2.6M60.8 38.8v-2.2M60.8 38.8h2.2" stroke="#d8c4f4" stroke-width="0.6" fill="none"/></svg>
<div class="t" style="left:502.60px;top:350.75px;font-size:4.9px;line-height:5.9px;color:#ffffff;letter-spacing:0px;-webkit-text-stroke:0.18px #fff;">Pumping Acid Bass 02</div>
<svg style="position:absolute;left:572.80px;top:349.90px;" width="70" height="42" viewBox="0 0 70 42"><rect x="0" y="0" width="70" height="42" rx="2" fill="#7c36d8"/><path transform="translate(40.53 24.10) rotate(27.1)" d="M0 0h2.32" stroke="#f4ecff" stroke-width="0.75"/><path transform="translate(41.40 26.28) rotate(50.3)" d="M0 0h1.77" stroke="#f4ecff" stroke-width="0.75"/><path transform="translate(40.18 28.02) rotate(-38.0)" d="M0 0h2.09" stroke="#f4ecff" stroke-width="0.75"/><path transform="translate(38.08 27.62) rotate(-13.5)" d="M0 0h1.52" stroke="#f4ecff" stroke-width="0.75"/><path transform="translate(37.48 28.63) rotate(-32.3)" d="M0 0h1.97" stroke="#f4ecff" stroke-width="0.75"/><path transform="translate(34.91 30.23) rotate(42.9)" d="M0 0h3.03" stroke="#f4ecff" stroke-width="0.75"/><path transform="translate(31.97 32.08) rotate(9.1)" d="M0 0h2.64" stroke="#f4ecff" stroke-width="0.75"/><path transform="translate(30.57 29.41) rotate(-42.9)" d="M0 0h2.38" stroke="#f4ecff" stroke-width="0.75"/><path transform="translate(30.47 27.22) rotate(-48.9)" d="M0 0h1.81" stroke="#f4ecff" stroke-width="0.75"/><path transform="translate(26.85 26.76) rotate(18.8)" d="M0 0h2.23" stroke="#f4ecff" stroke-width="0.75"/><path transform="translate(29.79 24.50) rotate(18.6)" d="M0 0h2.40" stroke="#f4ecff" stroke-width="0.75"/><path transform="translate(28.87 22.44) rotate(-45.2)" d="M0 0h1.81" stroke="#f4ecff" stroke-width="0.75"/><path transform="translate(27.35 20.54) rotate(-23.1)" d="M0 0h2.44" stroke="#f4ecff" stroke-width="0.75"/><path transform="translate(28.82 18.23) rotate(29.3)" d="M0 0h2.83" stroke="#f4ecff" stroke-width="0.75"/><path transform="translate(28.92 15.54) rotate(42.4)" d="M0 0h2.89" stroke="#f4ecff" stroke-width="0.75"/><path transform="translate(31.82 13.95) rotate(37.5)" d="M0 0h1.91" stroke="#f4ecff" stroke-width="0.75"/><path transform="translate(34.95 13.86) rotate(30.3)" d="M0 0h3.03" stroke="#f4ecff" stroke-width="0.75"/><path transform="translate(37.06 14.90) rotate(-50.9)" d="M0 0h2.63" stroke="#f4ecff" stroke-width="0.75"/><path transform="translate(38.79 15.30) rotate(48.3)" d="M0 0h2.13" stroke="#f4ecff" stroke-width="0.75"/><path transform="translate(38.72 18.83) rotate(2.0)" d="M0 0h1.77" stroke="#f4ecff" stroke-width="0.75"/><path transform="translate(42.37 19.68) rotate(0.0)" d="M0 0h2.64" stroke="#f4ecff" stroke-width="0.75"/><path transform="translate(42.18 21.13) rotate(-54.5)" d="M0 0h2.43" stroke="#f4ecff" stroke-width="0.75"/><path d="M60.8 38.8l5-4M63.2 34.6h2.6v2.6M60.8 38.8v-2.2M60.8 38.8h2.2" stroke="#d8c4f4" stroke-width="0.6" fill="none"/></svg>
<div class="t" style="left:574.80px;top:350.75px;font-size:4.9px;line-height:5.9px;color:#ffffff;letter-spacing:0px;-webkit-text-stroke:0.18px #fff;">Pumping Acid Bass 03</div>
<div style="position:absolute;left:645.00px;top:349.90px;width:70.00px;height:41.90px;background:#383838;border-radius:1px;"></div>
<svg style="position:absolute;left:428.40px;top:394.20px;" width="70" height="30" viewBox="0 0 70 30"><rect x="0" y="0" width="70" height="30" rx="2" fill="#3e45da"/><path d="M20 18q8-6 18-4t10 5M26 16l4-2 2 3M31 15l3 1" stroke="#dde0ff" stroke-width="0.7" fill="none"/></svg>
<div class="t" style="left:430.40px;top:395.15px;font-size:4.9px;line-height:5.9px;color:#ffffff;letter-spacing:0px;-webkit-text-stroke:0.18px #fff;">Computations Topper</div>
<svg style="position:absolute;left:500.60px;top:394.20px;" width="70" height="30" viewBox="0 0 70 30"><rect x="0" y="0" width="70" height="30" rx="2" fill="#3e45da"/><path d="M20 18q8-6 18-4t10 5M26 16l4-2 2 3M31 15l3 1" stroke="#dde0ff" stroke-width="0.7" fill="none"/></svg>
<div class="t" style="left:502.60px;top:395.15px;font-size:4.9px;line-height:5.9px;color:#ffffff;letter-spacing:0px;-webkit-text-stroke:0.18px #fff;">Computations Topper</div>
<div style="position:absolute;left:572.80px;top:394.20px;width:70.20px;height:25.80px;background:#383838;"></div>
<div style="position:absolute;left:645.00px;top:394.20px;width:70.00px;height:25.80px;background:#383838;"></div>
<div style="position:absolute;left:427.00px;top:411.90px;width:288.00px;height:20.50px;background:linear-gradient(90deg, rgba(66,66,92,0.92) 0%, rgba(68,68,92,0.92) 50%, rgba(58,58,62,0.95) 65%, rgba(58,58,58,0.96) 100%);"></div>
<div style="position:absolute;left:428.00px;top:411.90px;width:71.50px;height:12.30px;background:rgba(120,120,130,0.75);"></div>
<div style="position:absolute;left:427.00px;top:424.20px;width:288.00px;height:8.20px;background:rgba(40,40,50,0.35);"></div>
<svg style="position:absolute;left:460.90px;top:416.80px;" width="5" height="3" viewBox="0 0 5 3"><path d="M0.4 2.6L2.5 0.5 4.6 2.6" stroke="#d8d8e0" stroke-width="0.8" fill="none"/></svg>
<div class="t" style="left:438.4px;top:425.6px;width:50px;text-align:center;font-size:4.6px;line-height:5px;color:#b8b8c4;">Intro</div>
<svg style="position:absolute;left:533.10px;top:416.80px;" width="5" height="3" viewBox="0 0 5 3"><path d="M0.4 2.6L2.5 0.5 4.6 2.6" stroke="#d8d8e0" stroke-width="0.8" fill="none"/></svg>
<div class="t" style="left:510.6px;top:425.6px;width:50px;text-align:center;font-size:4.6px;line-height:5px;color:#b8b8c4;">Verse</div>
<div style="position:absolute;left:499.40px;top:412.00px;width:0.50px;height:20.40px;background:rgba(40,40,40,0.5);"></div>
<svg style="position:absolute;left:605.30px;top:416.80px;" width="5" height="3" viewBox="0 0 5 3"><path d="M0.4 2.6L2.5 0.5 4.6 2.6" stroke="#d8d8e0" stroke-width="0.8" fill="none"/></svg>
<div class="t" style="left:582.8px;top:425.6px;width:50px;text-align:center;font-size:4.6px;line-height:5px;color:#b8b8c4;">Hook</div>
<div style="position:absolute;left:571.60px;top:412.00px;width:0.50px;height:20.40px;background:rgba(40,40,40,0.5);"></div>
<svg style="position:absolute;left:677.50px;top:416.80px;" width="5" height="3" viewBox="0 0 5 3"><path d="M0.4 2.6L2.5 0.5 4.6 2.6" stroke="#d8d8e0" stroke-width="0.8" fill="none"/></svg>
<div class="t" style="left:655.0px;top:425.6px;width:50px;text-align:center;font-size:4.6px;line-height:5px;color:#b8b8c4;">Breakdown</div>
<div style="position:absolute;left:643.80px;top:412.00px;width:0.50px;height:20.40px;background:rgba(40,40,40,0.5);"></div>
<div style="position:absolute;left:427.00px;top:432.40px;width:300.50px;height:1.60px;background:#2a2a2a;"></div>
<svg style="position:absolute;left:717.20px;top:309.60px;" width="7.6" height="7.6" viewBox="0 0 7.6 7.6"><circle cx="3.8" cy="3.8" r="3.4" fill="#e0e0e0"/><path d="M3.8 3.8V0.4A3.4 3.4 0 0 0 0.4 3.3z" fill="#5a5a5a"/><circle cx="3.8" cy="3.8" r="3.4" fill="none" stroke="#bbb" stroke-width="0.4"/></svg>
<div style="position:absolute;left:716.00px;top:411.90px;width:10.00px;height:22.10px;background:#4a4a4a;"></div>
<div style="position:absolute;left:718.60px;top:420.60px;width:5.40px;height:5.40px;background:#f0f0f0;border-radius:0.5px;"></div>
<div style="position:absolute;left:727.50px;top:245.00px;width:285.50px;height:189.00px;background:#464646;"></div>
<div style="position:absolute;left:728.40px;top:246.00px;width:3.60px;height:188.00px;background:#373737;"></div>
<svg style="position:absolute;left:729.20px;top:247.80px;" width="2.4" height="3.4" viewBox="0 0 2.4 3.4"><path d="M0 0L2.4 1.7 0 3.4z" fill="#5e5e5e"/></svg>
<div style="position:absolute;left:732.00px;top:246.00px;width:281.00px;height:8.00px;background:#545454;"></div>
<div style="position:absolute;left:732.00px;top:254.00px;width:281.00px;height:8.30px;background:#3c3c3c;"></div>
<div style="position:absolute;left:741.70px;top:259.00px;width:0.60px;height:3.30px;background:#666;"></div>
<div style="position:absolute;left:751.70px;top:259.00px;width:0.60px;height:3.30px;background:#666;"></div>
<div style="position:absolute;left:761.70px;top:259.00px;width:0.60px;height:3.30px;background:#666;"></div>
<div style="position:absolute;left:771.70px;top:256.20px;width:0.60px;height:6.10px;background:#6f6f6f;"></div>
<div style="position:absolute;left:781.70px;top:259.00px;width:0.60px;height:3.30px;background:#666;"></div>
<div style="position:absolute;left:791.70px;top:259.00px;width:0.60px;height:3.30px;background:#666;"></div>
<div style="position:absolute;left:801.70px;top:259.00px;width:0.60px;height:3.30px;background:#666;"></div>
<div style="position:absolute;left:811.70px;top:256.20px;width:0.60px;height:6.10px;background:#6f6f6f;"></div>
<div style="position:absolute;left:821.70px;top:259.00px;width:0.60px;height:3.30px;background:#666;"></div>
<div style="position:absolute;left:831.70px;top:259.00px;width:0.60px;height:3.30px;background:#666;"></div>
<div style="position:absolute;left:841.70px;top:259.00px;width:0.60px;height:3.30px;background:#666;"></div>
<div style="position:absolute;left:851.70px;top:256.20px;width:0.60px;height:6.10px;background:#6f6f6f;"></div>
<div style="position:absolute;left:861.70px;top:259.00px;width:0.60px;height:3.30px;background:#666;"></div>
<div style="position:absolute;left:871.70px;top:259.00px;width:0.60px;height:3.30px;background:#666;"></div>
<div style="position:absolute;left:881.70px;top:259.00px;width:0.60px;height:3.30px;background:#666;"></div>
<div style="position:absolute;left:891.70px;top:246.00px;width:0.60px;height:16.30px;background:#8a8a8a;"></div>
<div style="position:absolute;left:901.70px;top:259.00px;width:0.60px;height:3.30px;background:#666;"></div>
<div style="position:absolute;left:911.70px;top:259.00px;width:0.60px;height:3.30px;background:#666;"></div>
<div style="position:absolute;left:921.70px;top:259.00px;width:0.60px;height:3.30px;background:#666;"></div>
<div style="position:absolute;left:931.70px;top:256.20px;width:0.60px;height:6.10px;background:#6f6f6f;"></div>
<div style="position:absolute;left:941.70px;top:259.00px;width:0.60px;height:3.30px;background:#666;"></div>
<div style="position:absolute;left:951.70px;top:259.00px;width:0.60px;height:3.30px;background:#666;"></div>
<div style="position:absolute;left:961.70px;top:259.00px;width:0.60px;height:3.30px;background:#666;"></div>
<div style="position:absolute;left:971.70px;top:256.20px;width:0.60px;height:6.10px;background:#6f6f6f;"></div>
<div style="position:absolute;left:981.70px;top:259.00px;width:0.60px;height:3.30px;background:#666;"></div>
<div style="position:absolute;left:991.70px;top:259.00px;width:0.60px;height:3.30px;background:#666;"></div>
<div style="position:absolute;left:1001.70px;top:259.00px;width:0.60px;height:3.30px;background:#666;"></div>
<div style="position:absolute;left:1011.70px;top:256.20px;width:0.60px;height:6.10px;background:#6f6f6f;"></div>
<div class="t" style="left:733.60px;top:246.19px;font-size:5.8px;line-height:6.8px;color:#f2f2f2;-webkit-text-stroke:0.2px #f2f2f2;">1</div>
<div class="t" style="left:811.20px;top:246.19px;font-size:5.8px;line-height:6.8px;color:#f2f2f2;-webkit-text-stroke:0.2px #f2f2f2;letter-spacing:-0.2px;">1 3</div>
<div class="t" style="left:893.40px;top:246.19px;font-size:5.8px;line-height:6.8px;color:#f2f2f2;-webkit-text-stroke:0.2px #f2f2f2;">2</div>
<div class="t" style="left:971.20px;top:246.19px;font-size:5.8px;line-height:6.8px;color:#f2f2f2;-webkit-text-stroke:0.2px #f2f2f2;letter-spacing:-0.2px;">2 3</div>
<div style="position:absolute;left:732.00px;top:262.30px;width:281.00px;height:13.90px;background:#d00fb0;"></div>
<div class="t" style="left:734.00px;top:266.33px;font-size:5.4px;line-height:6.4px;color:#ffffff;letter-spacing:-0.05px;-webkit-text-stroke:0.15px #fff;">Cm</div>
<div style="position:absolute;left:892.00px;top:265.00px;width:0.60px;height:9.00px;background:rgba(255,200,240,0.6);"></div>
<div class="t" style="left:894.20px;top:266.33px;font-size:5.4px;line-height:6.4px;color:#ffffff;-webkit-text-stroke:0.15px #fff;">C</div>
<div style="position:absolute;left:732.00px;top:276.20px;width:281.00px;height:0.80px;background:#2b2b2b;"></div>
<div style="position:absolute;left:732.00px;top:277.00px;width:281.00px;height:8.40px;background:#4e4e4e;"></div>
<div style="position:absolute;left:732.00px;top:285.40px;width:281.00px;height:62.20px;background:#474747;"></div>
<div class="t" style="left:735.00px;top:278.21px;font-size:5.3px;line-height:6.3px;color:#c04ae0;letter-spacing:-0.05px;-webkit-text-stroke:0.15px #c04ae0;">Trap Beat</div>
<svg style="position:absolute;left:732.00px;top:285.20px;" width="290" height="62" viewBox="0 0 290 62"><rect x="-0.10" y="0.50" width="9" height="7.9" fill="#c9c9c9"/><rect x="9.90" y="0.50" width="9" height="7.9" fill="#6a6a6a"/><rect x="19.90" y="0.50" width="9" height="7.9" fill="#6a6a6a"/><rect x="29.90" y="0.50" width="9" height="7.9" fill="#6a6a6a"/><rect x="39.90" y="0.50" width="9" height="7.9" fill="#6a6a6a"/><rect x="49.90" y="0.50" width="9" height="7.9" fill="#6a6a6a"/><rect x="59.90" y="0.50" width="9" height="7.9" fill="#c9c9c9"/><rect x="69.90" y="0.50" width="9" height="7.9" fill="#6a6a6a"/><rect x="79.90" y="0.50" width="9" height="7.9" fill="#6a6a6a"/><rect x="89.90" y="0.50" width="9" height="7.9" fill="#6a6a6a"/><rect x="99.90" y="0.50" width="9" height="7.9" fill="#6a6a6a"/><rect x="109.90" y="0.50" width="9" height="7.9" fill="#6a6a6a"/><rect x="119.90" y="0.50" width="9" height="7.9" fill="#c9c9c9"/><rect x="129.90" y="0.50" width="9" height="7.9" fill="#6a6a6a"/><rect x="139.90" y="0.50" width="9" height="7.9" fill="#6a6a6a"/><rect x="149.90" y="0.50" width="9" height="7.9" fill="#6a6a6a"/><rect x="159.90" y="0.50" width="9" height="7.9" fill="#6a6a6a"/><rect x="169.90" y="0.50" width="9" height="7.9" fill="#6a6a6a"/><rect x="179.90" y="0.50" width="9" height="7.9" fill="#c9c9c9"/><rect x="189.90" y="0.50" width="9" height="7.9" fill="#6a6a6a"/><rect x="199.90" y="0.50" width="9" height="7.9" fill="#6a6a6a"/><rect x="209.90" y="0.50" width="9" height="7.9" fill="#6a6a6a"/><rect x="219.90" y="0.50" width="9" height="7.9" fill="#6a6a6a"/><rect x="229.90" y="0.50" width="9" height="7.9" fill="#6a6a6a"/><rect x="239.90" y="0.50" width="9" height="7.9" fill="#6a6a6a"/><rect x="249.90" y="0.50" width="9" height="7.9" fill="#6a6a6a"/><rect x="259.90" y="0.50" width="9" height="7.9" fill="#6a6a6a"/><rect x="269.90" y="0.50" width="9" height="7.9" fill="#6a6a6a"/><rect x="279.90" y="0.50" width="9" height="7.9" fill="#6a6a6a"/><rect x="-0.10" y="9.32" width="9" height="7.9" fill="#6a6a6a"/><rect x="9.90" y="9.32" width="9" height="7.9" fill="#6a6a6a"/><rect x="19.90" y="9.32" width="9" height="7.9" fill="#6a6a6a"/><rect x="29.90" y="9.32" width="9" height="7.9" fill="#c9c9c9"/><rect x="39.90" y="9.32" width="9" height="7.9" fill="#c9c9c9"/><rect x="49.90" y="9.32" width="9" height="7.9" fill="#c9c9c9"/><rect x="59.90" y="9.32" width="9" height="7.9" fill="#c9c9c9"/><rect x="69.90" y="9.32" width="9" height="7.9" fill="#6a6a6a"/><rect x="79.90" y="9.32" width="9" height="7.9" fill="#6a6a6a"/><rect x="89.90" y="9.32" width="9" height="7.9" fill="#6a6a6a"/><rect x="99.90" y="9.32" width="9" height="7.9" fill="#6a6a6a"/><rect x="109.90" y="9.32" width="9" height="7.9" fill="#6a6a6a"/><rect x="119.90" y="9.32" width="9" height="7.9" fill="#6a6a6a"/><rect x="129.90" y="9.32" width="9" height="7.9" fill="#c9c9c9"/><rect x="139.90" y="9.32" width="9" height="7.9" fill="#6a6a6a"/><rect x="149.90" y="9.32" width="9" height="7.9" fill="#c9c9c9"/><rect x="159.90" y="9.32" width="9" height="7.9" fill="#6a6a6a"/><rect x="169.90" y="9.32" width="9" height="7.9" fill="#6a6a6a"/><rect x="179.90" y="9.32" width="9" height="7.9" fill="#6a6a6a"/><rect x="189.90" y="9.32" width="9" height="7.9" fill="#c9c9c9"/><rect x="199.90" y="9.32" width="9" height="7.9" fill="#6a6a6a"/><rect x="209.90" y="9.32" width="9" height="7.9" fill="#6a6a6a"/><rect x="219.90" y="9.32" width="9" height="7.9" fill="#6a6a6a"/><rect x="229.90" y="9.32" width="9" height="7.9" fill="#6a6a6a"/><rect x="239.90" y="9.32" width="9" height="7.9" fill="#6a6a6a"/><rect x="249.90" y="9.32" width="9" height="7.9" fill="#6a6a6a"/><rect x="259.90" y="9.32" width="9" height="7.9" fill="#c9c9c9"/><rect x="259.90" y="9.32" width="9" height="7.9" fill="#888"/><rect x="260.60" y="9.32" width="0.8" height="7.9" fill="#e0e0e0"/><rect x="262.90" y="9.32" width="0.8" height="7.9" fill="#e0e0e0"/><rect x="264.00" y="9.32" width="0.8" height="7.9" fill="#e0e0e0"/><rect x="265.20" y="9.32" width="0.8" height="7.9" fill="#e0e0e0"/><rect x="266.40" y="9.32" width="0.8" height="7.9" fill="#e0e0e0"/><rect x="269.90" y="9.32" width="9" height="7.9" fill="#6a6a6a"/><rect x="279.90" y="9.32" width="9" height="7.9" fill="#6a6a6a"/><rect x="-0.10" y="18.14" width="9" height="7.9" fill="#6a6a6a"/><rect x="9.90" y="18.14" width="9" height="7.9" fill="#6a6a6a"/><rect x="19.90" y="18.14" width="9" height="7.9" fill="#6a6a6a"/><rect x="29.90" y="18.14" width="9" height="7.9" fill="#6a6a6a"/><rect x="39.90" y="18.14" width="9" height="7.9" fill="#c9c9c9"/><rect x="49.90" y="18.14" width="9" height="7.9" fill="#6a6a6a"/><rect x="59.90" y="18.14" width="9" height="7.9" fill="#6a6a6a"/><rect x="69.90" y="18.14" width="9" height="7.9" fill="#6a6a6a"/><rect x="79.90" y="18.14" width="9" height="7.9" fill="#6a6a6a"/><rect x="89.90" y="18.14" width="9" height="7.9" fill="#6a6a6a"/><rect x="99.90" y="18.14" width="9" height="7.9" fill="#6a6a6a"/><rect x="109.90" y="18.14" width="9" height="7.9" fill="#6a6a6a"/><rect x="119.90" y="18.14" width="9" height="7.9" fill="#c9c9c9"/><rect x="129.90" y="18.14" width="9" height="7.9" fill="#6a6a6a"/><rect x="139.90" y="18.14" width="9" height="7.9" fill="#6a6a6a"/><rect x="149.90" y="18.14" width="9" height="7.9" fill="#6a6a6a"/><rect x="159.90" y="18.14" width="9" height="7.9" fill="#6a6a6a"/><rect x="169.90" y="18.14" width="9" height="7.9" fill="#6a6a6a"/><rect x="179.90" y="18.14" width="9" height="7.9" fill="#6a6a6a"/><rect x="189.90" y="18.14" width="9" height="7.9" fill="#6a6a6a"/><rect x="199.90" y="18.14" width="9" height="7.9" fill="#c9c9c9"/><rect x="199.90" y="18.14" width="9" height="7.9" fill="#888"/><rect x="200.60" y="18.14" width="0.8" height="7.9" fill="#e0e0e0"/><rect x="202.90" y="18.14" width="0.8" height="7.9" fill="#e0e0e0"/><rect x="204.00" y="18.14" width="0.8" height="7.9" fill="#e0e0e0"/><rect x="205.20" y="18.14" width="0.8" height="7.9" fill="#e0e0e0"/><rect x="206.40" y="18.14" width="0.8" height="7.9" fill="#e0e0e0"/><rect x="209.90" y="18.14" width="9" height="7.9" fill="#6a6a6a"/><rect x="219.90" y="18.14" width="9" height="7.9" fill="#6a6a6a"/><rect x="229.90" y="18.14" width="9" height="7.9" fill="#6a6a6a"/><rect x="239.90" y="18.14" width="9" height="7.9" fill="#6a6a6a"/><rect x="249.90" y="18.14" width="9" height="7.9" fill="#6a6a6a"/><rect x="259.90" y="18.14" width="9" height="7.9" fill="#6a6a6a"/><rect x="269.90" y="18.14" width="9" height="7.9" fill="#6a6a6a"/><rect x="279.90" y="18.14" width="9" height="7.9" fill="#c9c9c9"/><rect x="279.90" y="18.14" width="9" height="7.9" fill="#888"/><rect x="280.60" y="18.14" width="0.8" height="7.9" fill="#e0e0e0"/><rect x="282.90" y="18.14" width="0.8" height="7.9" fill="#e0e0e0"/><rect x="284.00" y="18.14" width="0.8" height="7.9" fill="#e0e0e0"/><rect x="285.20" y="18.14" width="0.8" height="7.9" fill="#e0e0e0"/><rect x="286.40" y="18.14" width="0.8" height="7.9" fill="#e0e0e0"/><rect x="-0.10" y="26.96" width="9" height="7.9" fill="#6a6a6a"/><rect x="9.90" y="26.96" width="9" height="7.9" fill="#6a6a6a"/><rect x="19.90" y="26.96" width="9" height="7.9" fill="#c9c9c9"/><rect x="29.90" y="26.96" width="9" height="7.9" fill="#c9c9c9"/><rect x="39.90" y="26.96" width="9" height="7.9" fill="#6a6a6a"/><rect x="49.90" y="26.96" width="9" height="7.9" fill="#6a6a6a"/><rect x="59.90" y="26.96" width="9" height="7.9" fill="#6a6a6a"/><rect x="69.90" y="26.96" width="9" height="7.9" fill="#6a6a6a"/><rect x="79.90" y="26.96" width="9" height="7.9" fill="#6a6a6a"/><rect x="89.90" y="26.96" width="9" height="7.9" fill="#6a6a6a"/><rect x="99.90" y="26.96" width="9" height="7.9" fill="#c9c9c9"/><rect x="109.90" y="26.96" width="9" height="7.9" fill="#c9c9c9"/><rect x="119.90" y="26.96" width="9" height="7.9" fill="#6a6a6a"/><rect x="129.90" y="26.96" width="9" height="7.9" fill="#6a6a6a"/><rect x="139.90" y="26.96" width="9" height="7.9" fill="#6a6a6a"/><rect x="149.90" y="26.96" width="9" height="7.9" fill="#6a6a6a"/><rect x="159.90" y="26.96" width="9" height="7.9" fill="#6a6a6a"/><rect x="169.90" y="26.96" width="9" height="7.9" fill="#6a6a6a"/><rect x="179.90" y="26.96" width="9" height="7.9" fill="#6a6a6a"/><rect x="189.90" y="26.96" width="9" height="7.9" fill="#6a6a6a"/><rect x="199.90" y="26.96" width="9" height="7.9" fill="#6a6a6a"/><rect x="209.90" y="26.96" width="9" height="7.9" fill="#6a6a6a"/><rect x="219.90" y="26.96" width="9" height="7.9" fill="#6a6a6a"/><rect x="229.90" y="26.96" width="9" height="7.9" fill="#6a6a6a"/><rect x="239.90" y="26.96" width="9" height="7.9" fill="#6a6a6a"/><rect x="249.90" y="26.96" width="9" height="7.9" fill="#6a6a6a"/><rect x="259.90" y="26.96" width="9" height="7.9" fill="#6a6a6a"/><rect x="269.90" y="26.96" width="9" height="7.9" fill="#6a6a6a"/><rect x="279.90" y="26.96" width="9" height="7.9" fill="#6a6a6a"/><rect x="-0.10" y="35.78" width="9" height="7.9" fill="#6a6a6a"/><rect x="9.90" y="35.78" width="9" height="7.9" fill="#6a6a6a"/><rect x="19.90" y="35.78" width="9" height="7.9" fill="#6a6a6a"/><rect x="29.90" y="35.78" width="9" height="7.9" fill="#6a6a6a"/><rect x="39.90" y="35.78" width="9" height="7.9" fill="#6a6a6a"/><rect x="49.90" y="35.78" width="9" height="7.9" fill="#6a6a6a"/><rect x="59.90" y="35.78" width="9" height="7.9" fill="#6a6a6a"/><rect x="69.90" y="35.78" width="9" height="7.9" fill="#6a6a6a"/><rect x="79.90" y="35.78" width="9" height="7.9" fill="#c9c9c9"/><rect x="89.90" y="35.78" width="9" height="7.9" fill="#c9c9c9"/><rect x="99.90" y="35.78" width="9" height="7.9" fill="#c9c9c9"/><rect x="109.90" y="35.78" width="9" height="7.9" fill="#c9c9c9"/><rect x="119.90" y="35.78" width="9" height="7.9" fill="#6a6a6a"/><rect x="129.90" y="35.78" width="9" height="7.9" fill="#6a6a6a"/><rect x="139.90" y="35.78" width="9" height="7.9" fill="#6a6a6a"/><rect x="149.90" y="35.78" width="9" height="7.9" fill="#6a6a6a"/><rect x="159.90" y="35.78" width="9" height="7.9" fill="#6a6a6a"/><rect x="169.90" y="35.78" width="9" height="7.9" fill="#6a6a6a"/><rect x="179.90" y="35.78" width="9" height="7.9" fill="#6a6a6a"/><rect x="189.90" y="35.78" width="9" height="7.9" fill="#6a6a6a"/><rect x="199.90" y="35.78" width="9" height="7.9" fill="#6a6a6a"/><rect x="209.90" y="35.78" width="9" height="7.9" fill="#6a6a6a"/><rect x="219.90" y="35.78" width="9" height="7.9" fill="#6a6a6a"/><rect x="229.90" y="35.78" width="9" height="7.9" fill="#6a6a6a"/><rect x="239.90" y="35.78" width="9" height="7.9" fill="#6a6a6a"/><rect x="249.90" y="35.78" width="9" height="7.9" fill="#6a6a6a"/><rect x="259.90" y="35.78" width="9" height="7.9" fill="#6a6a6a"/><rect x="269.90" y="35.78" width="9" height="7.9" fill="#6a6a6a"/><rect x="279.90" y="35.78" width="9" height="7.9" fill="#6a6a6a"/><rect x="-0.10" y="44.60" width="9" height="7.9" fill="#c9c9c9"/><rect x="9.90" y="44.60" width="9" height="7.9" fill="#6a6a6a"/><rect x="19.90" y="44.60" width="9" height="7.9" fill="#c9c9c9"/><rect x="29.90" y="44.60" width="9" height="7.9" fill="#c9c9c9"/><rect x="39.90" y="44.60" width="9" height="7.9" fill="#c9c9c9"/><rect x="49.90" y="44.60" width="9" height="7.9" fill="#6a6a6a"/><rect x="59.90" y="44.60" width="9" height="7.9" fill="#c9c9c9"/><rect x="69.90" y="44.60" width="9" height="7.9" fill="#c9c9c9"/><rect x="79.90" y="44.60" width="9" height="7.9" fill="#c9c9c9"/><rect x="89.90" y="44.60" width="9" height="7.9" fill="#6a6a6a"/><rect x="99.90" y="44.60" width="9" height="7.9" fill="#c9c9c9"/><rect x="109.90" y="44.60" width="9" height="7.9" fill="#c9c9c9"/><rect x="119.90" y="44.60" width="9" height="7.9" fill="#c9c9c9"/><rect x="129.90" y="44.60" width="9" height="7.9" fill="#6a6a6a"/><rect x="139.90" y="44.60" width="9" height="7.9" fill="#c9c9c9"/><rect x="149.90" y="44.60" width="9" height="7.9" fill="#c9c9c9"/><rect x="159.90" y="44.60" width="9" height="7.9" fill="#c9c9c9"/><rect x="169.90" y="44.60" width="9" height="7.9" fill="#c9c9c9"/><rect x="179.90" y="44.60" width="9" height="7.9" fill="#c9c9c9"/><rect x="189.90" y="44.60" width="9" height="7.9" fill="#c9c9c9"/><rect x="199.90" y="44.60" width="9" height="7.9" fill="#c9c9c9"/><rect x="209.90" y="44.60" width="9" height="7.9" fill="#6a6a6a"/><rect x="219.90" y="44.60" width="9" height="7.9" fill="#c9c9c9"/><rect x="229.90" y="44.60" width="9" height="7.9" fill="#c9c9c9"/><rect x="239.90" y="44.60" width="9" height="7.9" fill="#c9c9c9"/><rect x="249.90" y="44.60" width="9" height="7.9" fill="#6a6a6a"/><rect x="259.90" y="44.60" width="9" height="7.9" fill="#c9c9c9"/><rect x="269.90" y="44.60" width="9" height="7.9" fill="#c9c9c9"/><rect x="279.90" y="44.60" width="9" height="7.9" fill="#c9c9c9"/><rect x="-0.10" y="53.42" width="9" height="7.9" fill="#6a6a6a"/><rect x="9.90" y="53.42" width="9" height="7.9" fill="#6a6a6a"/><rect x="19.90" y="53.42" width="9" height="7.9" fill="#6a6a6a"/><rect x="29.90" y="53.42" width="9" height="7.9" fill="#6a6a6a"/><rect x="39.90" y="53.42" width="9" height="7.9" fill="#6a6a6a"/><rect x="49.90" y="53.42" width="9" height="7.9" fill="#c9c9c9"/><rect x="59.90" y="53.42" width="9" height="7.9" fill="#6a6a6a"/><rect x="69.90" y="53.42" width="9" height="7.9" fill="#c9c9c9"/><rect x="79.90" y="53.42" width="9" height="7.9" fill="#6a6a6a"/><rect x="89.90" y="53.42" width="9" height="7.9" fill="#6a6a6a"/><rect x="99.90" y="53.42" width="9" height="7.9" fill="#6a6a6a"/><rect x="109.90" y="53.42" width="9" height="7.9" fill="#6a6a6a"/><rect x="119.90" y="53.42" width="9" height="7.9" fill="#6a6a6a"/><rect x="129.90" y="53.42" width="9" height="7.9" fill="#6a6a6a"/><rect x="139.90" y="53.42" width="9" height="7.9" fill="#6a6a6a"/><rect x="149.90" y="53.42" width="9" height="7.9" fill="#6a6a6a"/><rect x="159.90" y="53.42" width="9" height="7.9" fill="#6a6a6a"/><rect x="169.90" y="53.42" width="9" height="7.9" fill="#6a6a6a"/><rect x="179.90" y="53.42" width="9" height="7.9" fill="#6a6a6a"/><rect x="189.90" y="53.42" width="9" height="7.9" fill="#6a6a6a"/><rect x="199.90" y="53.42" width="9" height="7.9" fill="#6a6a6a"/><rect x="209.90" y="53.42" width="9" height="7.9" fill="#6a6a6a"/><rect x="219.90" y="53.42" width="9" height="7.9" fill="#6a6a6a"/><rect x="229.90" y="53.42" width="9" height="7.9" fill="#6a6a6a"/><rect x="239.90" y="53.42" width="9" height="7.9" fill="#6a6a6a"/><rect x="249.90" y="53.42" width="9" height="7.9" fill="#6a6a6a"/><rect x="259.90" y="53.42" width="9" height="7.9" fill="#6a6a6a"/><rect x="269.90" y="53.42" width="9" height="7.9" fill="#6a6a6a"/><rect x="279.90" y="53.42" width="9" height="7.9" fill="#6a6a6a"/><rect x="29.9" y="9.32" width="39" height="7.9" fill="#c9c9c9"/></svg>
<div style="position:absolute;left:732.00px;top:347.60px;width:281.00px;height:2.30px;background:#2a2a2a;"></div>
<div style="position:absolute;left:732.00px;top:349.90px;width:281.00px;height:42.30px;background:#7b36d9;"></div>
<div class="t" style="left:734.40px;top:351.07px;font-size:5.0px;line-height:6.0px;color:#ffffff;letter-spacing:0px;-webkit-text-stroke:0.2px #fff;">Bass Player &#8211; Pump Bass</div>
<div style="position:absolute;left:732.00px;top:373.10px;width:281.00px;height:0.50px;background:rgba(60,20,120,0.35);"></div>
<svg style="position:absolute;left:0;top:0" width="1260" height="680" viewBox="0 0 1260 680"><path d="M732.5 382.7H752.3V370H761.6" stroke="#e6d4fb" stroke-width="0.8" fill="none"/><path d="M762.7 376.4H771.5" stroke="#e6d4fb" stroke-width="0.8" fill="none"/><path d="M773 373H790.8L792.5 370.3H801.8" stroke="#e6d4fb" stroke-width="0.8" fill="none"/><path d="M802.8 382.7C806 381 806.5 377 807.5 374S809 370 812 370H831.5V373.3H842L843 370.3H852" stroke="#e6d4fb" stroke-width="0.8" fill="none"/><path d="M852.5 382.3C857 381 859 378 860.5 375S863 370 867 370H881.6" stroke="#e6d4fb" stroke-width="0.8" fill="none"/><path d="M881.9 382.7H892" stroke="#e6d4fb" stroke-width="0.8" fill="none"/><path d="M893 384C897 382.5 899 379 900.5 375.5S902.5 371 906 371H921" stroke="#e6d4fb" stroke-width="0.8" fill="none"/><path d="M922 378H931.7" stroke="#e6d4fb" stroke-width="0.8" fill="none"/><path d="M933 374H951.8L953 371.7H961" stroke="#e6d4fb" stroke-width="0.8" fill="none"/><path d="M962 384.5C966 383 967 379 968 376S969.5 371.7 973 371.7H991V374.3H1001.5L1002 371.7H1010" stroke="#e6d4fb" stroke-width="0.8" fill="none"/><path d="M731.60 380.90L734.20 382.70 731.60 384.50z" fill="#e6d4fb"/><path d="M761.70 374.60L764.30 376.40 761.70 378.20z" fill="#e6d4fb"/><path d="M772.00 371.20L774.60 373.00 772.00 374.80z" fill="#e6d4fb"/><path d="M792.40 368.50L795.00 370.30 792.40 372.10z" fill="#e6d4fb"/><path d="M801.80 380.90L804.40 382.70 801.80 384.50z" fill="#e6d4fb"/><path d="M831.50 371.50L834.10 373.30 831.50 375.10z" fill="#e6d4fb"/><path d="M842.00 368.50L844.60 370.30 842.00 372.10z" fill="#e6d4fb"/><path d="M851.50 380.50L854.10 382.30 851.50 384.10z" fill="#e6d4fb"/><path d="M880.90 380.90L883.50 382.70 880.90 384.50z" fill="#e6d4fb"/><path d="M892.00 382.20L894.60 384.00 892.00 385.80z" fill="#e6d4fb"/><path d="M921.00 376.20L923.60 378.00 921.00 379.80z" fill="#e6d4fb"/><path d="M932.00 372.20L934.60 374.00 932.00 375.80z" fill="#e6d4fb"/><path d="M952.00 369.90L954.60 371.70 952.00 373.50z" fill="#e6d4fb"/><path d="M961.00 382.70L963.60 384.50 961.00 386.30z" fill="#e6d4fb"/><path d="M991.00 372.50L993.60 374.30 991.00 376.10z" fill="#e6d4fb"/><path d="M1001.00 369.90L1003.60 371.70 1001.00 373.50z" fill="#e6d4fb"/><path d="M1011.00 383.20L1013.60 385.00 1011.00 386.80z" fill="#e6d4fb"/></svg>
<div style="position:absolute;left:732.00px;top:392.20px;width:281.00px;height:1.70px;background:#2a2a2a;"></div>
<div style="position:absolute;left:732.00px;top:393.90px;width:281.00px;height:39.70px;background:#3e6bd9;"></div>
<svg style="position:absolute;left:734.00px;top:395.80px;" width="4" height="5.4" viewBox="0 0 4 5.4"><path d="M2.6 0.5Q0.6 0.8 0.6 2.7T2.6 4.9M2.6 1.6v2.2" stroke="#e8eeff" stroke-width="0.7" fill="none"/></svg>
<div class="t" style="left:739.20px;top:395.07px;font-size:5.0px;line-height:6.0px;color:#ffffff;letter-spacing:0.05px;-webkit-text-stroke:0.2px #fff;">Computations Topper</div>
<div style="position:absolute;left:791.60px;top:400.30px;width:7.60px;height:0.50px;background:#e0e8ff;"></div>
<div class="t" style="left:791.60px;top:395.51px;font-size:4.6px;line-height:5.6px;color:#e0e8ff;letter-spacing:-0.2px;">OO</div>
<svg style="position:absolute;left:0;top:0" width="1260" height="680" viewBox="0 0 1260 680"><clipPath id="ac"><rect x="732" y="402.5" width="281" height="31.1"/></clipPath><g clip-path="url(#ac)"><path d="M732.0 408.25 L732.5 408.22 L733.0 408.31 L733.5 408.43 L734.0 408.16 L734.5 408.26 L735.0 408.28 L735.5 408.21 L736.0 408.49 L736.5 408.34 L737.0 408.22 L737.5 408.41 L738.0 408.21 L738.5 408.17 L739.0 408.01 L739.5 408.05 L740.0 408.08 L740.5 408.15 L741.0 408.20 L741.5 408.05 L742.0 408.10 L742.5 408.01 L743.0 407.82 L743.5 406.69 L744.0 406.35 L744.5 407.03 L745.0 407.37 L745.5 407.79 L746.0 407.90 L746.5 407.89 L747.0 407.63 L747.5 407.82 L748.0 407.70 L748.5 408.09 L749.0 408.07 L749.5 408.30 L750.0 408.13 L750.5 408.09 L751.0 408.20 L751.5 407.86 L752.0 399.90 L752.5 401.38 L753.0 403.01 L753.5 404.58 L754.0 405.20 L754.5 405.28 L755.0 406.09 L755.5 406.27 L756.0 406.74 L756.5 407.16 L757.0 407.23 L757.5 407.01 L758.0 407.37 L758.5 406.95 L759.0 407.38 L759.5 407.32 L760.0 407.60 L760.5 407.27 L761.0 407.31 L761.5 407.55 L762.0 407.79 L762.5 407.52 L763.0 407.43 L763.5 407.82 L764.0 402.66 L764.5 402.09 L765.0 403.32 L765.5 404.14 L766.0 405.12 L766.5 405.68 L767.0 405.92 L767.5 405.99 L768.0 406.81 L768.5 406.94 L769.0 406.76 L769.5 407.19 L770.0 406.99 L770.5 407.11 L771.0 407.27 L771.5 407.47 L772.0 399.26 L772.5 399.00 L773.0 400.28 L773.5 402.09 L774.0 403.86 L774.5 405.00 L775.0 405.46 L775.5 406.00 L776.0 406.06 L776.5 406.65 L777.0 406.64 L777.5 406.56 L778.0 406.92 L778.5 407.05 L779.0 406.99 L779.5 407.00 L780.0 407.11 L780.5 407.67 L781.0 407.81 L781.5 407.57 L782.0 407.74 L782.5 406.77 L783.0 406.94 L783.5 407.09 L784.0 407.60 L784.5 407.83 L785.0 407.88 L785.5 407.96 L786.0 407.78 L786.5 407.60 L787.0 407.97 L787.5 407.93 L788.0 407.78 L788.5 408.13 L789.0 407.94 L789.5 408.06 L790.0 408.07 L790.5 408.24 L791.0 408.08 L791.5 408.19 L792.0 401.43 L792.5 401.59 L793.0 403.22 L793.5 403.65 L794.0 404.99 L794.5 405.79 L795.0 405.80 L795.5 405.91 L796.0 406.39 L796.5 406.54 L797.0 406.40 L797.5 406.64 L798.0 407.06 L798.5 407.46 L799.0 407.59 L799.5 407.24 L800.0 407.65 L800.5 407.75 L801.0 407.54 L801.5 407.83 L802.0 407.87 L802.5 407.87 L803.0 407.95 L803.5 408.16 L804.0 407.39 L804.5 407.20 L805.0 407.20 L805.5 407.33 L806.0 407.42 L806.5 407.57 L807.0 407.35 L807.5 407.59 L808.0 407.45 L808.5 407.56 L809.0 407.58 L809.5 407.98 L810.0 407.89 L810.5 407.95 L811.0 408.18 L811.5 407.96 L812.0 408.09 L812.5 401.63 L813.0 401.20 L813.5 401.97 L814.0 403.15 L814.5 404.15 L815.0 405.45 L815.5 405.85 L816.0 406.62 L816.5 406.55 L817.0 406.88 L817.5 406.99 L818.0 406.92 L818.5 407.12 L819.0 407.49 L819.5 407.45 L820.0 407.53 L820.5 407.58 L821.0 407.55 L821.5 407.57 L822.0 407.77 L822.5 407.98 L823.0 407.79 L823.5 407.72 L824.0 401.25 L824.5 402.82 L825.0 403.37 L825.5 404.70 L826.0 405.21 L826.5 405.91 L827.0 406.37 L827.5 406.12 L828.0 406.38 L828.5 406.73 L829.0 406.98 L829.5 407.18 L830.0 407.27 L830.5 407.39 L831.0 407.37 L831.5 407.44 L832.0 407.77 L832.5 407.58 L833.0 406.09 L833.5 406.75 L834.0 407.13 L834.5 407.19 L835.0 407.33 L835.5 407.49 L836.0 407.78 L836.5 407.87 L837.0 407.91 L837.5 407.96 L838.0 407.70 L838.5 408.17 L839.0 407.93 L839.5 408.12 L840.0 407.88 L840.5 408.21 L841.0 408.00 L841.5 407.96 L842.0 408.01 L842.5 408.05 L843.0 408.01 L843.5 407.99 L844.0 408.28 L844.5 401.41 L845.0 401.81 L845.5 402.09 L846.0 403.52 L846.5 404.22 L847.0 405.78 L847.5 405.87 L848.0 405.88 L848.5 406.77 L849.0 406.98 L849.5 406.92 L850.0 407.01 L850.5 407.32 L851.0 407.19 L851.5 407.68 L852.0 407.38 L852.5 402.82 L853.0 403.80 L853.5 403.95 L854.0 404.51 L854.5 405.88 L855.0 406.29 L855.5 406.50 L856.0 407.12 L856.5 406.86 L857.0 407.21 L857.5 406.96 L858.0 407.42 L858.5 407.49 L859.0 407.53 L859.5 407.25 L860.0 407.77 L860.5 407.63 L861.0 407.89 L861.5 407.88 L862.0 407.96 L862.5 407.67 L863.0 402.01 L863.5 401.56 L864.0 403.78 L864.5 404.12 L865.0 404.87 L865.5 405.44 L866.0 406.19 L866.5 406.81 L867.0 407.20 L867.5 407.20 L868.0 406.89 L868.5 407.58 L869.0 407.43 L869.5 407.47 L870.0 407.37 L870.5 407.56 L871.0 407.76 L871.5 407.93 L872.0 399.99 L872.5 401.55 L873.0 403.06 L873.5 403.13 L874.0 404.24 L874.5 405.32 L875.0 405.96 L875.5 405.82 L876.0 406.29 L876.5 406.20 L877.0 406.61 L877.5 407.11 L878.0 407.14 L878.5 407.62 L879.0 407.55 L879.5 407.45 L880.0 407.92 L880.5 407.69 L881.0 407.79 L881.5 407.14 L882.0 407.01 L882.5 407.06 L883.0 407.57 L883.5 407.85 L884.0 407.59 L884.5 407.68 L885.0 407.86 L885.5 407.95 L886.0 407.88 L886.5 407.97 L887.0 408.10 L887.5 408.08 L888.0 407.71 L888.5 407.87 L889.0 407.88 L889.5 407.93 L890.0 407.94 L890.5 408.22 L891.0 408.15 L891.5 408.09 L892.0 408.23 L892.5 407.00 L893.0 407.16 L893.5 407.44 L894.0 407.46 L894.5 407.84 L895.0 407.82 L895.5 407.71 L896.0 407.92 L896.5 408.00 L897.0 408.05 L897.5 407.95 L898.0 408.19 L898.5 407.92 L899.0 407.82 L899.5 408.03 L900.0 407.81 L900.5 407.98 L901.0 408.23 L901.5 408.12 L902.0 408.26 L902.5 408.12 L903.0 408.10 L903.5 406.97 L904.0 406.48 L904.5 407.03 L905.0 407.10 L905.5 407.18 L906.0 407.30 L906.5 407.52 L907.0 407.55 L907.5 407.63 L908.0 407.80 L908.5 407.74 L909.0 407.77 L909.5 408.17 L910.0 408.02 L910.5 408.04 L911.0 408.07 L911.5 400.21 L912.0 399.82 L912.5 401.83 L913.0 403.05 L913.5 405.06 L914.0 404.79 L914.5 406.07 L915.0 406.17 L915.5 406.15 L916.0 406.55 L916.5 406.99 L917.0 407.12 L917.5 407.11 L918.0 407.45 L918.5 407.36 L919.0 407.69 L919.5 407.40 L920.0 407.59 L920.5 407.66 L921.0 408.01 L921.5 408.05 L922.0 407.78 L922.5 407.95 L923.0 407.87 L923.5 401.34 L924.0 402.49 L924.5 403.20 L925.0 404.42 L925.5 405.36 L926.0 405.52 L926.5 405.91 L927.0 406.01 L927.5 406.43 L928.0 406.80 L928.5 407.08 L929.0 407.04 L929.5 407.67 L930.0 407.42 L930.5 407.66 L931.0 407.47 L931.5 401.20 L932.0 399.97 L932.5 403.01 L933.0 403.18 L933.5 404.15 L934.0 405.58 L934.5 406.08 L935.0 406.70 L935.5 406.77 L936.0 406.72 L936.5 407.13 L937.0 406.97 L937.5 407.15 L938.0 407.36 L938.5 407.62 L939.0 407.22 L939.5 407.51 L940.0 407.67 L940.5 407.71 L941.0 407.84 L941.5 407.91 L942.0 406.71 L942.5 406.65 L943.0 407.01 L943.5 407.12 L944.0 407.64 L944.5 407.68 L945.0 407.80 L945.5 407.66 L946.0 407.92 L946.5 407.74 L947.0 407.97 L947.5 408.08 L948.0 407.97 L948.5 407.90 L949.0 408.20 L949.5 408.12 L950.0 408.26 L950.5 408.21 L951.0 408.21 L951.5 408.00 L952.0 400.10 L952.5 401.47 L953.0 402.40 L953.5 403.67 L954.0 404.77 L954.5 404.96 L955.0 405.56 L955.5 406.12 L956.0 406.31 L956.5 406.53 L957.0 406.84 L957.5 406.96 L958.0 407.29 L958.5 407.25 L959.0 407.15 L959.5 407.26 L960.0 407.27 L960.5 407.66 L961.0 407.45 L961.5 406.45 L962.0 406.44 L962.5 406.85 L963.0 407.07 L963.5 407.41 L964.0 407.63 L964.5 407.79 L965.0 407.63 L965.5 407.95 L966.0 407.76 L966.5 407.79 L967.0 407.82 L967.5 407.92 L968.0 407.85 L968.5 407.87 L969.0 408.07 L969.5 407.99 L970.0 408.08 L970.5 408.09 L971.0 408.11 L971.5 408.29 L972.0 401.23 L972.5 401.79 L973.0 403.51 L973.5 404.80 L974.0 405.45 L974.5 405.24 L975.0 406.30 L975.5 406.37 L976.0 406.25 L976.5 406.48 L977.0 406.54 L977.5 406.97 L978.0 406.91 L978.5 407.03 L979.0 407.45 L979.5 407.55 L980.0 407.60 L980.5 407.74 L981.0 407.60 L981.5 407.62 L982.0 407.67 L982.5 401.23 L983.0 399.97 L983.5 401.87 L984.0 403.47 L984.5 404.21 L985.0 405.03 L985.5 405.69 L986.0 406.00 L986.5 406.32 L987.0 406.88 L987.5 406.73 L988.0 407.15 L988.5 407.13 L989.0 407.37 L989.5 407.71 L990.0 407.86 L990.5 407.66 L991.0 407.59 L991.5 407.57 L992.0 406.70 L992.5 406.45 L993.0 407.19 L993.5 406.93 L994.0 406.98 L994.5 407.46 L995.0 407.59 L995.5 407.71 L996.0 407.92 L996.5 407.66 L997.0 408.03 L997.5 407.72 L998.0 408.09 L998.5 408.17 L999.0 408.12 L999.5 408.18 L1000.0 408.30 L1000.5 408.11 L1001.0 408.18 L1001.5 408.06 L1002.0 408.02 L1002.5 408.06 L1003.0 400.88 L1003.5 399.99 L1004.0 402.06 L1004.5 403.30 L1005.0 404.32 L1005.5 405.30 L1006.0 405.58 L1006.5 406.23 L1007.0 406.13 L1007.5 406.92 L1008.0 406.66 L1008.5 406.75 L1009.0 407.19 L1009.5 407.17 L1010.0 407.06 L1010.5 407.62 L1011.0 407.49 L1011.5 399.89 L1012.0 399.59 L1012.5 401.70 L1013.0 402.83 L1013.0 416.79 L1012.5 418.44 L1012.0 420.18 L1011.5 421.61 L1011.0 412.81 L1010.5 412.69 L1010.0 413.11 L1009.5 413.17 L1009.0 413.06 L1008.5 413.38 L1008.0 413.29 L1007.5 413.77 L1007.0 413.95 L1006.5 414.22 L1006.0 414.61 L1005.5 415.41 L1005.0 415.76 L1004.5 416.47 L1004.0 417.46 L1003.5 419.14 L1003.0 419.32 L1002.5 412.37 L1002.0 412.10 L1001.5 411.93 L1001.0 412.00 L1000.5 411.91 L1000.0 412.14 L999.5 412.28 L999.0 411.89 L998.5 411.98 L998.0 412.30 L997.5 412.30 L997.0 412.24 L996.5 412.37 L996.0 412.54 L995.5 412.69 L995.0 412.69 L994.5 412.79 L994.0 413.12 L993.5 413.13 L993.0 413.39 L992.5 413.39 L992.0 413.74 L991.5 412.59 L991.0 412.61 L990.5 412.59 L990.0 412.64 L989.5 412.60 L989.0 412.90 L988.5 413.14 L988.0 413.04 L987.5 413.54 L987.0 413.44 L986.5 413.65 L986.0 414.36 L985.5 414.66 L985.0 415.21 L984.5 416.43 L984.0 417.40 L983.5 418.30 L983.0 419.40 L982.5 419.78 L982.0 412.74 L981.5 412.59 L981.0 412.64 L980.5 412.79 L980.0 412.62 L979.5 412.52 L979.0 412.90 L978.5 413.04 L978.0 413.15 L977.5 413.46 L977.0 413.61 L976.5 413.81 L976.0 413.60 L975.5 413.71 L975.0 413.96 L974.5 414.66 L974.0 414.74 L973.5 416.07 L973.0 416.78 L972.5 418.31 L972.0 419.01 L971.5 411.97 L971.0 411.94 L970.5 412.03 L970.0 412.16 L969.5 412.05 L969.0 412.22 L968.5 412.33 L968.0 412.14 L967.5 412.31 L967.0 412.39 L966.5 412.35 L966.0 412.33 L965.5 412.45 L965.0 412.43 L964.5 412.57 L964.0 412.66 L963.5 413.18 L963.0 413.00 L962.5 413.62 L962.0 413.87 L961.5 413.85 L961.0 412.58 L960.5 412.79 L960.0 412.54 L959.5 412.77 L959.0 412.72 L958.5 412.86 L958.0 412.99 L957.5 413.21 L957.0 413.09 L956.5 413.57 L956.0 413.98 L955.5 414.18 L955.0 414.41 L954.5 414.86 L954.0 415.24 L953.5 416.35 L953.0 417.68 L952.5 418.19 L952.0 419.23 L951.5 412.10 L951.0 412.19 L950.5 412.27 L950.0 412.20 L949.5 411.96 L949.0 412.04 L948.5 412.35 L948.0 412.22 L947.5 412.24 L947.0 412.35 L946.5 412.49 L946.0 412.21 L945.5 412.50 L945.0 412.43 L944.5 412.74 L944.0 412.84 L943.5 412.67 L943.0 413.44 L942.5 413.40 L942.0 413.44 L941.5 412.48 L941.0 412.54 L940.5 412.75 L940.0 412.47 L939.5 412.81 L939.0 412.58 L938.5 412.66 L938.0 413.16 L937.5 412.90 L937.0 413.03 L936.5 413.26 L936.0 413.66 L935.5 413.41 L935.0 413.52 L934.5 414.19 L934.0 415.11 L933.5 415.76 L933.0 416.84 L932.5 417.10 L932.0 419.06 L931.5 420.16 L931.0 412.73 L930.5 412.76 L930.0 412.80 L929.5 412.53 L929.0 412.90 L928.5 413.07 L928.0 413.13 L927.5 413.63 L927.0 413.95 L926.5 414.53 L926.0 414.66 L925.5 415.37 L925.0 416.28 L924.5 417.21 L924.0 418.02 L923.5 417.88 L923.0 412.24 L922.5 412.21 L922.0 412.37 L921.5 412.31 L921.0 412.24 L920.5 412.42 L920.0 412.57 L919.5 412.77 L919.0 412.40 L918.5 412.56 L918.0 412.70 L917.5 412.71 L917.0 412.70 L916.5 413.12 L916.0 413.16 L915.5 413.92 L915.0 414.23 L914.5 414.60 L914.0 415.09 L913.5 415.67 L913.0 416.36 L912.5 418.16 L912.0 420.39 L911.5 420.40 L911.0 412.12 L910.5 412.20 L910.0 412.21 L909.5 412.07 L909.0 412.31 L908.5 412.58 L908.0 412.68 L907.5 412.47 L907.0 412.56 L906.5 412.46 L906.0 412.75 L905.5 413.16 L905.0 413.35 L904.5 413.37 L904.0 413.33 L903.5 413.65 L903.0 412.01 L902.5 412.09 L902.0 412.06 L901.5 411.88 L901.0 412.10 L900.5 412.27 L900.0 412.37 L899.5 412.43 L899.0 412.29 L898.5 412.00 L898.0 412.16 L897.5 412.26 L897.0 412.36 L896.5 412.33 L896.0 412.29 L895.5 412.38 L895.0 412.60 L894.5 412.62 L894.0 412.65 L893.5 412.84 L893.0 413.08 L892.5 412.81 L892.0 412.03 L891.5 412.17 L891.0 411.97 L890.5 412.04 L890.0 412.26 L889.5 412.08 L889.0 412.39 L888.5 412.14 L888.0 412.32 L887.5 412.10 L887.0 412.21 L886.5 412.37 L886.0 412.19 L885.5 412.45 L885.0 412.38 L884.5 412.40 L884.0 412.44 L883.5 412.75 L883.0 412.88 L882.5 413.21 L882.0 413.08 L881.5 413.41 L881.0 412.30 L880.5 412.29 L880.0 412.40 L879.5 412.64 L879.0 412.71 L878.5 412.73 L878.0 413.09 L877.5 413.12 L877.0 413.38 L876.5 413.54 L876.0 413.80 L875.5 414.02 L875.0 414.80 L874.5 415.09 L874.0 415.98 L873.5 416.12 L873.0 417.87 L872.5 419.56 L872.0 419.70 L871.5 412.27 L871.0 412.58 L870.5 412.42 L870.0 412.76 L869.5 412.75 L869.0 412.67 L868.5 412.80 L868.0 412.97 L867.5 413.32 L867.0 412.98 L866.5 413.70 L866.0 414.27 L865.5 414.56 L865.0 415.40 L864.5 415.43 L864.0 416.60 L863.5 418.63 L863.0 418.46 L862.5 412.43 L862.0 412.14 L861.5 412.48 L861.0 412.56 L860.5 412.63 L860.0 412.77 L859.5 412.66 L859.0 412.83 L858.5 412.78 L858.0 412.74 L857.5 413.06 L857.0 413.07 L856.5 412.91 L856.0 413.23 L855.5 413.68 L855.0 414.33 L854.5 414.87 L854.0 415.63 L853.5 416.23 L853.0 416.41 L852.5 418.33 L852.0 412.49 L851.5 412.60 L851.0 412.81 L850.5 413.12 L850.0 413.43 L849.5 413.14 L849.0 413.54 L848.5 413.48 L848.0 413.89 L847.5 414.22 L847.0 414.79 L846.5 415.76 L846.0 416.44 L845.5 417.73 L845.0 418.81 L844.5 418.55 L844.0 412.07 L843.5 412.23 L843.0 412.13 L842.5 412.38 L842.0 412.02 L841.5 412.28 L841.0 412.28 L840.5 412.01 L840.0 412.36 L839.5 412.27 L839.0 412.31 L838.5 412.27 L838.0 412.50 L837.5 412.26 L837.0 412.31 L836.5 412.38 L836.0 412.70 L835.5 412.70 L835.0 412.87 L834.5 413.16 L834.0 413.14 L833.5 413.40 L833.0 413.81 L832.5 412.52 L832.0 412.45 L831.5 412.70 L831.0 412.99 L830.5 412.99 L830.0 413.08 L829.5 412.91 L829.0 413.36 L828.5 413.15 L828.0 413.83 L827.5 414.04 L827.0 413.94 L826.5 414.30 L826.0 414.57 L825.5 415.31 L825.0 416.60 L824.5 417.41 L824.0 419.20 L823.5 412.21 L823.0 412.10 L822.5 412.29 L822.0 412.41 L821.5 412.46 L821.0 412.47 L820.5 412.49 L820.0 412.84 L819.5 412.90 L819.0 412.68 L818.5 413.14 L818.0 412.85 L817.5 412.87 L817.0 413.32 L816.5 413.43 L816.0 413.83 L815.5 413.97 L815.0 415.13 L814.5 415.56 L814.0 417.13 L813.5 418.09 L813.0 419.77 L812.5 418.84 L812.0 412.33 L811.5 412.25 L811.0 412.29 L810.5 412.27 L810.0 412.22 L809.5 412.29 L809.0 412.46 L808.5 412.75 L808.0 412.74 L807.5 412.76 L807.0 412.89 L806.5 412.96 L806.0 413.03 L805.5 412.84 L805.0 413.03 L804.5 412.97 L804.0 412.96 L803.5 412.16 L803.0 412.06 L802.5 412.34 L802.0 412.19 L801.5 412.65 L801.0 412.66 L800.5 412.57 L800.0 412.57 L799.5 412.87 L799.0 412.57 L798.5 413.04 L798.0 413.00 L797.5 413.52 L797.0 413.46 L796.5 413.73 L796.0 413.85 L795.5 413.73 L795.0 414.13 L794.5 414.21 L794.0 415.37 L793.5 416.01 L793.0 417.13 L792.5 418.70 L792.0 419.42 L791.5 412.13 L791.0 411.98 L790.5 412.22 L790.0 412.03 L789.5 412.05 L789.0 412.05 L788.5 412.33 L788.0 412.39 L787.5 412.22 L787.0 412.14 L786.5 412.67 L786.0 412.25 L785.5 412.36 L785.0 412.54 L784.5 412.43 L784.0 412.64 L783.5 413.04 L783.0 412.97 L782.5 413.48 L782.0 412.44 L781.5 412.67 L781.0 412.33 L780.5 412.66 L780.0 413.05 L779.5 412.91 L779.0 413.10 L778.5 413.19 L778.0 413.28 L777.5 413.41 L777.0 413.59 L776.5 413.57 L776.0 413.73 L775.5 414.33 L775.0 414.93 L774.5 415.87 L774.0 416.75 L773.5 418.15 L773.0 419.27 L772.5 421.37 L772.0 420.46 L771.5 412.87 L771.0 412.95 L770.5 413.27 L770.0 413.16 L769.5 412.96 L769.0 413.30 L768.5 413.58 L768.0 413.78 L767.5 413.91 L767.0 414.28 L766.5 414.83 L766.0 414.86 L765.5 415.96 L765.0 416.18 L764.5 417.69 L764.0 418.06 L763.5 412.39 L763.0 412.75 L762.5 412.49 L762.0 412.40 L761.5 412.53 L761.0 412.69 L760.5 412.92 L760.0 412.84 L759.5 412.98 L759.0 412.73 L758.5 413.18 L758.0 413.06 L757.5 413.01 L757.0 412.90 L756.5 412.99 L756.0 413.22 L755.5 414.02 L755.0 414.13 L754.5 414.55 L754.0 414.69 L753.5 415.77 L753.0 417.41 L752.5 418.82 L752.0 419.82 L751.5 412.31 L751.0 412.29 L750.5 412.15 L750.0 412.20 L749.5 412.04 L749.0 412.16 L748.5 412.13 L748.0 412.52 L747.5 412.43 L747.0 412.54 L746.5 412.45 L746.0 412.36 L745.5 412.71 L745.0 412.70 L744.5 413.31 L744.0 413.76 L743.5 413.86 L743.0 412.23 L742.5 412.16 L742.0 412.22 L741.5 412.08 L741.0 411.85 L740.5 412.16 L740.0 412.34 L739.5 412.26 L739.0 412.05 L738.5 411.99 L738.0 411.95 L737.5 411.84 L737.0 412.04 L736.5 411.99 L736.0 411.78 L735.5 411.81 L735.0 412.11 L734.5 412.04 L734.0 411.81 L733.5 411.78 L733.0 411.74 L732.5 411.92 L732.0 412.11z" fill="#c4d4fa"/><path d="M732.0 425.38 L732.5 425.37 L733.0 425.45 L733.5 425.55 L734.0 425.27 L734.5 425.35 L735.0 425.46 L735.5 425.35 L736.0 425.42 L736.5 425.33 L737.0 425.39 L737.5 425.58 L738.0 425.56 L738.5 425.45 L739.0 425.36 L739.5 425.31 L740.0 425.42 L740.5 425.37 L741.0 425.17 L741.5 425.48 L742.0 425.54 L742.5 425.25 L743.0 425.12 L743.5 423.85 L744.0 423.92 L744.5 423.82 L745.0 424.34 L745.5 424.15 L746.0 424.78 L746.5 424.52 L747.0 424.82 L747.5 424.78 L748.0 425.02 L748.5 425.17 L749.0 425.21 L749.5 425.30 L750.0 425.37 L750.5 425.40 L751.0 425.48 L751.5 425.24 L752.0 417.71 L752.5 418.03 L753.0 419.95 L753.5 420.75 L754.0 422.14 L754.5 422.35 L755.0 422.89 L755.5 423.49 L756.0 423.93 L756.5 423.82 L757.0 424.25 L757.5 424.29 L758.0 424.50 L758.5 424.32 L759.0 424.66 L759.5 424.65 L760.0 424.44 L760.5 424.69 L761.0 424.73 L761.5 425.02 L762.0 425.06 L762.5 425.08 L763.0 425.40 L763.5 425.19 L764.0 420.09 L764.5 420.22 L765.0 421.45 L765.5 422.61 L766.0 422.66 L766.5 423.67 L767.0 423.48 L767.5 423.92 L768.0 424.47 L768.5 424.69 L769.0 424.91 L769.5 424.52 L770.0 424.74 L770.5 424.74 L771.0 424.92 L771.5 425.13 L772.0 418.16 L772.5 417.30 L773.0 419.48 L773.5 421.11 L774.0 421.71 L774.5 422.08 L775.0 423.02 L775.5 423.74 L776.0 423.86 L776.5 424.20 L777.0 424.31 L777.5 424.63 L778.0 424.68 L778.5 424.66 L779.0 424.74 L779.5 424.49 L780.0 424.81 L780.5 424.38 L781.0 424.63 L781.5 424.92 L782.0 425.00 L782.5 423.45 L783.0 423.62 L783.5 424.16 L784.0 424.21 L784.5 424.29 L785.0 424.70 L785.5 424.76 L786.0 424.90 L786.5 424.73 L787.0 424.85 L787.5 425.17 L788.0 425.19 L788.5 425.24 L789.0 425.21 L789.5 425.24 L790.0 425.24 L790.5 425.41 L791.0 425.34 L791.5 425.46 L792.0 417.98 L792.5 417.32 L793.0 419.73 L793.5 420.23 L794.0 421.34 L794.5 422.54 L795.0 422.96 L795.5 423.11 L796.0 423.20 L796.5 423.47 L797.0 423.74 L797.5 424.13 L798.0 424.20 L798.5 424.24 L799.0 424.45 L799.5 424.67 L800.0 424.62 L800.5 424.78 L801.0 424.79 L801.5 424.95 L802.0 425.15 L802.5 425.16 L803.0 424.94 L803.5 425.06 L804.0 423.94 L804.5 423.81 L805.0 423.97 L805.5 424.23 L806.0 424.54 L806.5 424.50 L807.0 424.95 L807.5 424.89 L808.0 424.70 L808.5 424.93 L809.0 425.07 L809.5 425.27 L810.0 425.13 L810.5 425.00 L811.0 424.86 L811.5 425.21 L812.0 425.26 L812.5 417.71 L813.0 417.20 L813.5 418.95 L814.0 420.97 L814.5 421.20 L815.0 422.29 L815.5 422.89 L816.0 423.13 L816.5 423.91 L817.0 424.34 L817.5 424.12 L818.0 424.51 L818.5 424.43 L819.0 424.67 L819.5 424.58 L820.0 424.87 L820.5 424.86 L821.0 424.91 L821.5 425.17 L822.0 424.98 L822.5 424.94 L823.0 424.79 L823.5 424.97 L824.0 419.33 L824.5 419.60 L825.0 421.47 L825.5 422.00 L826.0 422.71 L826.5 423.55 L827.0 423.56 L827.5 424.04 L828.0 424.23 L828.5 424.47 L829.0 424.57 L829.5 424.64 L830.0 425.00 L830.5 424.80 L831.0 424.86 L831.5 425.06 L832.0 424.86 L832.5 425.16 L833.0 423.98 L833.5 424.09 L834.0 424.27 L834.5 424.47 L835.0 424.83 L835.5 424.77 L836.0 424.95 L836.5 425.19 L837.0 425.29 L837.5 425.26 L838.0 425.02 L838.5 425.36 L839.0 425.17 L839.5 425.21 L840.0 425.21 L840.5 425.39 L841.0 425.10 L841.5 425.46 L842.0 425.43 L842.5 425.52 L843.0 425.39 L843.5 425.48 L844.0 425.38 L844.5 417.75 L845.0 418.15 L845.5 420.77 L846.0 421.48 L846.5 422.19 L847.0 422.37 L847.5 423.46 L848.0 423.31 L848.5 423.56 L849.0 424.25 L849.5 424.23 L850.0 424.39 L850.5 424.39 L851.0 424.40 L851.5 424.78 L852.0 424.82 L852.5 420.25 L853.0 420.42 L853.5 421.26 L854.0 422.31 L854.5 422.91 L855.0 423.19 L855.5 423.65 L856.0 423.87 L856.5 424.47 L857.0 424.80 L857.5 424.68 L858.0 425.02 L858.5 425.13 L859.0 424.94 L859.5 425.16 L860.0 425.34 L860.5 425.30 L861.0 425.14 L861.5 425.06 L862.0 425.36 L862.5 425.27 L863.0 420.67 L863.5 419.70 L864.0 420.69 L864.5 422.29 L865.0 422.85 L865.5 423.05 L866.0 423.80 L866.5 423.80 L867.0 423.96 L867.5 424.40 L868.0 424.50 L868.5 424.47 L869.0 424.92 L869.5 425.05 L870.0 424.66 L870.5 424.83 L871.0 425.02 L871.5 424.81 L872.0 417.80 L872.5 418.28 L873.0 420.19 L873.5 420.19 L874.0 420.81 L874.5 422.21 L875.0 422.62 L875.5 422.79 L876.0 423.43 L876.5 424.03 L877.0 424.31 L877.5 424.26 L878.0 424.38 L878.5 424.79 L879.0 424.86 L879.5 425.00 L880.0 424.94 L880.5 425.00 L881.0 424.99 L881.5 424.37 L882.0 423.92 L882.5 424.28 L883.0 424.42 L883.5 424.62 L884.0 424.49 L884.5 424.83 L885.0 425.00 L885.5 425.06 L886.0 424.92 L886.5 424.98 L887.0 425.08 L887.5 424.98 L888.0 425.15 L888.5 424.85 L889.0 425.13 L889.5 425.06 L890.0 425.02 L890.5 425.20 L891.0 425.31 L891.5 425.19 L892.0 425.34 L892.5 424.19 L893.0 424.02 L893.5 424.40 L894.0 424.50 L894.5 424.74 L895.0 424.51 L895.5 424.87 L896.0 424.73 L896.5 425.13 L897.0 424.97 L897.5 425.19 L898.0 425.19 L898.5 425.28 L899.0 425.43 L899.5 425.63 L900.0 425.59 L900.5 425.51 L901.0 425.21 L901.5 425.25 L902.0 425.22 L902.5 425.37 L903.0 425.07 L903.5 423.75 L904.0 423.82 L904.5 424.17 L905.0 424.48 L905.5 424.62 L906.0 424.84 L906.5 424.87 L907.0 425.05 L907.5 425.36 L908.0 425.18 L908.5 425.20 L909.0 425.29 L909.5 424.98 L910.0 425.13 L910.5 425.26 L911.0 425.40 L911.5 418.20 L912.0 418.17 L912.5 418.86 L913.0 420.53 L913.5 421.98 L914.0 422.15 L914.5 422.77 L915.0 422.87 L915.5 423.44 L916.0 423.79 L916.5 424.31 L917.0 424.42 L917.5 424.53 L918.0 424.49 L918.5 424.76 L919.0 424.65 L919.5 424.92 L920.0 424.81 L920.5 424.91 L921.0 424.88 L921.5 424.97 L922.0 424.74 L922.5 424.64 L923.0 424.93 L923.5 419.91 L924.0 419.03 L924.5 420.55 L925.0 422.07 L925.5 422.63 L926.0 422.98 L926.5 423.99 L927.0 424.03 L927.5 424.09 L928.0 424.10 L928.5 424.25 L929.0 424.43 L929.5 424.49 L930.0 424.72 L930.5 424.50 L931.0 424.82 L931.5 418.31 L932.0 418.51 L932.5 419.82 L933.0 421.67 L933.5 422.07 L934.0 422.53 L934.5 422.68 L935.0 423.23 L935.5 423.39 L936.0 423.81 L936.5 424.02 L937.0 424.02 L937.5 424.07 L938.0 424.45 L938.5 424.71 L939.0 424.86 L939.5 424.62 L940.0 425.07 L940.5 425.11 L941.0 425.07 L941.5 425.00 L942.0 424.20 L942.5 424.17 L943.0 424.39 L943.5 424.58 L944.0 424.37 L944.5 424.58 L945.0 424.89 L945.5 425.12 L946.0 425.05 L946.5 425.28 L947.0 425.07 L947.5 424.91 L948.0 425.10 L948.5 424.97 L949.0 425.22 L949.5 425.25 L950.0 425.10 L950.5 425.18 L951.0 425.11 L951.5 425.28 L952.0 416.53 L952.5 417.11 L953.0 418.74 L953.5 419.88 L954.0 421.09 L954.5 422.06 L955.0 422.43 L955.5 422.97 L956.0 423.49 L956.5 423.57 L957.0 424.10 L957.5 423.98 L958.0 424.03 L958.5 424.30 L959.0 424.36 L959.5 424.68 L960.0 424.36 L960.5 424.81 L961.0 424.70 L961.5 424.12 L962.0 423.59 L962.5 423.86 L963.0 424.29 L963.5 424.65 L964.0 424.77 L964.5 424.89 L965.0 424.99 L965.5 425.25 L966.0 425.24 L966.5 425.39 L967.0 425.35 L967.5 425.36 L968.0 425.39 L968.5 425.30 L969.0 425.08 L969.5 425.04 L970.0 425.15 L970.5 425.10 L971.0 424.96 L971.5 425.22 L972.0 417.43 L972.5 418.44 L973.0 420.30 L973.5 420.97 L974.0 422.16 L974.5 422.51 L975.0 423.59 L975.5 424.07 L976.0 424.25 L976.5 424.11 L977.0 424.24 L977.5 424.03 L978.0 424.54 L978.5 424.51 L979.0 424.93 L979.5 424.75 L980.0 425.03 L980.5 424.66 L981.0 425.02 L981.5 424.98 L982.0 424.94 L982.5 418.77 L983.0 418.98 L983.5 419.98 L984.0 421.39 L984.5 421.96 L985.0 422.73 L985.5 422.95 L986.0 423.52 L986.5 423.97 L987.0 423.90 L987.5 424.18 L988.0 424.38 L988.5 424.47 L989.0 424.73 L989.5 424.37 L990.0 424.71 L990.5 424.78 L991.0 424.86 L991.5 424.92 L992.0 423.83 L992.5 423.80 L993.0 423.94 L993.5 424.57 L994.0 424.60 L994.5 424.77 L995.0 424.80 L995.5 424.99 L996.0 424.62 L996.5 425.00 L997.0 424.86 L997.5 424.94 L998.0 425.24 L998.5 425.06 L999.0 425.14 L999.5 425.10 L1000.0 425.09 L1000.5 425.22 L1001.0 425.26 L1001.5 425.37 L1002.0 425.32 L1002.5 425.31 L1003.0 418.61 L1003.5 418.61 L1004.0 420.00 L1004.5 421.01 L1005.0 421.61 L1005.5 423.09 L1006.0 423.41 L1006.5 423.90 L1007.0 424.05 L1007.5 424.39 L1008.0 424.71 L1008.5 424.45 L1009.0 424.55 L1009.5 424.52 L1010.0 424.75 L1010.5 424.87 L1011.0 424.77 L1011.5 417.84 L1012.0 417.80 L1012.5 419.76 L1013.0 421.20 L1013.0 433.47 L1012.5 435.31 L1012.0 435.85 L1011.5 437.36 L1011.0 429.50 L1010.5 429.78 L1010.0 429.90 L1009.5 429.88 L1009.0 430.19 L1008.5 429.73 L1008.0 430.21 L1007.5 430.11 L1007.0 430.47 L1006.5 430.51 L1006.0 431.21 L1005.5 432.11 L1005.0 432.64 L1004.5 432.97 L1004.0 434.00 L1003.5 435.66 L1003.0 436.82 L1002.5 429.15 L1002.0 429.36 L1001.5 429.39 L1001.0 429.54 L1000.5 429.31 L1000.0 429.31 L999.5 429.29 L999.0 429.16 L998.5 429.52 L998.0 429.37 L997.5 429.56 L997.0 429.44 L996.5 429.75 L996.0 429.82 L995.5 429.92 L995.0 429.57 L994.5 429.94 L994.0 430.15 L993.5 430.19 L993.0 430.75 L992.5 431.08 L992.0 430.55 L991.5 429.81 L991.0 430.05 L990.5 429.78 L990.0 430.15 L989.5 430.00 L989.0 429.87 L988.5 430.47 L988.0 430.18 L987.5 430.51 L987.0 430.52 L986.5 430.92 L986.0 430.73 L985.5 431.10 L985.0 432.23 L984.5 432.71 L984.0 433.72 L983.5 434.80 L983.0 435.98 L982.5 436.82 L982.0 429.58 L981.5 429.65 L981.0 429.52 L980.5 429.96 L980.0 429.67 L979.5 429.83 L979.0 429.64 L978.5 429.78 L978.0 430.15 L977.5 430.60 L977.0 430.44 L976.5 430.27 L976.0 430.70 L975.5 430.93 L975.0 431.50 L974.5 431.61 L974.0 432.33 L973.5 433.30 L973.0 434.66 L972.5 435.55 L972.0 436.52 L971.5 429.34 L971.0 429.59 L970.5 429.55 L970.0 429.36 L969.5 429.45 L969.0 429.27 L968.5 429.31 L968.0 429.30 L967.5 429.36 L967.0 429.13 L966.5 429.35 L966.0 429.45 L965.5 429.57 L965.0 429.44 L964.5 429.51 L964.0 429.67 L963.5 430.01 L963.0 430.16 L962.5 430.72 L962.0 430.88 L961.5 430.65 L961.0 429.79 L960.5 429.73 L960.0 429.95 L959.5 430.06 L959.0 430.26 L958.5 430.13 L958.0 430.30 L957.5 430.62 L957.0 430.46 L956.5 430.92 L956.0 431.49 L955.5 431.42 L955.0 431.92 L954.5 432.64 L954.0 433.17 L953.5 433.91 L953.0 435.43 L952.5 436.02 L952.0 437.91 L951.5 429.53 L951.0 429.47 L950.5 429.40 L950.0 429.62 L949.5 429.55 L949.0 429.29 L948.5 429.43 L948.0 429.48 L947.5 429.65 L947.0 429.53 L946.5 429.57 L946.0 429.61 L945.5 429.47 L945.0 429.67 L944.5 429.98 L944.0 429.98 L943.5 430.13 L943.0 430.52 L942.5 430.30 L942.0 430.60 L941.5 429.34 L941.0 429.41 L940.5 429.67 L940.0 429.74 L939.5 430.01 L939.0 429.98 L938.5 430.10 L938.0 430.40 L937.5 430.09 L937.0 430.45 L936.5 430.91 L936.0 431.00 L935.5 430.83 L935.0 431.29 L934.5 431.44 L934.0 432.11 L933.5 432.94 L933.0 433.63 L932.5 433.87 L932.0 435.93 L931.5 436.00 L931.0 429.79 L930.5 430.11 L930.0 430.09 L929.5 430.00 L929.0 430.45 L928.5 430.29 L928.0 430.35 L927.5 430.90 L927.0 430.49 L926.5 430.96 L926.0 431.22 L925.5 432.01 L925.0 432.63 L924.5 434.61 L924.0 435.05 L923.5 435.30 L923.0 429.82 L922.5 429.76 L922.0 429.68 L921.5 429.80 L921.0 429.62 L920.5 429.68 L920.0 429.63 L919.5 429.94 L919.0 429.85 L918.5 430.08 L918.0 429.95 L917.5 430.17 L917.0 430.26 L916.5 430.10 L916.0 430.62 L915.5 431.10 L915.0 431.25 L914.5 432.08 L914.0 432.28 L913.5 433.33 L913.0 434.33 L912.5 435.44 L912.0 436.10 L911.5 437.12 L911.0 429.12 L910.5 429.48 L910.0 429.62 L909.5 429.40 L909.0 429.34 L908.5 429.61 L908.0 429.36 L907.5 429.33 L907.0 429.45 L906.5 429.56 L906.0 429.67 L905.5 429.92 L905.0 430.43 L904.5 430.25 L904.0 430.63 L903.5 430.84 L903.0 429.45 L902.5 429.39 L902.0 429.38 L901.5 429.38 L901.0 429.08 L900.5 429.08 L900.0 429.08 L899.5 429.15 L899.0 429.34 L898.5 429.24 L898.0 429.40 L897.5 429.44 L897.0 429.43 L896.5 429.43 L896.0 429.77 L895.5 430.00 L895.0 429.97 L894.5 429.92 L894.0 430.27 L893.5 430.36 L893.0 430.64 L892.5 430.81 L892.0 429.39 L891.5 429.21 L891.0 429.26 L890.5 429.53 L890.0 429.44 L889.5 429.30 L889.0 429.30 L888.5 429.67 L888.0 429.53 L887.5 429.59 L887.0 429.72 L886.5 429.75 L886.0 429.58 L885.5 429.69 L885.0 429.82 L884.5 429.84 L884.0 429.84 L883.5 430.33 L883.0 430.52 L882.5 430.76 L882.0 430.77 L881.5 430.43 L881.0 429.41 L880.5 429.41 L880.0 429.69 L879.5 429.79 L879.0 430.07 L878.5 430.13 L878.0 430.14 L877.5 430.26 L877.0 430.59 L876.5 430.84 L876.0 431.50 L875.5 431.91 L875.0 432.18 L874.5 432.88 L874.0 433.48 L873.5 434.36 L873.0 434.58 L872.5 436.08 L872.0 437.04 L871.5 429.82 L871.0 429.62 L870.5 429.71 L870.0 429.80 L869.5 429.90 L869.0 429.57 L868.5 429.73 L868.0 429.86 L867.5 430.34 L867.0 430.64 L866.5 430.91 L866.0 430.84 L865.5 431.14 L865.0 431.89 L864.5 432.88 L864.0 433.82 L863.5 433.98 L863.0 434.53 L862.5 429.35 L862.0 429.20 L861.5 429.43 L861.0 429.35 L860.5 429.44 L860.0 429.41 L859.5 429.55 L859.0 429.56 L858.5 429.43 L858.0 429.65 L857.5 429.81 L857.0 429.90 L856.5 430.17 L856.0 430.76 L855.5 430.91 L855.0 431.55 L854.5 431.52 L854.0 432.78 L853.5 433.82 L853.0 434.19 L852.5 435.07 L852.0 429.69 L851.5 429.74 L851.0 430.05 L850.5 429.96 L850.0 429.87 L849.5 430.58 L849.0 430.69 L848.5 430.92 L848.0 431.14 L847.5 431.73 L847.0 432.29 L846.5 432.94 L846.0 433.84 L845.5 433.67 L845.0 436.09 L844.5 436.14 L844.0 429.11 L843.5 429.18 L843.0 429.12 L842.5 429.19 L842.0 429.19 L841.5 429.18 L841.0 429.50 L840.5 429.19 L840.0 429.22 L839.5 429.41 L839.0 429.32 L838.5 429.16 L838.0 429.57 L837.5 429.52 L837.0 429.54 L836.5 429.50 L836.0 429.70 L835.5 429.59 L835.0 430.07 L834.5 430.17 L834.0 430.47 L833.5 430.36 L833.0 430.22 L832.5 429.58 L832.0 429.62 L831.5 429.77 L831.0 429.63 L830.5 429.49 L830.0 429.76 L829.5 429.95 L829.0 429.70 L828.5 429.83 L828.0 430.20 L827.5 430.54 L827.0 430.98 L826.5 431.09 L826.0 431.78 L825.5 432.84 L825.0 432.96 L824.5 434.35 L824.0 436.02 L823.5 429.75 L823.0 429.98 L822.5 429.78 L822.0 429.84 L821.5 429.77 L821.0 429.76 L820.5 429.61 L820.0 429.70 L819.5 429.88 L819.0 429.97 L818.5 430.35 L818.0 430.06 L817.5 430.37 L817.0 430.30 L816.5 431.03 L816.0 431.37 L815.5 431.63 L815.0 432.35 L814.5 433.47 L814.0 433.94 L813.5 435.07 L813.0 436.54 L812.5 436.53 L812.0 429.33 L811.5 429.47 L811.0 429.59 L810.5 429.64 L810.0 429.33 L809.5 429.56 L809.0 429.64 L808.5 429.81 L808.0 429.72 L807.5 429.72 L807.0 429.76 L806.5 429.99 L806.0 430.16 L805.5 430.44 L805.0 430.85 L804.5 431.01 L804.0 430.68 L803.5 429.62 L803.0 429.66 L802.5 429.76 L802.0 429.62 L801.5 429.55 L801.0 429.84 L800.5 429.75 L800.0 429.81 L799.5 429.96 L799.0 430.19 L798.5 430.18 L798.0 430.32 L797.5 430.84 L797.0 430.82 L796.5 431.14 L796.0 431.21 L795.5 431.45 L795.0 431.78 L794.5 432.68 L794.0 433.54 L793.5 433.94 L793.0 434.75 L792.5 436.14 L792.0 436.51 L791.5 429.31 L791.0 429.33 L790.5 429.19 L790.0 429.31 L789.5 429.28 L789.0 429.42 L788.5 429.46 L788.0 429.39 L787.5 429.48 L787.0 429.62 L786.5 429.78 L786.0 429.88 L785.5 429.84 L785.0 429.87 L784.5 430.18 L784.0 430.21 L783.5 430.73 L783.0 431.02 L782.5 431.24 L782.0 429.65 L781.5 429.83 L781.0 429.86 L780.5 429.94 L780.0 429.99 L779.5 430.07 L779.0 430.10 L778.5 429.89 L778.0 430.18 L777.5 430.18 L777.0 430.35 L776.5 430.50 L776.0 430.90 L775.5 431.05 L775.0 431.59 L774.5 431.96 L774.0 432.30 L773.5 433.47 L773.0 434.43 L772.5 436.01 L772.0 436.31 L771.5 429.84 L771.0 429.69 L770.5 429.89 L770.0 430.02 L769.5 429.84 L769.0 429.96 L768.5 429.88 L768.0 430.24 L767.5 430.43 L767.0 430.76 L766.5 431.52 L766.0 431.95 L765.5 432.63 L765.0 432.84 L764.5 433.94 L764.0 434.63 L763.5 429.33 L763.0 429.20 L762.5 429.50 L762.0 429.38 L761.5 429.77 L761.0 429.75 L760.5 429.83 L760.0 429.76 L759.5 430.23 L759.0 430.02 L758.5 430.28 L758.0 430.08 L757.5 430.44 L757.0 430.78 L756.5 430.35 L756.0 430.86 L755.5 431.47 L755.0 431.82 L754.5 431.93 L754.0 432.32 L753.5 434.00 L753.0 434.51 L752.5 436.44 L752.0 437.40 L751.5 429.33 L751.0 429.42 L750.5 429.44 L750.0 429.20 L749.5 429.42 L749.0 429.47 L748.5 429.53 L748.0 429.64 L747.5 429.48 L747.0 429.75 L746.5 430.05 L746.0 429.86 L745.5 430.12 L745.0 430.13 L744.5 430.64 L744.0 430.84 L743.5 430.60 L743.0 429.21 L742.5 429.22 L742.0 429.05 L741.5 429.17 L741.0 429.48 L740.5 429.40 L740.0 429.09 L739.5 429.25 L739.0 429.08 L738.5 429.29 L738.0 429.21 L737.5 429.33 L737.0 429.25 L736.5 429.16 L736.0 429.18 L735.5 429.24 L735.0 429.24 L734.5 429.24 L734.0 429.22 L733.5 429.07 L733.0 429.17 L732.5 429.29 L732.0 429.30z" fill="#c4d4fa"/></g></svg>
<div style="position:absolute;left:837.00px;top:262.30px;width:0.70px;height:171.70px;background:rgba(150,150,150,0.85);"></div>
<svg style="position:absolute;left:834.20px;top:254.40px;" width="6.4" height="8" viewBox="0 0 6.4 8"><path d="M0.5 0.8Q0.5 0 1.3 0H5.1Q5.9 0 5.9 0.8V4.6L3.2 7.8 0.5 4.6z" fill="#cfcfcf"/><path d="M2.2 1.5v3M3.2 1.5v3M4.2 1.5v3" stroke="#aaa" stroke-width="0.4"/></svg>
<div style="position:absolute;left:727.40px;top:245.10px;width:285.60px;height:0.80px;background:#5f97d2;"></div>
<div style="position:absolute;left:727.40px;top:245.10px;width:0.80px;height:189.20px;background:#5f97d2;"></div>
<div style="position:absolute;left:727.40px;top:433.50px;width:285.60px;height:0.80px;background:#5f97d2;"></div>
<div style="position:absolute;left:247.00px;top:434.00px;width:766.00px;height:1.30px;background:#1b1b1b;"></div>
<div style="position:absolute;left:247.00px;top:435.30px;width:766.00px;height:15.70px;background:#3b3b3b;"></div>
<div style="position:absolute;left:247.00px;top:451.00px;width:181.50px;height:226.60px;background:#383838;"></div>
<div style="position:absolute;left:428.50px;top:451.00px;width:584.50px;height:17.00px;background:#2f2f2f;"></div>
<div style="position:absolute;left:428.50px;top:468.00px;width:584.50px;height:209.60px;background:#202020;"></div>
<div style="position:absolute;left:252.30px;top:439.00px;width:77.40px;height:8.80px;background:#464646;border-radius:2.5px;box-shadow:inset 0 0 0 0.5px rgba(255,255,255,0.04);"></div>
<div style="position:absolute;left:277.70px;top:439.40px;width:0.50px;height:8.00px;background:#3a3a3a;"></div>
<div style="position:absolute;left:303.40px;top:439.40px;width:0.50px;height:8.00px;background:#3a3a3a;"></div>
<svg style="position:absolute;left:256.00px;top:440.60px" width="10.64" height="5.60" viewBox="0 0 19.00 10"><g fill="none" stroke="#e0e0e0" stroke-width="1.25"><path transform="translate(0.00 0)" d="M1 2h3.5v3h-3.5zM6.5 0.5v9M1.5 7v2h4"/><path transform="translate(9.50 0)" d="M1 1.5h7M4.5 1.5v2.5M0.5 5h8.5M2.5 7v2h5"/></g></svg>
<svg style="position:absolute;left:270.30px;top:442.60px;" width="4" height="2.4" viewBox="0 0 4 2.4"><path d="M0.3 0.3L2.0 2.0 3.7 0.3" stroke="#9a9a9a" stroke-width="0.8" fill="none"/></svg>
<svg style="position:absolute;left:281.70px;top:440.60px" width="10.64" height="5.60" viewBox="0 0 19.00 10"><g fill="none" stroke="#e0e0e0" stroke-width="1.25"><path transform="translate(0.00 0)" d="M1 1.5h3.5q0 4-3.5 6M6.5 0.5v9M6.5 4.5h2"/><path transform="translate(9.50 0)" d="M1 1h6v2.3h-6v2.3h6M0.5 7.5h8.5M4.5 7.5v2"/></g></svg>
<svg style="position:absolute;left:296.00px;top:442.60px;" width="4" height="2.4" viewBox="0 0 4 2.4"><path d="M0.3 0.3L2.0 2.0 3.7 0.3" stroke="#9a9a9a" stroke-width="0.8" fill="none"/></svg>
<svg style="position:absolute;left:307.50px;top:440.60px" width="10.64" height="5.60" viewBox="0 0 19.00 10"><g fill="none" stroke="#e0e0e0" stroke-width="1.25"><path transform="translate(0.00 0)" d="M1 1h6v2.3h-6v2.3h6M0.5 7.5h8.5M4.5 7.5v2"/><path transform="translate(9.50 0)" d="M1 2h3.5v3h-3.5zM6.5 0.5v9M1.5 7v2h4"/></g></svg>
<svg style="position:absolute;left:322.80px;top:442.60px;" width="4" height="2.4" viewBox="0 0 4 2.4"><path d="M0.3 0.3L2.0 2.0 3.7 0.3" stroke="#9a9a9a" stroke-width="0.8" fill="none"/></svg>
<div style="position:absolute;left:334.20px;top:439.00px;width:26.70px;height:8.80px;background:#464646;border-radius:2.5px;box-shadow:inset 0 0 0 0.5px rgba(255,255,255,0.04);"></div>
<div style="position:absolute;left:347.30px;top:439.40px;width:0.50px;height:8.00px;background:#3a3a3a;"></div>
<svg style="position:absolute;left:337.80px;top:440.20px;" width="6.4" height="6.4" viewBox="0 0 6.4 6.4"><circle cx="3.2" cy="3.2" r="2.8" fill="#d8d8d8"/><path d="M1.5 1.8h3.2M1.5 3.2h3.2M1.5 4.6h3.2" stroke="#777" stroke-width="0.5"/></svg>
<svg style="position:absolute;left:351.40px;top:440.40px;" width="6" height="6" viewBox="0 0 6 6"><rect x="0.3" y="0.3" width="2.4" height="2.4" fill="#ddd"/><rect x="3.3" y="0.3" width="2.4" height="2.4" fill="#999"/><rect x="0.3" y="3.3" width="5.4" height="2.4" fill="#ddd"/></svg>
<div style="position:absolute;left:366.20px;top:439.00px;width:26.80px;height:8.80px;background:#464646;border-radius:2.5px;box-shadow:inset 0 0 0 0.5px rgba(255,255,255,0.04);"></div>
<div style="position:absolute;left:379.40px;top:439.40px;width:0.50px;height:8.00px;background:#3a3a3a;"></div>
<svg style="position:absolute;left:369.50px;top:440.40px;" width="7.5" height="6" viewBox="0 0 7.5 6"><path d="M0.3 3h1.8M1.4 2l1 1-1 1" stroke="#ddd" stroke-width="0.6" fill="none"/><path d="M3 1.2q1.6-1 3.4 0 .8 1.8 0 3.6-1.8 1-3.4 0z" stroke="#ddd" stroke-width="0.7" fill="none"/></svg>
<svg style="position:absolute;left:383.00px;top:440.40px;" width="7.5" height="6" viewBox="0 0 7.5 6"><path d="M0.8 1.2q1.6-1 3.4 0 .8 1.8 0 3.6-1.8 1-3.4 0z" stroke="#ddd" stroke-width="0.7" fill="none"/><path d="M5.2 3h1.8M6.3 2l1 1-1 1" stroke="#ddd" stroke-width="0.6" fill="none"/></svg>
<div style="position:absolute;left:398.00px;top:439.00px;width:13.70px;height:8.80px;background:#464646;border-radius:2.5px;box-shadow:inset 0 0 0 0.5px rgba(255,255,255,0.04);"></div>
<svg style="position:absolute;left:402.30px;top:440.20px;" width="5" height="6.6" viewBox="0 0 5 6.6"><path d="M2.5 0.4v4.2" stroke="#ccc" stroke-width="0.8"/><circle cx="2.5" cy="5.2" r="1.1" fill="#ccc"/><path d="M1.5 1.4h2" stroke="#ccc" stroke-width="0.6"/></svg>
<div style="position:absolute;left:416.20px;top:439.00px;width:43.80px;height:8.80px;background:#3a74d2;border-radius:2.5px 0 0 2.5px;"></div>
<svg style="position:absolute;left:432.60px;top:440.70px" width="10.26" height="5.40" viewBox="0 0 19.00 10"><g fill="none" stroke="#f2f6ff" stroke-width="1.25"><path transform="translate(0.00 0)" d="M1 1.5h3M2.5 1.5q0 3-2 5M3 4.5l2 2M7 0.5v9"/><path transform="translate(9.50 0)" d="M1.5 1v4h3.5M6.8 0.5v6M6.8 3h2M1.5 7.5h6v2h-6z"/></g></svg>
<div style="position:absolute;left:460.00px;top:439.00px;width:52.00px;height:8.80px;background:#4a4a4a;border-radius:0 2.5px 2.5px 0;"></div>
<svg style="position:absolute;left:469.00px;top:440.70px" width="24.70" height="5.20" viewBox="0 0 47.50 10"><g fill="none" stroke="#e6e6e6" stroke-width="1.2"><path transform="translate(0.00 0)" d="M1.5 1v4h3.5M6.8 0.5v6M6.8 3h2M1.5 7.5h6v2h-6z"/><path transform="translate(9.50 0)" d="M2.5 1.5a2.2 2.2 0 1 0 0.01 0M6.8 0.5v9M6.8 4.5h2M1.5 8h4"/><path transform="translate(19.00 0)" d="M1 1.5h3.5q0 4-3.5 6M6.5 0.5v9M6.5 4.5h2"/><path transform="translate(28.50 0)" d="M1 1h6v2.3h-6v2.3h6M0.5 7.5h8.5M4.5 7.5v2"/><path transform="translate(38.00 0)" d="M1 2h3.5v3h-3.5zM6.5 0.5v9M1.5 7v2h4"/></g></svg>
<div style="position:absolute;left:503.20px;top:439.40px;width:0.50px;height:8.00px;background:#3c3c3c;"></div>
<svg style="position:absolute;left:506.40px;top:440.40px;" width="3" height="6" viewBox="0 0 3 6"><path d="M0.3 2L1.5 0.6 2.7 2M0.3 4L1.5 5.4 2.7 4" stroke="#9a9a9a" stroke-width="0.7" fill="none"/></svg>
<div style="position:absolute;left:879.70px;top:439.00px;width:13.70px;height:8.00px;background:#464646;border-radius:2.5px;box-shadow:inset 0 0 0 0.5px rgba(255,255,255,0.04);"></div>
<svg style="position:absolute;left:882.50px;top:440.20px;" width="8" height="5.6" viewBox="0 0 8 5.6"><path d="M0.3 1.2l1.6 1.6-1.6 1.6" stroke="#ddd" stroke-width="0.6" fill="none"/><circle cx="5" cy="2.8" r="2.4" fill="none" stroke="#ddd" stroke-width="0.8"/><path d="M4.3 1.7v2.2l1.6-1.1z" fill="#ddd"/></svg>
<svg style="position:absolute;left:902.20px;top:440.40px;" width="8" height="5.4" viewBox="0 0 8 5.4"><path d="M0.3 1.8h1.4L4 0.2v5L1.7 3.6H0.3z" fill="#d6d6d6"/><path d="M5.2 1.5q0.8 1.2 0 2.4" stroke="#bbb" stroke-width="0.6" fill="none"/></svg>
<div style="position:absolute;left:917.00px;top:439.00px;width:13.70px;height:8.00px;background:#4a4a4a;border-radius:2.5px;box-shadow:inset 0 0 0 0.5px rgba(255,255,255,0.04);"></div>
<svg style="position:absolute;left:920.90px;top:440.00px;" width="6" height="6.4" viewBox="0 0 6 6.4"><path d="M0.5 0.5h5M0.5 5.9h5M3 0.5v5.4" stroke="#dcdcdc" stroke-width="0.9"/></svg>
<div style="position:absolute;left:936.00px;top:439.00px;width:32.60px;height:8.00px;background:#343434;border-radius:2.5px;box-shadow:inset 0 0 0 0.5px rgba(255,255,255,0.04);"></div>
<svg style="position:absolute;left:939.20px;top:440.20px;" width="3.2" height="5.6" viewBox="0 0 3.2 5.6"><path d="M1.6 0.3v5M0.4 1.4L1.6 0.3 2.8 1.4M0.4 4.2L1.6 5.3 2.8 4.2" stroke="#999" stroke-width="0.6" fill="none"/></svg>
<div style="position:absolute;left:945.50px;top:442.50px;width:19.00px;height:0.90px;background:#222;"></div>
<div style="position:absolute;left:953.20px;top:440.20px;width:6.40px;height:6.40px;background:#9e9e9e;border-radius:50%;"></div>
<svg style="position:absolute;left:973.30px;top:441.40px;" width="6" height="3.6" viewBox="0 0 6 3.6"><path d="M0.4 1.8h5.2M1.5 0.4L0.4 1.8l1.1 1.4M4.5 0.4L5.6 1.8 4.5 3.2" stroke="#a8a8a8" stroke-width="0.8" fill="none"/></svg>
<div style="position:absolute;left:981.00px;top:439.00px;width:27.60px;height:8.00px;background:#3e3e3e;border-radius:2.5px;box-shadow:inset 0 0 0 0.5px rgba(255,255,255,0.04);"></div>
<div style="position:absolute;left:994.60px;top:439.40px;width:0.50px;height:7.20px;background:#333;"></div>
<div style="position:absolute;left:985.60px;top:440.60px;width:4.20px;height:5.00px;background:transparent;border-radius:1px;box-shadow:inset 0 0 0 0.7px #9a9a9a;"></div>
<div style="position:absolute;left:998.40px;top:440.80px;width:7.40px;height:4.60px;background:transparent;border-radius:1px;box-shadow:inset 0 0 0 0.7px #9a9a9a;"></div>
<div style="position:absolute;left:247.00px;top:467.80px;width:181.50px;height:0.70px;background:#2e2e2e;"></div>
<div style="position:absolute;left:252.30px;top:455.60px;width:17.30px;height:8.40px;background:#444;border-radius:2.5px;box-shadow:inset 0 0 0 0.5px rgba(255,255,255,0.04);"></div>
<svg style="position:absolute;left:254.80px;top:457.20px;" width="5.4" height="5.4" viewBox="0 0 5.4 5.4"><path d="M2.7 0.3v4.8M0.3 2.7h4.8" stroke="#e6e6e6" stroke-width="1"/></svg>
<svg style="position:absolute;left:262.60px;top:459.00px;" width="3.6" height="2.16" viewBox="0 0 3.6 2.16"><path d="M0.3 0.3L1.8 1.7600000000000002 3.3000000000000003 0.3" stroke="#aaa" stroke-width="0.8" fill="none"/></svg>
<div style="position:absolute;left:312.60px;top:455.60px;width:24.40px;height:8.40px;background:#424242;border-radius:2.5px;box-shadow:inset 0 0 0 0.5px rgba(255,255,255,0.04);"></div>
<div class="t" style="left:315.60px;top:456.99px;font-size:5.8px;line-height:6.8px;color:#e0e0e0;letter-spacing:-0.2px;">/16</div>
<svg style="position:absolute;left:333.00px;top:457.00px;" width="3" height="5.6000000000000005" viewBox="0 0 3 5.6000000000000005"><path d="M0.3 2.35L1.5 0.3 2.7 2.35M0.3 3.25L1.5 5.30 2.7 3.25" stroke="#8a8a8a" stroke-width="0.6" fill="none"/></svg>
<div style="position:absolute;left:340.20px;top:455.60px;width:18.10px;height:8.40px;background:#424242;border-radius:2.5px;box-shadow:inset 0 0 0 0.5px rgba(255,255,255,0.04);"></div>
<svg style="position:absolute;left:343.40px;top:457.80px;" width="6" height="4" viewBox="0 0 6 4"><path d="M0.3 2h5M3.4 0.3L5.3 2 3.4 3.7" stroke="#e0e0e0" stroke-width="0.8" fill="none"/></svg>
<svg style="position:absolute;left:354.20px;top:457.00px;" width="3" height="5.6000000000000005" viewBox="0 0 3 5.6000000000000005"><path d="M0.3 2.35L1.5 0.3 2.7 2.35M0.3 3.25L1.5 5.30 2.7 3.25" stroke="#8a8a8a" stroke-width="0.6" fill="none"/></svg>
<div style="position:absolute;left:361.30px;top:455.60px;width:17.70px;height:8.40px;background:#424242;border-radius:2.5px;box-shadow:inset 0 0 0 0.5px rgba(255,255,255,0.04);"></div>
<svg style="position:absolute;left:363.40px;top:457.60px;" width="6" height="4.4" viewBox="0 0 6 4.4"><circle cx="0.9" cy="2.2" r="0.8" fill="#e0e0e0"/><path d="M2.6 0.5h2.2v3.4H2.6z" stroke="#e0e0e0" stroke-width="0.6" fill="none"/></svg>
<svg style="position:absolute;left:371.40px;top:457.60px;" width="6" height="4.4" viewBox="0 0 6 4.4"><path d="M0.6 0.5h2.2v3.4H0.6z" stroke="#e0e0e0" stroke-width="0.6" fill="none"/><circle cx="4.6" cy="2.2" r="0.8" fill="#e0e0e0"/></svg>
<div style="position:absolute;left:382.30px;top:455.60px;width:17.30px;height:8.40px;background:#424242;border-radius:2.5px;box-shadow:inset 0 0 0 0.5px rgba(255,255,255,0.04);"></div>
<svg style="position:absolute;left:384.40px;top:458.60px;" width="5" height="3.0" viewBox="0 0 5 3.0"><path d="M0.3 0.3L2.5 2.6 4.7 0.3" stroke="#dcdcdc" stroke-width="0.8" fill="none"/></svg>
<svg style="position:absolute;left:393.40px;top:458.20px;" width="5" height="3" viewBox="0 0 5 3"><path d="M0.3 2.6L2.5 0.4 4.7 2.6" stroke="#dcdcdc" stroke-width="0.8" fill="none"/></svg>
<div style="position:absolute;left:402.60px;top:455.30px;width:8.60px;height:9.00px;background:#4a4a4a;border-radius:2.5px;box-shadow:inset 0 0 0 0.5px rgba(255,255,255,0.04);"></div>
<svg style="position:absolute;left:404.20px;top:457.30px;" width="5.4" height="5" viewBox="0 0 5.4 5"><rect x="0.4" y="0.4" width="4.6" height="4.2" rx="0.6" fill="none" stroke="#e6e6e6" stroke-width="0.7"/><path d="M3.4 1.2L1.8 2.5 3.4 3.8" stroke="#e6e6e6" stroke-width="0.6" fill="none"/></svg>
<div style="position:absolute;left:414.40px;top:455.30px;width:8.60px;height:9.00px;background:#4a4a4a;border-radius:2.5px;box-shadow:inset 0 0 0 0.5px rgba(255,255,255,0.04);"></div>
<svg style="position:absolute;left:416.00px;top:457.30px;" width="5.4" height="5" viewBox="0 0 5.4 5"><rect x="0.4" y="0.4" width="4.6" height="4.2" rx="0.6" fill="none" stroke="#e6e6e6" stroke-width="0.7"/><rect x="1.8" y="1.7" width="1.8" height="1.6" fill="#e6e6e6"/></svg>
<div style="position:absolute;left:247.00px;top:489.05px;width:181.50px;height:0.50px;background:#303030;"></div>
<svg style="position:absolute;left:250.20px;top:478.10px;" width="3" height="4.4" viewBox="0 0 3 4.4"><path d="M0.4 0.4L2.4 2.2 0.4 4" stroke="#c8c8c8" stroke-width="0.7" fill="none"/></svg>
<svg style="position:absolute;left:256.20px;top:473.90px;" width="11" height="11.6" viewBox="0 0 11 11.6"><circle cx="5.5" cy="4.6" r="4.2" stroke="#7c7ee0" stroke-width="0.75" fill="none" stroke-dasharray="2.2 0.6"/><path d="M5.5 3.6v4.4M1.6 9.8l3.9-2 3.9 2" stroke="#7c7ee0" stroke-width="0.8" fill="none"/><circle cx="5.5" cy="7.8" r="1.3" fill="#5a98ff"/></svg>
<div class="t" style="left:272.60px;top:469.97px;font-size:5.7px;line-height:6.7px;color:#f4f4f4;letter-spacing:-0.1px;-webkit-text-stroke:0.2px #f4f4f4;">Kick 1</div>
<svg style="position:absolute;left:294.10px;top:470.60px;" width="3" height="5.6" viewBox="0 0 3 5.6"><path d="M0.3 1.8L1.5 0.5 2.7 1.8M0.3 3.8L1.5 5.1 2.7 3.8" stroke="#c8c8c8" stroke-width="0.6" fill="none"/></svg>
<div style="position:absolute;left:272.60px;top:479.70px;width:18.10px;height:6.80px;background:#444;border-radius:2px;"></div>
<div class="t" style="left:274.80px;top:480.23px;font-size:5.4px;line-height:6.4px;color:#e6e6e6;font-weight:bold;">M</div>
<div class="t" style="left:284.20px;top:480.23px;font-size:5.4px;line-height:6.4px;color:#e6e6e6;font-weight:bold;">S</div>
<svg style="position:absolute;left:413.20px;top:471.10px" width="8.74" height="4.60" viewBox="0 0 19.00 10"><g fill="none" stroke="#c8c8c8" stroke-width="1.1"><path transform="translate(0.00 0)" d="M1 1.5h7M4.5 1.5v2.5M0.5 5h8.5M2.5 7v2h5"/><path transform="translate(9.50 0)" d="M1 1.5h3M2.5 1.5q0 3-2 5M3 4.5l2 2M7 0.5v9"/></g></svg>
<div style="position:absolute;left:312.60px;top:479.80px;width:24.40px;height:7.10px;background:#424242;border-radius:2.5px;box-shadow:inset 0 0 0 0.5px rgba(255,255,255,0.04);"></div>
<div class="t" style="left:315.60px;top:479.89px;font-size:5.8px;line-height:6.8px;color:#e0e0e0;letter-spacing:-0.2px;">/16</div>
<svg style="position:absolute;left:333.00px;top:481.20px;" width="3" height="4.3" viewBox="0 0 3 4.3"><path d="M0.3 1.99L1.5 0.3 2.7 1.99M0.3 2.31L1.5 4.00 2.7 2.31" stroke="#8a8a8a" stroke-width="0.6" fill="none"/></svg>
<div style="position:absolute;left:340.20px;top:479.80px;width:18.10px;height:7.10px;background:#424242;border-radius:2.5px;box-shadow:inset 0 0 0 0.5px rgba(255,255,255,0.04);"></div>
<svg style="position:absolute;left:343.40px;top:481.35px;" width="6" height="4" viewBox="0 0 6 4"><path d="M0.3 2h5M3.4 0.3L5.3 2 3.4 3.7" stroke="#e0e0e0" stroke-width="0.8" fill="none"/></svg>
<svg style="position:absolute;left:354.20px;top:481.20px;" width="3" height="4.3" viewBox="0 0 3 4.3"><path d="M0.3 1.99L1.5 0.3 2.7 1.99M0.3 2.31L1.5 4.00 2.7 2.31" stroke="#8a8a8a" stroke-width="0.6" fill="none"/></svg>
<div style="position:absolute;left:361.30px;top:479.80px;width:17.70px;height:7.10px;background:#424242;border-radius:2.5px;box-shadow:inset 0 0 0 0.5px rgba(255,255,255,0.04);"></div>
<svg style="position:absolute;left:363.40px;top:481.15px;" width="6" height="4.4" viewBox="0 0 6 4.4"><circle cx="0.9" cy="2.2" r="0.8" fill="#e0e0e0"/><path d="M2.6 0.5h2.2v3.4H2.6z" stroke="#e0e0e0" stroke-width="0.6" fill="none"/></svg>
<svg style="position:absolute;left:371.40px;top:481.15px;" width="6" height="4.4" viewBox="0 0 6 4.4"><path d="M0.6 0.5h2.2v3.4H0.6z" stroke="#e0e0e0" stroke-width="0.6" fill="none"/><circle cx="4.6" cy="2.2" r="0.8" fill="#e0e0e0"/></svg>
<div style="position:absolute;left:382.30px;top:479.80px;width:17.30px;height:7.10px;background:#424242;border-radius:2.5px;box-shadow:inset 0 0 0 0.5px rgba(255,255,255,0.04);"></div>
<svg style="position:absolute;left:384.40px;top:482.15px;" width="5" height="3.0" viewBox="0 0 5 3.0"><path d="M0.3 0.3L2.5 2.6 4.7 0.3" stroke="#dcdcdc" stroke-width="0.8" fill="none"/></svg>
<svg style="position:absolute;left:393.40px;top:481.75px;" width="5" height="3" viewBox="0 0 5 3"><path d="M0.3 2.6L2.5 0.4 4.7 2.6" stroke="#dcdcdc" stroke-width="0.8" fill="none"/></svg>
<div style="position:absolute;left:402.60px;top:479.50px;width:8.60px;height:7.70px;background:#4a4a4a;border-radius:2.5px;box-shadow:inset 0 0 0 0.5px rgba(255,255,255,0.04);"></div>
<svg style="position:absolute;left:404.20px;top:480.85px;" width="5.4" height="5" viewBox="0 0 5.4 5"><rect x="0.4" y="0.4" width="4.6" height="4.2" rx="0.6" fill="none" stroke="#e6e6e6" stroke-width="0.7"/><path d="M3.4 1.2L1.8 2.5 3.4 3.8" stroke="#e6e6e6" stroke-width="0.6" fill="none"/></svg>
<div style="position:absolute;left:414.40px;top:479.50px;width:8.60px;height:7.70px;background:#4a4a4a;border-radius:2.5px;box-shadow:inset 0 0 0 0.5px rgba(255,255,255,0.04);"></div>
<svg style="position:absolute;left:416.00px;top:480.85px;" width="5.4" height="5" viewBox="0 0 5.4 5"><rect x="0.4" y="0.4" width="4.6" height="4.2" rx="0.6" fill="none" stroke="#e6e6e6" stroke-width="0.7"/><rect x="1.8" y="1.7" width="1.8" height="1.6" fill="#e6e6e6"/></svg>
<div style="position:absolute;left:247.00px;top:510.10px;width:181.50px;height:0.50px;background:#303030;"></div>
<svg style="position:absolute;left:250.20px;top:499.15px;" width="3" height="4.4" viewBox="0 0 3 4.4"><path d="M0.4 0.4L2.4 2.2 0.4 4" stroke="#c8c8c8" stroke-width="0.7" fill="none"/></svg>
<svg style="position:absolute;left:256.20px;top:494.95px;" width="11" height="11.6" viewBox="0 0 11 11.6"><circle cx="5.5" cy="4.6" r="4.2" stroke="#3ab0e0" stroke-width="0.75" fill="none" stroke-dasharray="2.2 0.6"/><path d="M5.5 3.6v4.4M1.6 9.8l3.9-2 3.9 2" stroke="#3ab0e0" stroke-width="0.8" fill="none"/><circle cx="5.5" cy="7.8" r="1.3" fill="#40c8ff"/></svg>
<div class="t" style="left:272.60px;top:491.02px;font-size:5.7px;line-height:6.7px;color:#f4f4f4;letter-spacing:-0.1px;-webkit-text-stroke:0.2px #f4f4f4;">Kick 2</div>
<svg style="position:absolute;left:294.10px;top:491.65px;" width="3" height="5.6" viewBox="0 0 3 5.6"><path d="M0.3 1.8L1.5 0.5 2.7 1.8M0.3 3.8L1.5 5.1 2.7 3.8" stroke="#c8c8c8" stroke-width="0.6" fill="none"/></svg>
<div style="position:absolute;left:272.60px;top:500.75px;width:18.10px;height:6.80px;background:#444;border-radius:2px;"></div>
<div class="t" style="left:274.80px;top:501.28px;font-size:5.4px;line-height:6.4px;color:#e6e6e6;font-weight:bold;">M</div>
<div class="t" style="left:284.20px;top:501.28px;font-size:5.4px;line-height:6.4px;color:#e6e6e6;font-weight:bold;">S</div>
<svg style="position:absolute;left:413.20px;top:492.15px" width="8.74" height="4.60" viewBox="0 0 19.00 10"><g fill="none" stroke="#c8c8c8" stroke-width="1.1"><path transform="translate(0.00 0)" d="M1 1h6v2.3h-6v2.3h6M0.5 7.5h8.5M4.5 7.5v2"/><path transform="translate(9.50 0)" d="M1 2h3.5v3h-3.5zM6.5 0.5v9M1.5 7v2h4"/></g></svg>
<div style="position:absolute;left:312.60px;top:500.85px;width:24.40px;height:7.10px;background:#424242;border-radius:2.5px;box-shadow:inset 0 0 0 0.5px rgba(255,255,255,0.04);"></div>
<div class="t" style="left:315.60px;top:500.94px;font-size:5.8px;line-height:6.8px;color:#e0e0e0;letter-spacing:-0.2px;">/16</div>
<svg style="position:absolute;left:333.00px;top:502.25px;" width="3" height="4.3" viewBox="0 0 3 4.3"><path d="M0.3 1.99L1.5 0.3 2.7 1.99M0.3 2.31L1.5 4.00 2.7 2.31" stroke="#8a8a8a" stroke-width="0.6" fill="none"/></svg>
<div style="position:absolute;left:340.20px;top:500.85px;width:18.10px;height:7.10px;background:#424242;border-radius:2.5px;box-shadow:inset 0 0 0 0.5px rgba(255,255,255,0.04);"></div>
<svg style="position:absolute;left:343.40px;top:502.40px;" width="6" height="4" viewBox="0 0 6 4"><path d="M0.3 2h5M3.4 0.3L5.3 2 3.4 3.7" stroke="#e0e0e0" stroke-width="0.8" fill="none"/></svg>
<svg style="position:absolute;left:354.20px;top:502.25px;" width="3" height="4.3" viewBox="0 0 3 4.3"><path d="M0.3 1.99L1.5 0.3 2.7 1.99M0.3 2.31L1.5 4.00 2.7 2.31" stroke="#8a8a8a" stroke-width="0.6" fill="none"/></svg>
<div style="position:absolute;left:361.30px;top:500.85px;width:17.70px;height:7.10px;background:#424242;border-radius:2.5px;box-shadow:inset 0 0 0 0.5px rgba(255,255,255,0.04);"></div>
<svg style="position:absolute;left:363.40px;top:502.20px;" width="6" height="4.4" viewBox="0 0 6 4.4"><circle cx="0.9" cy="2.2" r="0.8" fill="#e0e0e0"/><path d="M2.6 0.5h2.2v3.4H2.6z" stroke="#e0e0e0" stroke-width="0.6" fill="none"/></svg>
<svg style="position:absolute;left:371.40px;top:502.20px;" width="6" height="4.4" viewBox="0 0 6 4.4"><path d="M0.6 0.5h2.2v3.4H0.6z" stroke="#e0e0e0" stroke-width="0.6" fill="none"/><circle cx="4.6" cy="2.2" r="0.8" fill="#e0e0e0"/></svg>
<div style="position:absolute;left:382.30px;top:500.85px;width:17.30px;height:7.10px;background:#424242;border-radius:2.5px;box-shadow:inset 0 0 0 0.5px rgba(255,255,255,0.04);"></div>
<svg style="position:absolute;left:384.40px;top:503.20px;" width="5" height="3.0" viewBox="0 0 5 3.0"><path d="M0.3 0.3L2.5 2.6 4.7 0.3" stroke="#dcdcdc" stroke-width="0.8" fill="none"/></svg>
<svg style="position:absolute;left:393.40px;top:502.80px;" width="5" height="3" viewBox="0 0 5 3"><path d="M0.3 2.6L2.5 0.4 4.7 2.6" stroke="#dcdcdc" stroke-width="0.8" fill="none"/></svg>
<div style="position:absolute;left:402.60px;top:500.55px;width:8.60px;height:7.70px;background:#4a4a4a;border-radius:2.5px;box-shadow:inset 0 0 0 0.5px rgba(255,255,255,0.04);"></div>
<svg style="position:absolute;left:404.20px;top:501.90px;" width="5.4" height="5" viewBox="0 0 5.4 5"><rect x="0.4" y="0.4" width="4.6" height="4.2" rx="0.6" fill="none" stroke="#e6e6e6" stroke-width="0.7"/><path d="M3.4 1.2L1.8 2.5 3.4 3.8" stroke="#e6e6e6" stroke-width="0.6" fill="none"/></svg>
<div style="position:absolute;left:414.40px;top:500.55px;width:8.60px;height:7.70px;background:#4a4a4a;border-radius:2.5px;box-shadow:inset 0 0 0 0.5px rgba(255,255,255,0.04);"></div>
<svg style="position:absolute;left:416.00px;top:501.90px;" width="5.4" height="5" viewBox="0 0 5.4 5"><rect x="0.4" y="0.4" width="4.6" height="4.2" rx="0.6" fill="none" stroke="#e6e6e6" stroke-width="0.7"/><rect x="1.8" y="1.7" width="1.8" height="1.6" fill="#e6e6e6"/></svg>
<div style="position:absolute;left:247.00px;top:531.15px;width:181.50px;height:0.50px;background:#303030;"></div>
<svg style="position:absolute;left:250.20px;top:520.20px;" width="3" height="4.4" viewBox="0 0 3 4.4"><path d="M0.4 0.4L2.4 2.2 0.4 4" stroke="#c8c8c8" stroke-width="0.7" fill="none"/></svg>
<svg style="position:absolute;left:256.50px;top:516.20px;" width="11" height="10.4" viewBox="0 0 11 10.4"><ellipse cx="5.5" cy="2.2" rx="5" ry="1.9" fill="#b060f0"/><path d="M0.5 2.2v6.2q5 2.6 10 0V2.2" fill="#b060f0"/><path d="M0.8 4.4q4.7 2.2 9.4 0M0.8 8.2q4.7 2.2 9.4 0M3 5.5v3.5M5.5 6v3.6M8 5.5v3.5" stroke="#3a2a48" stroke-width="0.45" fill="none"/><ellipse cx="5.5" cy="2.2" rx="4" ry="1.2" fill="#c890f8"/></svg>
<div class="t" style="left:272.60px;top:512.07px;font-size:5.7px;line-height:6.7px;color:#f4f4f4;letter-spacing:-0.1px;-webkit-text-stroke:0.2px #f4f4f4;">Snare 1</div>
<svg style="position:absolute;left:297.15px;top:512.70px;" width="3" height="5.6" viewBox="0 0 3 5.6"><path d="M0.3 1.8L1.5 0.5 2.7 1.8M0.3 3.8L1.5 5.1 2.7 3.8" stroke="#c8c8c8" stroke-width="0.6" fill="none"/></svg>
<div style="position:absolute;left:272.60px;top:521.80px;width:18.10px;height:6.80px;background:#444;border-radius:2px;"></div>
<div class="t" style="left:274.80px;top:522.33px;font-size:5.4px;line-height:6.4px;color:#e6e6e6;font-weight:bold;">M</div>
<div class="t" style="left:284.20px;top:522.33px;font-size:5.4px;line-height:6.4px;color:#e6e6e6;font-weight:bold;">S</div>
<svg style="position:absolute;left:413.20px;top:513.20px" width="8.74" height="4.60" viewBox="0 0 19.00 10"><g fill="none" stroke="#c8c8c8" stroke-width="1.1"><path transform="translate(0.00 0)" d="M2.5 1.5a2.2 2.2 0 1 0 0.01 0M6.8 0.5v9M6.8 4.5h2M1.5 8h4"/><path transform="translate(9.50 0)" d="M1 1.5h3.5q0 4-3.5 6M6.5 0.5v9M6.5 4.5h2"/></g></svg>
<div style="position:absolute;left:312.60px;top:521.90px;width:24.40px;height:7.10px;background:#424242;border-radius:2.5px;box-shadow:inset 0 0 0 0.5px rgba(255,255,255,0.04);"></div>
<div class="t" style="left:315.60px;top:521.99px;font-size:5.8px;line-height:6.8px;color:#e0e0e0;letter-spacing:-0.2px;">/16</div>
<svg style="position:absolute;left:333.00px;top:523.30px;" width="3" height="4.3" viewBox="0 0 3 4.3"><path d="M0.3 1.99L1.5 0.3 2.7 1.99M0.3 2.31L1.5 4.00 2.7 2.31" stroke="#8a8a8a" stroke-width="0.6" fill="none"/></svg>
<div style="position:absolute;left:340.20px;top:521.90px;width:18.10px;height:7.10px;background:#424242;border-radius:2.5px;box-shadow:inset 0 0 0 0.5px rgba(255,255,255,0.04);"></div>
<svg style="position:absolute;left:343.40px;top:523.45px;" width="6" height="4" viewBox="0 0 6 4"><path d="M0.3 2h5M3.4 0.3L5.3 2 3.4 3.7" stroke="#e0e0e0" stroke-width="0.8" fill="none"/></svg>
<svg style="position:absolute;left:354.20px;top:523.30px;" width="3" height="4.3" viewBox="0 0 3 4.3"><path d="M0.3 1.99L1.5 0.3 2.7 1.99M0.3 2.31L1.5 4.00 2.7 2.31" stroke="#8a8a8a" stroke-width="0.6" fill="none"/></svg>
<div style="position:absolute;left:361.30px;top:521.90px;width:17.70px;height:7.10px;background:#424242;border-radius:2.5px;box-shadow:inset 0 0 0 0.5px rgba(255,255,255,0.04);"></div>
<svg style="position:absolute;left:363.40px;top:523.25px;" width="6" height="4.4" viewBox="0 0 6 4.4"><circle cx="0.9" cy="2.2" r="0.8" fill="#e0e0e0"/><path d="M2.6 0.5h2.2v3.4H2.6z" stroke="#e0e0e0" stroke-width="0.6" fill="none"/></svg>
<svg style="position:absolute;left:371.40px;top:523.25px;" width="6" height="4.4" viewBox="0 0 6 4.4"><path d="M0.6 0.5h2.2v3.4H0.6z" stroke="#e0e0e0" stroke-width="0.6" fill="none"/><circle cx="4.6" cy="2.2" r="0.8" fill="#e0e0e0"/></svg>
<div style="position:absolute;left:382.30px;top:521.90px;width:17.30px;height:7.10px;background:#424242;border-radius:2.5px;box-shadow:inset 0 0 0 0.5px rgba(255,255,255,0.04);"></div>
<svg style="position:absolute;left:384.40px;top:524.25px;" width="5" height="3.0" viewBox="0 0 5 3.0"><path d="M0.3 0.3L2.5 2.6 4.7 0.3" stroke="#dcdcdc" stroke-width="0.8" fill="none"/></svg>
<svg style="position:absolute;left:393.40px;top:523.85px;" width="5" height="3" viewBox="0 0 5 3"><path d="M0.3 2.6L2.5 0.4 4.7 2.6" stroke="#dcdcdc" stroke-width="0.8" fill="none"/></svg>
<div style="position:absolute;left:402.60px;top:521.60px;width:8.60px;height:7.70px;background:#4a4a4a;border-radius:2.5px;box-shadow:inset 0 0 0 0.5px rgba(255,255,255,0.04);"></div>
<svg style="position:absolute;left:404.20px;top:522.95px;" width="5.4" height="5" viewBox="0 0 5.4 5"><rect x="0.4" y="0.4" width="4.6" height="4.2" rx="0.6" fill="none" stroke="#e6e6e6" stroke-width="0.7"/><path d="M3.4 1.2L1.8 2.5 3.4 3.8" stroke="#e6e6e6" stroke-width="0.6" fill="none"/></svg>
<div style="position:absolute;left:414.40px;top:521.60px;width:8.60px;height:7.70px;background:#4a4a4a;border-radius:2.5px;box-shadow:inset 0 0 0 0.5px rgba(255,255,255,0.04);"></div>
<svg style="position:absolute;left:416.00px;top:522.95px;" width="5.4" height="5" viewBox="0 0 5.4 5"><rect x="0.4" y="0.4" width="4.6" height="4.2" rx="0.6" fill="none" stroke="#e6e6e6" stroke-width="0.7"/><rect x="1.8" y="1.7" width="1.8" height="1.6" fill="#e6e6e6"/></svg>
<div style="position:absolute;left:247.00px;top:552.20px;width:181.50px;height:0.50px;background:#303030;"></div>
<svg style="position:absolute;left:250.20px;top:541.25px;" width="3" height="4.4" viewBox="0 0 3 4.4"><path d="M0.4 0.4L2.4 2.2 0.4 4" stroke="#c8c8c8" stroke-width="0.7" fill="none"/></svg>
<svg style="position:absolute;left:256.50px;top:537.25px;" width="11" height="10.4" viewBox="0 0 11 10.4"><ellipse cx="5.5" cy="2.2" rx="5" ry="1.9" fill="#b060f0"/><path d="M0.5 2.2v6.2q5 2.6 10 0V2.2" fill="#b060f0"/><path d="M0.8 4.4q4.7 2.2 9.4 0M0.8 8.2q4.7 2.2 9.4 0M3 5.5v3.5M5.5 6v3.6M8 5.5v3.5" stroke="#3a2a48" stroke-width="0.45" fill="none"/><ellipse cx="5.5" cy="2.2" rx="4" ry="1.2" fill="#c890f8"/></svg>
<div class="t" style="left:272.60px;top:533.12px;font-size:5.7px;line-height:6.7px;color:#f4f4f4;letter-spacing:-0.1px;-webkit-text-stroke:0.2px #f4f4f4;">Rim</div>
<svg style="position:absolute;left:284.95px;top:533.75px;" width="3" height="5.6" viewBox="0 0 3 5.6"><path d="M0.3 1.8L1.5 0.5 2.7 1.8M0.3 3.8L1.5 5.1 2.7 3.8" stroke="#c8c8c8" stroke-width="0.6" fill="none"/></svg>
<div style="position:absolute;left:272.60px;top:542.85px;width:18.10px;height:6.80px;background:#444;border-radius:2px;"></div>
<div class="t" style="left:274.80px;top:543.38px;font-size:5.4px;line-height:6.4px;color:#e6e6e6;font-weight:bold;">M</div>
<div class="t" style="left:284.20px;top:543.38px;font-size:5.4px;line-height:6.4px;color:#e6e6e6;font-weight:bold;">S</div>
<svg style="position:absolute;left:413.20px;top:534.25px" width="8.74" height="4.60" viewBox="0 0 19.00 10"><g fill="none" stroke="#c8c8c8" stroke-width="1.1"><path transform="translate(0.00 0)" d="M1 1.5h3M2.5 1.5q0 3-2 5M3 4.5l2 2M7 0.5v9"/><path transform="translate(9.50 0)" d="M1.5 1v4h3.5M6.8 0.5v6M6.8 3h2M1.5 7.5h6v2h-6z"/></g></svg>
<div style="position:absolute;left:312.60px;top:542.95px;width:24.40px;height:7.10px;background:#424242;border-radius:2.5px;box-shadow:inset 0 0 0 0.5px rgba(255,255,255,0.04);"></div>
<div class="t" style="left:315.60px;top:543.04px;font-size:5.8px;line-height:6.8px;color:#e0e0e0;letter-spacing:-0.2px;">/16</div>
<svg style="position:absolute;left:333.00px;top:544.35px;" width="3" height="4.3" viewBox="0 0 3 4.3"><path d="M0.3 1.99L1.5 0.3 2.7 1.99M0.3 2.31L1.5 4.00 2.7 2.31" stroke="#8a8a8a" stroke-width="0.6" fill="none"/></svg>
<div style="position:absolute;left:340.20px;top:542.95px;width:18.10px;height:7.10px;background:#424242;border-radius:2.5px;box-shadow:inset 0 0 0 0.5px rgba(255,255,255,0.04);"></div>
<svg style="position:absolute;left:343.40px;top:544.50px;" width="6" height="4" viewBox="0 0 6 4"><path d="M0.3 2h5M3.4 0.3L5.3 2 3.4 3.7" stroke="#e0e0e0" stroke-width="0.8" fill="none"/></svg>
<svg style="position:absolute;left:354.20px;top:544.35px;" width="3" height="4.3" viewBox="0 0 3 4.3"><path d="M0.3 1.99L1.5 0.3 2.7 1.99M0.3 2.31L1.5 4.00 2.7 2.31" stroke="#8a8a8a" stroke-width="0.6" fill="none"/></svg>
<div style="position:absolute;left:361.30px;top:542.95px;width:17.70px;height:7.10px;background:#424242;border-radius:2.5px;box-shadow:inset 0 0 0 0.5px rgba(255,255,255,0.04);"></div>
<svg style="position:absolute;left:363.40px;top:544.30px;" width="6" height="4.4" viewBox="0 0 6 4.4"><circle cx="0.9" cy="2.2" r="0.8" fill="#e0e0e0"/><path d="M2.6 0.5h2.2v3.4H2.6z" stroke="#e0e0e0" stroke-width="0.6" fill="none"/></svg>
<svg style="position:absolute;left:371.40px;top:544.30px;" width="6" height="4.4" viewBox="0 0 6 4.4"><path d="M0.6 0.5h2.2v3.4H0.6z" stroke="#e0e0e0" stroke-width="0.6" fill="none"/><circle cx="4.6" cy="2.2" r="0.8" fill="#e0e0e0"/></svg>
<div style="position:absolute;left:382.30px;top:542.95px;width:17.30px;height:7.10px;background:#424242;border-radius:2.5px;box-shadow:inset 0 0 0 0.5px rgba(255,255,255,0.04);"></div>
<svg style="position:absolute;left:384.40px;top:545.30px;" width="5" height="3.0" viewBox="0 0 5 3.0"><path d="M0.3 0.3L2.5 2.6 4.7 0.3" stroke="#dcdcdc" stroke-width="0.8" fill="none"/></svg>
<svg style="position:absolute;left:393.40px;top:544.90px;" width="5" height="3" viewBox="0 0 5 3"><path d="M0.3 2.6L2.5 0.4 4.7 2.6" stroke="#dcdcdc" stroke-width="0.8" fill="none"/></svg>
<div style="position:absolute;left:402.60px;top:542.65px;width:8.60px;height:7.70px;background:#4a4a4a;border-radius:2.5px;box-shadow:inset 0 0 0 0.5px rgba(255,255,255,0.04);"></div>
<svg style="position:absolute;left:404.20px;top:544.00px;" width="5.4" height="5" viewBox="0 0 5.4 5"><rect x="0.4" y="0.4" width="4.6" height="4.2" rx="0.6" fill="none" stroke="#e6e6e6" stroke-width="0.7"/><path d="M3.4 1.2L1.8 2.5 3.4 3.8" stroke="#e6e6e6" stroke-width="0.6" fill="none"/></svg>
<div style="position:absolute;left:414.40px;top:542.65px;width:8.60px;height:7.70px;background:#4a4a4a;border-radius:2.5px;box-shadow:inset 0 0 0 0.5px rgba(255,255,255,0.04);"></div>
<svg style="position:absolute;left:416.00px;top:544.00px;" width="5.4" height="5" viewBox="0 0 5.4 5"><rect x="0.4" y="0.4" width="4.6" height="4.2" rx="0.6" fill="none" stroke="#e6e6e6" stroke-width="0.7"/><rect x="1.8" y="1.7" width="1.8" height="1.6" fill="#e6e6e6"/></svg>
<div style="position:absolute;left:247.00px;top:552.70px;width:181.50px;height:21.05px;background:#4a4a4a;"></div>
<div style="position:absolute;left:247.00px;top:573.25px;width:181.50px;height:0.50px;background:#303030;"></div>
<svg style="position:absolute;left:250.20px;top:562.30px;" width="3" height="4.4" viewBox="0 0 3 4.4"><path d="M0.4 0.4L2.4 2.2 0.4 4" stroke="#c8c8c8" stroke-width="0.7" fill="none"/></svg>
<svg style="position:absolute;left:256.50px;top:557.50px;" width="11" height="11.5" viewBox="0 0 11 11.5"><path d="M3 10.5Q0.5 8 1.2 5.5L3.5 2.5Q4.4 1.6 5 2.6L4.6 3.6 7 1.2Q7.8 0.6 8.4 1.4L6.5 3.8 9 2Q9.8 1.6 10.2 2.4L7.6 5 10 3.8Q10.6 3.8 10.5 4.6L7.8 7.4Q6.5 10.5 3 10.5z" fill="#b060f0"/></svg>
<div class="t" style="left:272.60px;top:554.17px;font-size:5.7px;line-height:6.7px;color:#f4f4f4;letter-spacing:-0.1px;-webkit-text-stroke:0.2px #f4f4f4;">Clap 1</div>
<svg style="position:absolute;left:294.10px;top:554.80px;" width="3" height="5.6" viewBox="0 0 3 5.6"><path d="M0.3 1.8L1.5 0.5 2.7 1.8M0.3 3.8L1.5 5.1 2.7 3.8" stroke="#c8c8c8" stroke-width="0.6" fill="none"/></svg>
<div style="position:absolute;left:272.60px;top:563.90px;width:18.10px;height:6.80px;background:#555;border-radius:2px;"></div>
<div class="t" style="left:274.80px;top:564.43px;font-size:5.4px;line-height:6.4px;color:#e6e6e6;font-weight:bold;">M</div>
<div class="t" style="left:284.20px;top:564.43px;font-size:5.4px;line-height:6.4px;color:#e6e6e6;font-weight:bold;">S</div>
<svg style="position:absolute;left:413.20px;top:555.30px" width="8.74" height="4.60" viewBox="0 0 19.00 10"><g fill="none" stroke="#c8c8c8" stroke-width="1.1"><path transform="translate(0.00 0)" d="M1 2h3.5v3h-3.5zM6.5 0.5v9M1.5 7v2h4"/><path transform="translate(9.50 0)" d="M1 1.5h7M4.5 1.5v2.5M0.5 5h8.5M2.5 7v2h5"/></g></svg>
<div style="position:absolute;left:312.60px;top:564.00px;width:24.40px;height:7.10px;background:#424242;border-radius:2.5px;box-shadow:inset 0 0 0 0.5px rgba(255,255,255,0.04);"></div>
<div class="t" style="left:315.60px;top:564.09px;font-size:5.8px;line-height:6.8px;color:#e0e0e0;letter-spacing:-0.2px;">/16</div>
<svg style="position:absolute;left:333.00px;top:565.40px;" width="3" height="4.3" viewBox="0 0 3 4.3"><path d="M0.3 1.99L1.5 0.3 2.7 1.99M0.3 2.31L1.5 4.00 2.7 2.31" stroke="#8a8a8a" stroke-width="0.6" fill="none"/></svg>
<div style="position:absolute;left:340.20px;top:564.00px;width:18.10px;height:7.10px;background:#424242;border-radius:2.5px;box-shadow:inset 0 0 0 0.5px rgba(255,255,255,0.04);"></div>
<svg style="position:absolute;left:343.40px;top:565.55px;" width="6" height="4" viewBox="0 0 6 4"><path d="M0.3 2h5M3.4 0.3L5.3 2 3.4 3.7" stroke="#e0e0e0" stroke-width="0.8" fill="none"/></svg>
<svg style="position:absolute;left:354.20px;top:565.40px;" width="3" height="4.3" viewBox="0 0 3 4.3"><path d="M0.3 1.99L1.5 0.3 2.7 1.99M0.3 2.31L1.5 4.00 2.7 2.31" stroke="#8a8a8a" stroke-width="0.6" fill="none"/></svg>
<div style="position:absolute;left:361.30px;top:564.00px;width:17.70px;height:7.10px;background:#424242;border-radius:2.5px;box-shadow:inset 0 0 0 0.5px rgba(255,255,255,0.04);"></div>
<svg style="position:absolute;left:363.40px;top:565.35px;" width="6" height="4.4" viewBox="0 0 6 4.4"><circle cx="0.9" cy="2.2" r="0.8" fill="#e0e0e0"/><path d="M2.6 0.5h2.2v3.4H2.6z" stroke="#e0e0e0" stroke-width="0.6" fill="none"/></svg>
<svg style="position:absolute;left:371.40px;top:565.35px;" width="6" height="4.4" viewBox="0 0 6 4.4"><path d="M0.6 0.5h2.2v3.4H0.6z" stroke="#e0e0e0" stroke-width="0.6" fill="none"/><circle cx="4.6" cy="2.2" r="0.8" fill="#e0e0e0"/></svg>
<div style="position:absolute;left:382.30px;top:564.00px;width:17.30px;height:7.10px;background:#424242;border-radius:2.5px;box-shadow:inset 0 0 0 0.5px rgba(255,255,255,0.04);"></div>
<svg style="position:absolute;left:384.40px;top:566.35px;" width="5" height="3.0" viewBox="0 0 5 3.0"><path d="M0.3 0.3L2.5 2.6 4.7 0.3" stroke="#dcdcdc" stroke-width="0.8" fill="none"/></svg>
<svg style="position:absolute;left:393.40px;top:565.95px;" width="5" height="3" viewBox="0 0 5 3"><path d="M0.3 2.6L2.5 0.4 4.7 2.6" stroke="#dcdcdc" stroke-width="0.8" fill="none"/></svg>
<div style="position:absolute;left:402.60px;top:563.70px;width:8.60px;height:7.70px;background:#4a4a4a;border-radius:2.5px;box-shadow:inset 0 0 0 0.5px rgba(255,255,255,0.04);"></div>
<svg style="position:absolute;left:404.20px;top:565.05px;" width="5.4" height="5" viewBox="0 0 5.4 5"><rect x="0.4" y="0.4" width="4.6" height="4.2" rx="0.6" fill="none" stroke="#e6e6e6" stroke-width="0.7"/><path d="M3.4 1.2L1.8 2.5 3.4 3.8" stroke="#e6e6e6" stroke-width="0.6" fill="none"/></svg>
<div style="position:absolute;left:414.40px;top:563.70px;width:8.60px;height:7.70px;background:#4a4a4a;border-radius:2.5px;box-shadow:inset 0 0 0 0.5px rgba(255,255,255,0.04);"></div>
<svg style="position:absolute;left:416.00px;top:565.05px;" width="5.4" height="5" viewBox="0 0 5.4 5"><rect x="0.4" y="0.4" width="4.6" height="4.2" rx="0.6" fill="none" stroke="#e6e6e6" stroke-width="0.7"/><rect x="1.8" y="1.7" width="1.8" height="1.6" fill="#e6e6e6"/></svg>
<div style="position:absolute;left:247.00px;top:594.30px;width:181.50px;height:0.50px;background:#303030;"></div>
<svg style="position:absolute;left:250.20px;top:583.35px;" width="3" height="4.4" viewBox="0 0 3 4.4"><path d="M0.4 0.4L2.4 2.2 0.4 4" stroke="#c8c8c8" stroke-width="0.7" fill="none"/></svg>
<svg style="position:absolute;left:256.50px;top:581.15px;" width="11" height="7" viewBox="0 0 11 7"><path d="M5.5 0.5v2" stroke="#1ecba0" stroke-width="0.7"/><ellipse cx="5.5" cy="4" rx="5.2" ry="2" fill="#1ecba0"/><ellipse cx="5.5" cy="3.2" rx="2" ry="0.9" fill="#1ecba0"/></svg>
<div class="t" style="left:272.60px;top:575.22px;font-size:5.7px;line-height:6.7px;color:#f4f4f4;letter-spacing:-0.1px;-webkit-text-stroke:0.2px #f4f4f4;">Hi-Hat 1</div>
<svg style="position:absolute;left:300.20px;top:575.85px;" width="3" height="5.6" viewBox="0 0 3 5.6"><path d="M0.3 1.8L1.5 0.5 2.7 1.8M0.3 3.8L1.5 5.1 2.7 3.8" stroke="#c8c8c8" stroke-width="0.6" fill="none"/></svg>
<div style="position:absolute;left:272.60px;top:584.95px;width:18.10px;height:6.80px;background:#444;border-radius:2px;"></div>
<div class="t" style="left:274.80px;top:585.48px;font-size:5.4px;line-height:6.4px;color:#e6e6e6;font-weight:bold;">M</div>
<div class="t" style="left:284.20px;top:585.48px;font-size:5.4px;line-height:6.4px;color:#e6e6e6;font-weight:bold;">S</div>
<svg style="position:absolute;left:413.20px;top:576.35px" width="8.74" height="4.60" viewBox="0 0 19.00 10"><g fill="none" stroke="#c8c8c8" stroke-width="1.1"><path transform="translate(0.00 0)" d="M1 1.5h3.5q0 4-3.5 6M6.5 0.5v9M6.5 4.5h2"/><path transform="translate(9.50 0)" d="M1 1h6v2.3h-6v2.3h6M0.5 7.5h8.5M4.5 7.5v2"/></g></svg>
<div style="position:absolute;left:312.60px;top:585.05px;width:24.40px;height:7.10px;background:#424242;border-radius:2.5px;box-shadow:inset 0 0 0 0.5px rgba(255,255,255,0.04);"></div>
<div class="t" style="left:315.60px;top:585.14px;font-size:5.8px;line-height:6.8px;color:#e0e0e0;letter-spacing:-0.2px;">/16</div>
<svg style="position:absolute;left:333.00px;top:586.45px;" width="3" height="4.3" viewBox="0 0 3 4.3"><path d="M0.3 1.99L1.5 0.3 2.7 1.99M0.3 2.31L1.5 4.00 2.7 2.31" stroke="#8a8a8a" stroke-width="0.6" fill="none"/></svg>
<div style="position:absolute;left:340.20px;top:585.05px;width:18.10px;height:7.10px;background:#424242;border-radius:2.5px;box-shadow:inset 0 0 0 0.5px rgba(255,255,255,0.04);"></div>
<svg style="position:absolute;left:343.40px;top:586.60px;" width="6" height="4" viewBox="0 0 6 4"><path d="M0.3 2h5M3.4 0.3L5.3 2 3.4 3.7" stroke="#e0e0e0" stroke-width="0.8" fill="none"/></svg>
<svg style="position:absolute;left:354.20px;top:586.45px;" width="3" height="4.3" viewBox="0 0 3 4.3"><path d="M0.3 1.99L1.5 0.3 2.7 1.99M0.3 2.31L1.5 4.00 2.7 2.31" stroke="#8a8a8a" stroke-width="0.6" fill="none"/></svg>
<div style="position:absolute;left:361.30px;top:585.05px;width:17.70px;height:7.10px;background:#424242;border-radius:2.5px;box-shadow:inset 0 0 0 0.5px rgba(255,255,255,0.04);"></div>
<svg style="position:absolute;left:363.40px;top:586.40px;" width="6" height="4.4" viewBox="0 0 6 4.4"><circle cx="0.9" cy="2.2" r="0.8" fill="#e0e0e0"/><path d="M2.6 0.5h2.2v3.4H2.6z" stroke="#e0e0e0" stroke-width="0.6" fill="none"/></svg>
<svg style="position:absolute;left:371.40px;top:586.40px;" width="6" height="4.4" viewBox="0 0 6 4.4"><path d="M0.6 0.5h2.2v3.4H0.6z" stroke="#e0e0e0" stroke-width="0.6" fill="none"/><circle cx="4.6" cy="2.2" r="0.8" fill="#e0e0e0"/></svg>
<div style="position:absolute;left:382.30px;top:585.05px;width:17.30px;height:7.10px;background:#424242;border-radius:2.5px;box-shadow:inset 0 0 0 0.5px rgba(255,255,255,0.04);"></div>
<svg style="position:absolute;left:384.40px;top:587.40px;" width="5" height="3.0" viewBox="0 0 5 3.0"><path d="M0.3 0.3L2.5 2.6 4.7 0.3" stroke="#dcdcdc" stroke-width="0.8" fill="none"/></svg>
<svg style="position:absolute;left:393.40px;top:587.00px;" width="5" height="3" viewBox="0 0 5 3"><path d="M0.3 2.6L2.5 0.4 4.7 2.6" stroke="#dcdcdc" stroke-width="0.8" fill="none"/></svg>
<div style="position:absolute;left:402.60px;top:584.75px;width:8.60px;height:7.70px;background:#4a4a4a;border-radius:2.5px;box-shadow:inset 0 0 0 0.5px rgba(255,255,255,0.04);"></div>
<svg style="position:absolute;left:404.20px;top:586.10px;" width="5.4" height="5" viewBox="0 0 5.4 5"><rect x="0.4" y="0.4" width="4.6" height="4.2" rx="0.6" fill="none" stroke="#e6e6e6" stroke-width="0.7"/><path d="M3.4 1.2L1.8 2.5 3.4 3.8" stroke="#e6e6e6" stroke-width="0.6" fill="none"/></svg>
<div style="position:absolute;left:414.40px;top:584.75px;width:8.60px;height:7.70px;background:#4a4a4a;border-radius:2.5px;box-shadow:inset 0 0 0 0.5px rgba(255,255,255,0.04);"></div>
<svg style="position:absolute;left:416.00px;top:586.10px;" width="5.4" height="5" viewBox="0 0 5.4 5"><rect x="0.4" y="0.4" width="4.6" height="4.2" rx="0.6" fill="none" stroke="#e6e6e6" stroke-width="0.7"/><rect x="1.8" y="1.7" width="1.8" height="1.6" fill="#e6e6e6"/></svg>
<div style="position:absolute;left:247.00px;top:615.35px;width:181.50px;height:0.50px;background:#303030;"></div>
<svg style="position:absolute;left:249.60px;top:605.40px;" width="4.4" height="3" viewBox="0 0 4.4 3"><path d="M0.4 0.4L2.2 2.4 4 0.4" stroke="#c8c8c8" stroke-width="0.7" fill="none"/></svg>
<svg style="position:absolute;left:256.50px;top:602.20px;" width="11" height="7" viewBox="0 0 11 7"><path d="M5.5 0.5v2" stroke="#1ab0e0" stroke-width="0.7"/><ellipse cx="5.5" cy="4" rx="5.2" ry="2" fill="#1ab0e0"/><ellipse cx="5.5" cy="3.2" rx="2" ry="0.9" fill="#1ab0e0"/></svg>
<div class="t" style="left:272.60px;top:596.27px;font-size:5.7px;line-height:6.7px;color:#f4f4f4;letter-spacing:-0.1px;-webkit-text-stroke:0.2px #f4f4f4;">Hi-Hat 2</div>
<svg style="position:absolute;left:300.20px;top:596.90px;" width="3" height="5.6" viewBox="0 0 3 5.6"><path d="M0.3 1.8L1.5 0.5 2.7 1.8M0.3 3.8L1.5 5.1 2.7 3.8" stroke="#c8c8c8" stroke-width="0.6" fill="none"/></svg>
<div style="position:absolute;left:272.60px;top:606.00px;width:18.10px;height:6.80px;background:#444;border-radius:2px;"></div>
<div class="t" style="left:274.80px;top:606.53px;font-size:5.4px;line-height:6.4px;color:#e6e6e6;font-weight:bold;">M</div>
<div class="t" style="left:284.20px;top:606.53px;font-size:5.4px;line-height:6.4px;color:#e6e6e6;font-weight:bold;">S</div>
<svg style="position:absolute;left:413.20px;top:597.40px" width="8.74" height="4.60" viewBox="0 0 19.00 10"><g fill="none" stroke="#c8c8c8" stroke-width="1.1"><path transform="translate(0.00 0)" d="M1.5 1v4h3.5M6.8 0.5v6M6.8 3h2M1.5 7.5h6v2h-6z"/><path transform="translate(9.50 0)" d="M2.5 1.5a2.2 2.2 0 1 0 0.01 0M6.8 0.5v9M6.8 4.5h2M1.5 8h4"/></g></svg>
<div style="position:absolute;left:312.60px;top:606.10px;width:24.40px;height:7.10px;background:#424242;border-radius:2.5px;box-shadow:inset 0 0 0 0.5px rgba(255,255,255,0.04);"></div>
<div class="t" style="left:315.60px;top:606.19px;font-size:5.8px;line-height:6.8px;color:#e0e0e0;letter-spacing:-0.2px;">/16</div>
<svg style="position:absolute;left:333.00px;top:607.50px;" width="3" height="4.3" viewBox="0 0 3 4.3"><path d="M0.3 1.99L1.5 0.3 2.7 1.99M0.3 2.31L1.5 4.00 2.7 2.31" stroke="#8a8a8a" stroke-width="0.6" fill="none"/></svg>
<div style="position:absolute;left:340.20px;top:606.10px;width:18.10px;height:7.10px;background:#424242;border-radius:2.5px;box-shadow:inset 0 0 0 0.5px rgba(255,255,255,0.04);"></div>
<svg style="position:absolute;left:343.40px;top:607.65px;" width="6" height="4" viewBox="0 0 6 4"><path d="M0.3 2h5M3.4 0.3L5.3 2 3.4 3.7" stroke="#e0e0e0" stroke-width="0.8" fill="none"/></svg>
<svg style="position:absolute;left:354.20px;top:607.50px;" width="3" height="4.3" viewBox="0 0 3 4.3"><path d="M0.3 1.99L1.5 0.3 2.7 1.99M0.3 2.31L1.5 4.00 2.7 2.31" stroke="#8a8a8a" stroke-width="0.6" fill="none"/></svg>
<div style="position:absolute;left:361.30px;top:606.10px;width:17.70px;height:7.10px;background:#424242;border-radius:2.5px;box-shadow:inset 0 0 0 0.5px rgba(255,255,255,0.04);"></div>
<svg style="position:absolute;left:363.40px;top:607.45px;" width="6" height="4.4" viewBox="0 0 6 4.4"><circle cx="0.9" cy="2.2" r="0.8" fill="#e0e0e0"/><path d="M2.6 0.5h2.2v3.4H2.6z" stroke="#e0e0e0" stroke-width="0.6" fill="none"/></svg>
<svg style="position:absolute;left:371.40px;top:607.45px;" width="6" height="4.4" viewBox="0 0 6 4.4"><path d="M0.6 0.5h2.2v3.4H0.6z" stroke="#e0e0e0" stroke-width="0.6" fill="none"/><circle cx="4.6" cy="2.2" r="0.8" fill="#e0e0e0"/></svg>
<div style="position:absolute;left:382.30px;top:606.10px;width:17.30px;height:7.10px;background:#424242;border-radius:2.5px;box-shadow:inset 0 0 0 0.5px rgba(255,255,255,0.04);"></div>
<svg style="position:absolute;left:384.40px;top:608.45px;" width="5" height="3.0" viewBox="0 0 5 3.0"><path d="M0.3 0.3L2.5 2.6 4.7 0.3" stroke="#dcdcdc" stroke-width="0.8" fill="none"/></svg>
<svg style="position:absolute;left:393.40px;top:608.05px;" width="5" height="3" viewBox="0 0 5 3"><path d="M0.3 2.6L2.5 0.4 4.7 2.6" stroke="#dcdcdc" stroke-width="0.8" fill="none"/></svg>
<div style="position:absolute;left:402.60px;top:605.80px;width:8.60px;height:7.70px;background:#4a4a4a;border-radius:2.5px;box-shadow:inset 0 0 0 0.5px rgba(255,255,255,0.04);"></div>
<svg style="position:absolute;left:404.20px;top:607.15px;" width="5.4" height="5" viewBox="0 0 5.4 5"><rect x="0.4" y="0.4" width="4.6" height="4.2" rx="0.6" fill="none" stroke="#e6e6e6" stroke-width="0.7"/><path d="M3.4 1.2L1.8 2.5 3.4 3.8" stroke="#e6e6e6" stroke-width="0.6" fill="none"/></svg>
<div style="position:absolute;left:414.40px;top:605.80px;width:8.60px;height:7.70px;background:#4a4a4a;border-radius:2.5px;box-shadow:inset 0 0 0 0.5px rgba(255,255,255,0.04);"></div>
<svg style="position:absolute;left:416.00px;top:607.15px;" width="5.4" height="5" viewBox="0 0 5.4 5"><rect x="0.4" y="0.4" width="4.6" height="4.2" rx="0.6" fill="none" stroke="#e6e6e6" stroke-width="0.7"/><rect x="1.8" y="1.7" width="1.8" height="1.6" fill="#e6e6e6"/></svg>
<div style="position:absolute;left:263.00px;top:636.40px;width:165.50px;height:0.50px;background:#303030;"></div>
<svg style="position:absolute;left:407.20px;top:618.45px" width="13.11" height="4.60" viewBox="0 0 28.50 10"><g fill="none" stroke="#c8c8c8" stroke-width="1.1"><path transform="translate(0.00 0)" d="M1 2h3.5v3h-3.5zM6.5 0.5v9M1.5 7v2h4"/><path transform="translate(9.50 0)" d="M1 1.5h7M4.5 1.5v2.5M0.5 5h8.5M2.5 7v2h5"/><path transform="translate(19.00 0)" d="M1 1.5h3M2.5 1.5q0 3-2 5M3 4.5l2 2M7 0.5v9"/></g></svg>
<div class="t" style="left:421.40px;top:618.72px;font-size:5px;line-height:6px;color:#c8c8c8;">:</div>
<div style="position:absolute;left:361.30px;top:627.15px;width:17.70px;height:7.10px;background:#424242;border-radius:2.5px;box-shadow:inset 0 0 0 0.5px rgba(255,255,255,0.04);"></div>
<svg style="position:absolute;left:363.40px;top:628.50px;" width="6" height="4.4" viewBox="0 0 6 4.4"><circle cx="0.9" cy="2.2" r="0.8" fill="#e0e0e0"/><path d="M2.6 0.5h2.2v3.4H2.6z" stroke="#e0e0e0" stroke-width="0.6" fill="none"/></svg>
<svg style="position:absolute;left:371.40px;top:628.50px;" width="6" height="4.4" viewBox="0 0 6 4.4"><path d="M0.6 0.5h2.2v3.4H0.6z" stroke="#e0e0e0" stroke-width="0.6" fill="none"/><circle cx="4.6" cy="2.2" r="0.8" fill="#e0e0e0"/></svg>
<div style="position:absolute;left:382.30px;top:627.15px;width:17.30px;height:7.10px;background:#424242;border-radius:2.5px;box-shadow:inset 0 0 0 0.5px rgba(255,255,255,0.04);"></div>
<svg style="position:absolute;left:384.40px;top:629.50px;" width="5" height="3.0" viewBox="0 0 5 3.0"><path d="M0.3 0.3L2.5 2.6 4.7 0.3" stroke="#dcdcdc" stroke-width="0.8" fill="none"/></svg>
<svg style="position:absolute;left:393.40px;top:629.10px;" width="5" height="3" viewBox="0 0 5 3"><path d="M0.3 2.6L2.5 0.4 4.7 2.6" stroke="#dcdcdc" stroke-width="0.8" fill="none"/></svg>
<div style="position:absolute;left:402.60px;top:626.85px;width:8.60px;height:7.70px;background:#4a4a4a;border-radius:2.5px;box-shadow:inset 0 0 0 0.5px rgba(255,255,255,0.04);"></div>
<svg style="position:absolute;left:404.20px;top:628.20px;" width="5.4" height="5" viewBox="0 0 5.4 5"><rect x="0.4" y="0.4" width="4.6" height="4.2" rx="0.6" fill="none" stroke="#e6e6e6" stroke-width="0.7"/><path d="M3.4 1.2L1.8 2.5 3.4 3.8" stroke="#e6e6e6" stroke-width="0.6" fill="none"/></svg>
<div style="position:absolute;left:414.40px;top:626.85px;width:8.60px;height:7.70px;background:#4a4a4a;border-radius:2.5px;box-shadow:inset 0 0 0 0.5px rgba(255,255,255,0.04);"></div>
<svg style="position:absolute;left:416.00px;top:628.20px;" width="5.4" height="5" viewBox="0 0 5.4 5"><rect x="0.4" y="0.4" width="4.6" height="4.2" rx="0.6" fill="none" stroke="#e6e6e6" stroke-width="0.7"/><rect x="1.8" y="1.7" width="1.8" height="1.6" fill="#e6e6e6"/></svg>
<div style="position:absolute;left:263.00px;top:657.45px;width:165.50px;height:0.50px;background:#303030;"></div>
<svg style="position:absolute;left:402.80px;top:639.50px" width="17.48" height="4.60" viewBox="0 0 38.00 10"><g fill="none" stroke="#c8c8c8" stroke-width="1.1"><path transform="translate(0.00 0)" d="M1.5 1v4h3.5M6.8 0.5v6M6.8 3h2M1.5 7.5h6v2h-6z"/><path transform="translate(9.50 0)" d="M2.5 1.5a2.2 2.2 0 1 0 0.01 0M6.8 0.5v9M6.8 4.5h2M1.5 8h4"/><path transform="translate(19.00 0)" d="M1 1.5h3.5q0 4-3.5 6M6.5 0.5v9M6.5 4.5h2"/><path transform="translate(28.50 0)" d="M1 1h6v2.3h-6v2.3h6M0.5 7.5h8.5M4.5 7.5v2"/></g></svg>
<div class="t" style="left:421.40px;top:639.77px;font-size:5px;line-height:6px;color:#c8c8c8;">:</div>
<div style="position:absolute;left:361.30px;top:648.20px;width:17.70px;height:7.10px;background:#424242;border-radius:2.5px;box-shadow:inset 0 0 0 0.5px rgba(255,255,255,0.04);"></div>
<svg style="position:absolute;left:363.40px;top:649.55px;" width="6" height="4.4" viewBox="0 0 6 4.4"><circle cx="0.9" cy="2.2" r="0.8" fill="#e0e0e0"/><path d="M2.6 0.5h2.2v3.4H2.6z" stroke="#e0e0e0" stroke-width="0.6" fill="none"/></svg>
<svg style="position:absolute;left:371.40px;top:649.55px;" width="6" height="4.4" viewBox="0 0 6 4.4"><path d="M0.6 0.5h2.2v3.4H0.6z" stroke="#e0e0e0" stroke-width="0.6" fill="none"/><circle cx="4.6" cy="2.2" r="0.8" fill="#e0e0e0"/></svg>
<div style="position:absolute;left:382.30px;top:648.20px;width:17.30px;height:7.10px;background:#424242;border-radius:2.5px;box-shadow:inset 0 0 0 0.5px rgba(255,255,255,0.04);"></div>
<svg style="position:absolute;left:384.40px;top:650.55px;" width="5" height="3.0" viewBox="0 0 5 3.0"><path d="M0.3 0.3L2.5 2.6 4.7 0.3" stroke="#dcdcdc" stroke-width="0.8" fill="none"/></svg>
<svg style="position:absolute;left:393.40px;top:650.15px;" width="5" height="3" viewBox="0 0 5 3"><path d="M0.3 2.6L2.5 0.4 4.7 2.6" stroke="#dcdcdc" stroke-width="0.8" fill="none"/></svg>
<div style="position:absolute;left:402.60px;top:647.90px;width:8.60px;height:7.70px;background:#4a4a4a;border-radius:2.5px;box-shadow:inset 0 0 0 0.5px rgba(255,255,255,0.04);"></div>
<svg style="position:absolute;left:404.20px;top:649.25px;" width="5.4" height="5" viewBox="0 0 5.4 5"><rect x="0.4" y="0.4" width="4.6" height="4.2" rx="0.6" fill="none" stroke="#e6e6e6" stroke-width="0.7"/><path d="M3.4 1.2L1.8 2.5 3.4 3.8" stroke="#e6e6e6" stroke-width="0.6" fill="none"/></svg>
<div style="position:absolute;left:414.40px;top:647.90px;width:8.60px;height:7.70px;background:#4a4a4a;border-radius:2.5px;box-shadow:inset 0 0 0 0.5px rgba(255,255,255,0.04);"></div>
<svg style="position:absolute;left:416.00px;top:649.25px;" width="5.4" height="5" viewBox="0 0 5.4 5"><rect x="0.4" y="0.4" width="4.6" height="4.2" rx="0.6" fill="none" stroke="#e6e6e6" stroke-width="0.7"/><rect x="1.8" y="1.7" width="1.8" height="1.6" fill="#e6e6e6"/></svg>
<div style="position:absolute;left:263.00px;top:678.50px;width:165.50px;height:0.50px;background:#303030;"></div>
<svg style="position:absolute;left:411.60px;top:660.55px" width="8.74" height="4.60" viewBox="0 0 19.00 10"><g fill="none" stroke="#c8c8c8" stroke-width="1.1"><path transform="translate(0.00 0)" d="M1 1h6v2.3h-6v2.3h6M0.5 7.5h8.5M4.5 7.5v2"/><path transform="translate(9.50 0)" d="M1 2h3.5v3h-3.5zM6.5 0.5v9M1.5 7v2h4"/></g></svg>
<div class="t" style="left:421.40px;top:660.82px;font-size:5px;line-height:6px;color:#c8c8c8;">:</div>
<div style="position:absolute;left:361.30px;top:669.25px;width:17.70px;height:7.10px;background:#424242;border-radius:2.5px;box-shadow:inset 0 0 0 0.5px rgba(255,255,255,0.04);"></div>
<svg style="position:absolute;left:363.40px;top:670.60px;" width="6" height="4.4" viewBox="0 0 6 4.4"><circle cx="0.9" cy="2.2" r="0.8" fill="#e0e0e0"/><path d="M2.6 0.5h2.2v3.4H2.6z" stroke="#e0e0e0" stroke-width="0.6" fill="none"/></svg>
<svg style="position:absolute;left:371.40px;top:670.60px;" width="6" height="4.4" viewBox="0 0 6 4.4"><path d="M0.6 0.5h2.2v3.4H0.6z" stroke="#e0e0e0" stroke-width="0.6" fill="none"/><circle cx="4.6" cy="2.2" r="0.8" fill="#e0e0e0"/></svg>
<div style="position:absolute;left:382.30px;top:669.25px;width:17.30px;height:7.10px;background:#424242;border-radius:2.5px;box-shadow:inset 0 0 0 0.5px rgba(255,255,255,0.04);"></div>
<svg style="position:absolute;left:384.40px;top:671.60px;" width="5" height="3.0" viewBox="0 0 5 3.0"><path d="M0.3 0.3L2.5 2.6 4.7 0.3" stroke="#dcdcdc" stroke-width="0.8" fill="none"/></svg>
<svg style="position:absolute;left:393.40px;top:671.20px;" width="5" height="3" viewBox="0 0 5 3"><path d="M0.3 2.6L2.5 0.4 4.7 2.6" stroke="#dcdcdc" stroke-width="0.8" fill="none"/></svg>
<div style="position:absolute;left:402.60px;top:668.95px;width:8.60px;height:7.70px;background:#4a4a4a;border-radius:2.5px;box-shadow:inset 0 0 0 0.5px rgba(255,255,255,0.04);"></div>
<svg style="position:absolute;left:404.20px;top:670.30px;" width="5.4" height="5" viewBox="0 0 5.4 5"><rect x="0.4" y="0.4" width="4.6" height="4.2" rx="0.6" fill="none" stroke="#e6e6e6" stroke-width="0.7"/><path d="M3.4 1.2L1.8 2.5 3.4 3.8" stroke="#e6e6e6" stroke-width="0.6" fill="none"/></svg>
<div style="position:absolute;left:414.40px;top:668.95px;width:8.60px;height:7.70px;background:#4a4a4a;border-radius:2.5px;box-shadow:inset 0 0 0 0.5px rgba(255,255,255,0.04);"></div>
<svg style="position:absolute;left:416.00px;top:670.30px;" width="5.4" height="5" viewBox="0 0 5.4 5"><rect x="0.4" y="0.4" width="4.6" height="4.2" rx="0.6" fill="none" stroke="#e6e6e6" stroke-width="0.7"/><rect x="1.8" y="1.7" width="1.8" height="1.6" fill="#e6e6e6"/></svg>
<div style="position:absolute;left:431.60px;top:455.50px;width:39.00px;height:8.70px;background:#262626;border-radius:2px;"></div>
<div class="t" style="left:434.00px;top:457.16px;font-size:5.6px;line-height:6.6px;color:#c044d8;letter-spacing:-0.05px;">Trap Beat 1</div>
<div style="position:absolute;left:938.00px;top:455.50px;width:16.60px;height:8.20px;background:#333;border-radius:2.5px;box-shadow:inset 0 0 0 0.5px rgba(255,255,255,0.04);"></div>
<svg style="position:absolute;left:943.40px;top:456.90px;" width="5" height="5.6" viewBox="0 0 5 5.6"><path d="M1.2 1.6v2.6Q1.2 5.2 2.6 5.2 4.4 5.2 4.4 3.6V2.2Q4.4 0.6 3 0.9" stroke="#ccc" stroke-width="0.7" fill="none"/></svg>
<div style="position:absolute;left:962.00px;top:455.50px;width:46.60px;height:8.20px;background:#343434;border-radius:2.5px;box-shadow:inset 0 0 0 0.5px rgba(255,255,255,0.04);"></div>
<div class="t" style="left:965.60px;top:456.48px;font-size:6.4px;line-height:7.4px;color:#f2f2f2;font-weight:bold;letter-spacing:-0.1px;">32</div>
<svg style="position:absolute;left:974.00px;top:456.90px" width="10.26" height="5.40" viewBox="0 0 19.00 10"><g fill="none" stroke="#e6e6e6" stroke-width="1.2"><path transform="translate(0.00 0)" d="M2.5 1.5a2.2 2.2 0 1 0 0.01 0M6.8 0.5v9M6.8 4.5h2M1.5 8h4"/><path transform="translate(9.50 0)" d="M1 1.5h3.5q0 4-3.5 6M6.5 0.5v9M6.5 4.5h2"/></g></svg>
<svg style="position:absolute;left:1003.00px;top:456.60px;" width="3" height="6" viewBox="0 0 3 6"><path d="M0.3 2L1.5 0.6 2.7 2M0.3 4L1.5 5.4 2.7 4" stroke="#9a9a9a" stroke-width="0.7" fill="none"/></svg>
<div style="position:absolute;left:429.00px;top:467.60px;width:584.00px;height:0.80px;background:#1e1e1e;"></div>
<div style="position:absolute;left:428.50px;top:451.00px;width:0.70px;height:226.60px;background:#262626;"></div>
<svg style="position:absolute;left:428.50px;top:451.00px;" width="584.5" height="226.6" viewBox="0 0 584.5 226.6"><rect x="5.30" y="18.70" width="16.4" height="16.4" rx="1" fill="#4a6ae0"/><rect x="22.93" y="18.70" width="16.4" height="16.4" rx="1" fill="#1e2238"/><rect x="40.56" y="18.70" width="16.4" height="16.4" rx="1" fill="#1e2238"/><rect x="58.19" y="18.70" width="16.4" height="16.4" rx="1" fill="#1e2238"/><rect x="77.17" y="18.70" width="16.4" height="16.4" rx="1" fill="#1e2238"/><rect x="94.80" y="18.70" width="16.4" height="16.4" rx="1" fill="#1e2238"/><rect x="112.43" y="18.70" width="16.4" height="16.4" rx="1" fill="#4a6ae0"/><rect x="130.06" y="18.70" width="16.4" height="16.4" rx="1" fill="#1e2238"/><rect x="149.04" y="18.70" width="16.4" height="16.4" rx="1" fill="#1e2238"/><rect x="166.67" y="18.70" width="16.4" height="16.4" rx="1" fill="#1e2238"/><rect x="184.30" y="18.70" width="16.4" height="16.4" rx="1" fill="#4a6ae0"/><rect x="201.93" y="18.70" width="16.4" height="16.4" rx="1" fill="#1e2238"/><rect x="220.91" y="18.70" width="16.4" height="16.4" rx="1" fill="#4a6ae0"/><rect x="238.54" y="18.70" width="16.4" height="16.4" rx="1" fill="#1e2238"/><rect x="256.17" y="18.70" width="16.4" height="16.4" rx="1" fill="#1e2238"/><rect x="273.80" y="18.70" width="16.4" height="16.4" rx="1" fill="#1e2238"/><rect x="292.78" y="18.70" width="16.4" height="16.4" rx="1" fill="#1e2238"/><rect x="310.41" y="18.70" width="16.4" height="16.4" rx="1" fill="#1e2238"/><rect x="328.04" y="18.70" width="16.4" height="16.4" rx="1" fill="#4a6ae0"/><rect x="345.67" y="18.70" width="16.4" height="16.4" rx="1" fill="#1e2238"/><rect x="364.65" y="18.70" width="16.4" height="16.4" rx="1" fill="#1e2238"/><rect x="382.28" y="18.70" width="16.4" height="16.4" rx="1" fill="#1e2238"/><rect x="399.91" y="18.70" width="16.4" height="16.4" rx="1" fill="#1e2238"/><rect x="417.54" y="18.70" width="16.4" height="16.4" rx="1" fill="#1e2238"/><rect x="436.52" y="18.70" width="16.4" height="16.4" rx="1" fill="#1e2238"/><rect x="454.15" y="18.70" width="16.4" height="16.4" rx="1" fill="#1e2238"/><rect x="471.78" y="18.70" width="16.4" height="16.4" rx="1" fill="#1e2238"/><rect x="489.41" y="18.70" width="16.4" height="16.4" rx="1" fill="#1e2238"/><rect x="508.39" y="18.70" width="16.4" height="16.4" rx="1" fill="#1e2238"/><rect x="526.02" y="18.70" width="16.4" height="16.4" rx="1" fill="#1e2238"/><rect x="543.65" y="18.70" width="16.4" height="16.4" rx="1" fill="#1e2238"/><rect x="561.28" y="18.70" width="16.4" height="16.4" rx="1" fill="#1e2238"/><rect x="5.30" y="39.80" width="16.4" height="16.4" rx="1" fill="#172a33"/><rect x="22.93" y="39.80" width="16.4" height="16.4" rx="1" fill="#172a33"/><rect x="40.56" y="39.80" width="16.4" height="16.4" rx="1" fill="#172a33"/><rect x="130.06" y="39.80" width="16.4" height="16.4" rx="1" fill="#172a33"/><rect x="149.04" y="39.80" width="16.4" height="16.4" rx="1" fill="#172a33"/><rect x="166.67" y="39.80" width="16.4" height="16.4" rx="1" fill="#172a33"/><rect x="184.30" y="39.80" width="16.4" height="16.4" rx="1" fill="#2a9fd6"/><rect x="201.93" y="39.80" width="16.4" height="16.4" rx="1" fill="#172a33"/><rect x="220.91" y="39.80" width="16.4" height="16.4" rx="1" fill="#172a33"/><rect x="238.54" y="39.80" width="16.4" height="16.4" rx="1" fill="#2a9fd6"/><rect x="256.17" y="39.80" width="16.4" height="16.4" rx="1" fill="#172a33"/><rect x="273.80" y="39.80" width="16.4" height="16.4" rx="1" fill="#2a9fd6"/><rect x="292.78" y="39.80" width="16.4" height="16.4" rx="1" fill="#172a33"/><rect x="310.41" y="39.80" width="16.4" height="16.4" rx="1" fill="#172a33"/><rect x="328.04" y="39.80" width="16.4" height="16.4" rx="1" fill="#172a33"/><rect x="345.67" y="39.80" width="16.4" height="16.4" rx="1" fill="#2a9fd6"/><rect x="364.65" y="39.80" width="16.4" height="16.4" rx="1" fill="#172a33"/><rect x="382.28" y="39.80" width="16.4" height="16.4" rx="1" fill="#172a33"/><rect x="399.91" y="39.80" width="16.4" height="16.4" rx="1" fill="#172a33"/><rect x="417.54" y="39.80" width="16.4" height="16.4" rx="1" fill="#172a33"/><rect x="436.52" y="39.80" width="16.4" height="16.4" rx="1" fill="#172a33"/><rect x="454.15" y="39.80" width="16.4" height="16.4" rx="1" fill="#172a33"/><rect x="471.78" y="39.80" width="16.4" height="16.4" rx="1" fill="#2a9fd6"/><rect x="489.41" y="39.80" width="16.4" height="16.4" rx="1" fill="#172a33"/><rect x="508.39" y="39.80" width="16.4" height="16.4" rx="1" fill="#172a33"/><rect x="526.02" y="39.80" width="16.4" height="16.4" rx="1" fill="#172a33"/><rect x="543.65" y="39.80" width="16.4" height="16.4" rx="1" fill="#172a33"/><rect x="561.28" y="39.80" width="16.4" height="16.4" rx="1" fill="#172a33"/><rect x="58.19" y="39.80" width="70.64" height="16.4" rx="1" fill="#2a9fd6"/><rect x="5.30" y="60.80" width="16.4" height="16.4" rx="1" fill="#2b1c38"/><rect x="22.93" y="60.80" width="16.4" height="16.4" rx="1" fill="#2b1c38"/><rect x="40.56" y="60.80" width="16.4" height="16.4" rx="1" fill="#2b1c38"/><rect x="58.19" y="60.80" width="16.4" height="16.4" rx="1" fill="#2b1c38"/><rect x="77.17" y="60.80" width="16.4" height="16.4" rx="1" fill="#9a35d8"/><rect x="94.80" y="60.80" width="16.4" height="16.4" rx="1" fill="#2b1c38"/><rect x="112.43" y="60.80" width="16.4" height="16.4" rx="1" fill="#2b1c38"/><rect x="130.06" y="60.80" width="16.4" height="16.4" rx="1" fill="#2b1c38"/><rect x="149.04" y="60.80" width="16.4" height="16.4" rx="1" fill="#2b1c38"/><rect x="166.67" y="60.80" width="16.4" height="16.4" rx="1" fill="#2b1c38"/><rect x="184.30" y="60.80" width="16.4" height="16.4" rx="1" fill="#2b1c38"/><rect x="201.93" y="60.80" width="16.4" height="16.4" rx="1" fill="#2b1c38"/><rect x="220.91" y="60.80" width="16.4" height="16.4" rx="1" fill="#9a35d8"/><rect x="238.54" y="60.80" width="16.4" height="16.4" rx="1" fill="#2b1c38"/><rect x="256.17" y="60.80" width="16.4" height="16.4" rx="1" fill="#2b1c38"/><rect x="273.80" y="60.80" width="16.4" height="16.4" rx="1" fill="#2b1c38"/><rect x="292.78" y="60.80" width="16.4" height="16.4" rx="1" fill="#2b1c38"/><rect x="310.41" y="60.80" width="16.4" height="16.4" rx="1" fill="#2b1c38"/><rect x="328.04" y="60.80" width="16.4" height="16.4" rx="1" fill="#2b1c38"/><rect x="345.67" y="60.80" width="16.4" height="16.4" rx="1" fill="#2b1c38"/><rect x="364.65" y="60.80" width="16.4" height="16.4" rx="1" fill="#9a35d8"/><rect x="382.28" y="60.80" width="16.4" height="16.4" rx="1" fill="#2b1c38"/><rect x="399.91" y="60.80" width="16.4" height="16.4" rx="1" fill="#2b1c38"/><rect x="417.54" y="60.80" width="16.4" height="16.4" rx="1" fill="#2b1c38"/><rect x="436.52" y="60.80" width="16.4" height="16.4" rx="1" fill="#2b1c38"/><rect x="454.15" y="60.80" width="16.4" height="16.4" rx="1" fill="#2b1c38"/><rect x="471.78" y="60.80" width="16.4" height="16.4" rx="1" fill="#2b1c38"/><rect x="489.41" y="60.80" width="16.4" height="16.4" rx="1" fill="#2b1c38"/><rect x="508.39" y="60.80" width="16.4" height="16.4" rx="1" fill="#9a35d8"/><rect x="526.02" y="60.80" width="16.4" height="16.4" rx="1" fill="#2b1c38"/><rect x="543.65" y="60.80" width="16.4" height="16.4" rx="1" fill="#2b1c38"/><rect x="561.28" y="60.80" width="16.4" height="16.4" rx="1" fill="#2b1c38"/><rect x="5.30" y="81.90" width="16.4" height="16.4" rx="1" fill="#2b1c38"/><rect x="22.93" y="81.90" width="16.4" height="16.4" rx="1" fill="#2b1c38"/><rect x="40.56" y="81.90" width="16.4" height="16.4" rx="1" fill="#9a35d8"/><rect x="58.19" y="81.90" width="16.4" height="16.4" rx="1" fill="#2b1c38"/><rect x="77.17" y="81.90" width="16.4" height="16.4" rx="1" fill="#2b1c38"/><rect x="94.80" y="81.90" width="16.4" height="16.4" rx="1" fill="#2b1c38"/><rect x="112.43" y="81.90" width="16.4" height="16.4" rx="1" fill="#2b1c38"/><rect x="130.06" y="81.90" width="16.4" height="16.4" rx="1" fill="#2b1c38"/><rect x="149.04" y="81.90" width="16.4" height="16.4" rx="1" fill="#2b1c38"/><rect x="166.67" y="81.90" width="16.4" height="16.4" rx="1" fill="#2b1c38"/><rect x="184.30" y="81.90" width="16.4" height="16.4" rx="1" fill="#9a35d8"/><rect x="201.93" y="81.90" width="16.4" height="16.4" rx="1" fill="#2b1c38"/><rect x="220.91" y="81.90" width="16.4" height="16.4" rx="1" fill="#2b1c38"/><rect x="238.54" y="81.90" width="16.4" height="16.4" rx="1" fill="#2b1c38"/><rect x="256.17" y="81.90" width="16.4" height="16.4" rx="1" fill="#2b1c38"/><rect x="273.80" y="81.90" width="16.4" height="16.4" rx="1" fill="#2b1c38"/><rect x="292.78" y="81.90" width="16.4" height="16.4" rx="1" fill="#2b1c38"/><rect x="310.41" y="81.90" width="16.4" height="16.4" rx="1" fill="#2b1c38"/><rect x="328.04" y="81.90" width="16.4" height="16.4" rx="1" fill="#9a35d8"/><rect x="345.67" y="81.90" width="16.4" height="16.4" rx="1" fill="#2b1c38"/><rect x="364.65" y="81.90" width="16.4" height="16.4" rx="1" fill="#2b1c38"/><rect x="382.28" y="81.90" width="16.4" height="16.4" rx="1" fill="#2b1c38"/><rect x="399.91" y="81.90" width="16.4" height="16.4" rx="1" fill="#9a35d8"/><rect x="417.54" y="81.90" width="16.4" height="16.4" rx="1" fill="#2b1c38"/><rect x="436.52" y="81.90" width="16.4" height="16.4" rx="1" fill="#2b1c38"/><rect x="454.15" y="81.90" width="16.4" height="16.4" rx="1" fill="#2b1c38"/><rect x="471.78" y="81.90" width="16.4" height="16.4" rx="1" fill="#2b1c38"/><rect x="489.41" y="81.90" width="16.4" height="16.4" rx="1" fill="#2b1c38"/><rect x="508.39" y="81.90" width="16.4" height="16.4" rx="1" fill="#2b1c38"/><rect x="526.02" y="81.90" width="16.4" height="16.4" rx="1" fill="#2b1c38"/><rect x="543.65" y="81.90" width="16.4" height="16.4" rx="1" fill="#9a35d8"/><rect x="561.28" y="81.90" width="16.4" height="16.4" rx="1" fill="#2b1c38"/><rect x="5.30" y="103.00" width="16.4" height="16.4" rx="1" fill="#2b1c38"/><rect x="22.93" y="103.00" width="16.4" height="16.4" rx="1" fill="#2b1c38"/><rect x="40.56" y="103.00" width="16.4" height="16.4" rx="1" fill="#9a35d8"/><rect x="58.19" y="103.00" width="16.4" height="16.4" rx="1" fill="#9a35d8"/><rect x="77.17" y="103.00" width="16.4" height="16.4" rx="1" fill="#2b1c38"/><rect x="94.80" y="103.00" width="16.4" height="16.4" rx="1" fill="#2b1c38"/><rect x="112.43" y="103.00" width="16.4" height="16.4" rx="1" fill="#2b1c38"/><rect x="130.06" y="103.00" width="16.4" height="16.4" rx="1" fill="#2b1c38"/><rect x="149.04" y="103.00" width="16.4" height="16.4" rx="1" fill="#2b1c38"/><rect x="166.67" y="103.00" width="16.4" height="16.4" rx="1" fill="#2b1c38"/><rect x="184.30" y="103.00" width="16.4" height="16.4" rx="1" fill="#9a35d8"/><rect x="201.93" y="103.00" width="16.4" height="16.4" rx="1" fill="#9a35d8"/><rect x="220.91" y="103.00" width="16.4" height="16.4" rx="1" fill="#2b1c38"/><rect x="238.54" y="103.00" width="16.4" height="16.4" rx="1" fill="#2b1c38"/><rect x="256.17" y="103.00" width="16.4" height="16.4" rx="1" fill="#2b1c38"/><rect x="273.80" y="103.00" width="16.4" height="16.4" rx="1" fill="#2b1c38"/><rect x="292.78" y="103.00" width="16.4" height="16.4" rx="1" fill="#2b1c38"/><rect x="310.41" y="103.00" width="16.4" height="16.4" rx="1" fill="#2b1c38"/><rect x="328.04" y="103.00" width="16.4" height="16.4" rx="1" fill="#2b1c38"/><rect x="345.67" y="103.00" width="16.4" height="16.4" rx="1" fill="#2b1c38"/><rect x="364.65" y="103.00" width="16.4" height="16.4" rx="1" fill="#2b1c38"/><rect x="382.28" y="103.00" width="16.4" height="16.4" rx="1" fill="#2b1c38"/><rect x="399.91" y="103.00" width="16.4" height="16.4" rx="1" fill="#2b1c38"/><rect x="417.54" y="103.00" width="16.4" height="16.4" rx="1" fill="#2b1c38"/><rect x="436.52" y="103.00" width="16.4" height="16.4" rx="1" fill="#9a35d8"/><rect x="454.15" y="103.00" width="16.4" height="16.4" rx="1" fill="#9a35d8"/><rect x="471.78" y="103.00" width="16.4" height="16.4" rx="1" fill="#9a35d8"/><rect x="489.41" y="103.00" width="16.4" height="16.4" rx="1" fill="#9a35d8"/><rect x="508.39" y="103.00" width="16.4" height="16.4" rx="1" fill="#2b1c38"/><rect x="526.02" y="103.00" width="16.4" height="16.4" rx="1" fill="#9a35d8"/><rect x="543.65" y="103.00" width="16.4" height="16.4" rx="1" fill="#2b1c38"/><rect x="561.28" y="103.00" width="16.4" height="16.4" rx="1" fill="#2b1c38"/><rect x="5.30" y="124.00" width="16.4" height="16.5" rx="1" fill="#1ecba0"/><rect x="22.93" y="124.00" width="16.4" height="16.5" rx="1" fill="#15382e"/><rect x="40.56" y="124.00" width="16.4" height="16.5" rx="1" fill="#1ecba0"/><rect x="58.19" y="124.00" width="16.4" height="16.5" rx="1" fill="#1ecba0"/><rect x="77.17" y="124.00" width="16.4" height="16.5" rx="1" fill="#15382e"/><rect x="94.80" y="124.00" width="16.4" height="16.5" rx="1" fill="#15382e"/><rect x="112.43" y="124.00" width="16.4" height="16.5" rx="1" fill="#1ecba0"/><rect x="130.06" y="124.00" width="16.4" height="16.5" rx="1" fill="#1ecba0"/><rect x="149.04" y="124.00" width="16.4" height="16.5" rx="1" fill="#15382e"/><rect x="166.67" y="124.00" width="16.4" height="16.5" rx="1" fill="#15382e"/><rect x="184.30" y="124.00" width="16.4" height="16.5" rx="1" fill="#1ecba0"/><rect x="201.93" y="124.00" width="16.4" height="16.5" rx="1" fill="#1ecba0"/><rect x="220.91" y="124.00" width="16.4" height="16.5" rx="1" fill="#1ecba0"/><rect x="238.54" y="124.00" width="16.4" height="16.5" rx="1" fill="#15382e"/><rect x="256.17" y="124.00" width="16.4" height="16.5" rx="1" fill="#1ecba0"/><rect x="273.80" y="124.00" width="16.4" height="16.5" rx="1" fill="#1ecba0"/><rect x="292.78" y="124.00" width="16.4" height="16.5" rx="1" fill="#1ecba0"/><rect x="310.41" y="124.00" width="16.4" height="16.5" rx="1" fill="#1ecba0"/><rect x="328.04" y="124.00" width="16.4" height="16.5" rx="1" fill="#1ecba0"/><rect x="345.67" y="124.00" width="16.4" height="16.5" rx="1" fill="#15382e"/><rect x="364.65" y="124.00" width="16.4" height="16.5" rx="1" fill="#15382e"/><rect x="382.28" y="124.00" width="16.4" height="16.5" rx="1" fill="#15382e"/><rect x="399.91" y="124.00" width="16.4" height="16.5" rx="1" fill="#1ecba0"/><rect x="417.54" y="124.00" width="16.4" height="16.5" rx="1" fill="#1ecba0"/><rect x="436.52" y="124.00" width="16.4" height="16.5" rx="1" fill="#1ecba0"/><rect x="454.15" y="124.00" width="16.4" height="16.5" rx="1" fill="#15382e"/><rect x="471.78" y="124.00" width="16.4" height="16.5" rx="1" fill="#1ecba0"/><rect x="489.41" y="124.00" width="16.4" height="16.5" rx="1" fill="#1ecba0"/><rect x="508.39" y="124.00" width="16.4" height="16.5" rx="1" fill="#1ecba0"/><rect x="526.02" y="124.00" width="16.4" height="16.5" rx="1" fill="#1ecba0"/><rect x="543.65" y="124.00" width="16.4" height="16.5" rx="1" fill="#1ecba0"/><rect x="561.28" y="124.00" width="16.4" height="16.5" rx="1" fill="#1ecba0"/><rect x="58.19" y="145.60" width="16.4" height="17.3" rx="1" fill="#182b31"/><rect x="77.17" y="145.60" width="16.4" height="17.3" rx="1" fill="#16a6d2"/><rect x="94.80" y="145.60" width="16.4" height="17.3" rx="1" fill="#16a6d2"/><rect x="112.43" y="145.60" width="16.4" height="17.3" rx="1" fill="#182b31"/><rect x="130.06" y="145.60" width="16.4" height="17.3" rx="1" fill="#182b31"/><rect x="149.04" y="145.60" width="16.4" height="17.3" rx="1" fill="#16a6d2"/><rect x="166.67" y="145.60" width="16.4" height="17.3" rx="1" fill="#182b31"/><rect x="184.30" y="145.60" width="16.4" height="17.3" rx="1" fill="#16a6d2"/><rect x="201.93" y="145.60" width="16.4" height="17.3" rx="1" fill="#182b31"/><rect x="256.17" y="145.60" width="16.4" height="17.3" rx="1" fill="#182b31"/><rect x="273.80" y="145.60" width="16.4" height="17.3" rx="1" fill="#182b31"/><rect x="328.04" y="145.60" width="16.4" height="17.3" rx="1" fill="#182b31"/><rect x="345.67" y="145.60" width="16.4" height="17.3" rx="1" fill="#16a6d2"/><rect x="364.65" y="145.60" width="16.4" height="17.3" rx="1" fill="#16a6d2"/><rect x="382.28" y="145.60" width="16.4" height="17.3" rx="1" fill="#16a6d2"/><rect x="399.91" y="145.60" width="16.4" height="17.3" rx="1" fill="#182b31"/><rect x="417.54" y="145.60" width="16.4" height="17.3" rx="1" fill="#182b31"/><rect x="436.52" y="145.60" width="16.4" height="17.3" rx="1" fill="#182b31"/><rect x="454.15" y="145.60" width="16.4" height="17.3" rx="1" fill="#182b31"/><rect x="471.78" y="145.60" width="16.4" height="17.3" rx="1" fill="#16a6d2"/><rect x="489.41" y="145.60" width="16.4" height="17.3" rx="1" fill="#182b31"/><rect x="508.39" y="145.60" width="16.4" height="17.3" rx="1" fill="#182b31"/><rect x="526.02" y="145.60" width="16.4" height="17.3" rx="1" fill="#16a6d2"/><rect x="543.65" y="145.60" width="16.4" height="17.3" rx="1" fill="#16a6d2"/><rect x="561.28" y="145.60" width="16.4" height="17.3" rx="1" fill="#182b31"/><rect x="5.30" y="145.60" width="51.66" height="17.3" rx="1" fill="#16a6d2"/><rect x="220.91" y="145.60" width="34.03" height="17.3" rx="1" fill="#16a6d2"/><rect x="292.78" y="145.60" width="34.03" height="17.3" rx="1" fill="#16a6d2"/><rect x="58.19" y="165.20" width="16.4" height="18.3" rx="1" fill="#182b31"/><rect x="77.17" y="165.20" width="16.4" height="18.3" rx="1" fill="#16a6d2"/><rect x="94.80" y="165.20" width="16.4" height="18.3" rx="1" fill="#16a6d2"/><rect x="112.43" y="165.20" width="16.4" height="18.3" rx="1" fill="#182b31"/><rect x="130.06" y="165.20" width="16.4" height="18.3" rx="1" fill="#182b31"/><rect x="149.04" y="165.20" width="16.4" height="18.3" rx="1" fill="#16a6d2"/><rect x="166.67" y="165.20" width="16.4" height="18.3" rx="1" fill="#182b31"/><rect x="184.30" y="165.20" width="16.4" height="18.3" rx="1" fill="#16a6d2"/><rect x="201.93" y="165.20" width="16.4" height="18.3" rx="1" fill="#182b31"/><rect x="256.17" y="165.20" width="16.4" height="18.3" rx="1" fill="#182b31"/><rect x="273.80" y="165.20" width="16.4" height="18.3" rx="1" fill="#182b31"/><rect x="328.04" y="165.20" width="16.4" height="18.3" rx="1" fill="#182b31"/><rect x="345.67" y="165.20" width="16.4" height="18.3" rx="1" fill="#16a6d2"/><rect x="364.65" y="165.20" width="16.4" height="18.3" rx="1" fill="#16a6d2"/><rect x="382.28" y="165.20" width="16.4" height="18.3" rx="1" fill="#16a6d2"/><rect x="399.91" y="165.20" width="16.4" height="18.3" rx="1" fill="#182b31"/><rect x="417.54" y="165.20" width="16.4" height="18.3" rx="1" fill="#182b31"/><rect x="436.52" y="165.20" width="16.4" height="18.3" rx="1" fill="#182b31"/><rect x="454.15" y="165.20" width="16.4" height="18.3" rx="1" fill="#182b31"/><rect x="471.78" y="165.20" width="16.4" height="18.3" rx="1" fill="#16a6d2"/><rect x="489.41" y="165.20" width="16.4" height="18.3" rx="1" fill="#182b31"/><rect x="508.39" y="165.20" width="16.4" height="18.3" rx="1" fill="#182b31"/><rect x="526.02" y="165.20" width="16.4" height="18.3" rx="1" fill="#16a6d2"/><rect x="543.65" y="165.20" width="16.4" height="18.3" rx="1" fill="#16a6d2"/><rect x="561.28" y="165.20" width="16.4" height="18.3" rx="1" fill="#182b31"/><rect x="5.30" y="165.20" width="51.66" height="18.3" rx="1" fill="#16a6d2"/><rect x="220.91" y="165.20" width="34.03" height="18.3" rx="1" fill="#16a6d2"/><rect x="292.78" y="165.20" width="34.03" height="18.3" rx="1" fill="#16a6d2"/><rect x="58.19" y="185.80" width="16.4" height="19.2" rx="1" fill="#1a363c"/><rect x="77.17" y="185.80" width="16.4" height="19.2" rx="1" fill="#16a6d2"/><rect x="94.80" y="185.80" width="16.4" height="19.2" rx="1" fill="#16a6d2"/><rect x="112.43" y="185.80" width="16.4" height="19.2" rx="1" fill="#1a363c"/><rect x="130.06" y="185.80" width="16.4" height="19.2" rx="1" fill="#1a363c"/><rect x="149.04" y="185.80" width="16.4" height="19.2" rx="1" fill="#16a6d2"/><rect x="166.67" y="185.80" width="16.4" height="19.2" rx="1" fill="#1a363c"/><rect x="184.30" y="185.80" width="16.4" height="19.2" rx="1" fill="#16a6d2"/><rect x="201.93" y="185.80" width="16.4" height="19.2" rx="1" fill="#1a363c"/><rect x="256.17" y="185.80" width="16.4" height="19.2" rx="1" fill="#1a363c"/><rect x="273.80" y="185.80" width="16.4" height="19.2" rx="1" fill="#1a363c"/><rect x="328.04" y="185.80" width="16.4" height="19.2" rx="1" fill="#1a363c"/><rect x="345.67" y="185.80" width="16.4" height="19.2" rx="1" fill="#16a6d2"/><rect x="364.65" y="185.80" width="16.4" height="19.2" rx="1" fill="#16a6d2"/><rect x="382.28" y="185.80" width="16.4" height="19.2" rx="1" fill="#16a6d2"/><rect x="399.91" y="185.80" width="16.4" height="19.2" rx="1" fill="#1a363c"/><rect x="417.54" y="185.80" width="16.4" height="19.2" rx="1" fill="#1a363c"/><rect x="436.52" y="185.80" width="16.4" height="19.2" rx="1" fill="#1a363c"/><rect x="454.15" y="185.80" width="16.4" height="19.2" rx="1" fill="#1a363c"/><rect x="471.78" y="185.80" width="16.4" height="19.2" rx="1" fill="#16a6d2"/><rect x="489.41" y="185.80" width="16.4" height="19.2" rx="1" fill="#1a363c"/><rect x="508.39" y="185.80" width="16.4" height="19.2" rx="1" fill="#1a363c"/><rect x="526.02" y="185.80" width="16.4" height="19.2" rx="1" fill="#16a6d2"/><rect x="543.65" y="185.80" width="16.4" height="19.2" rx="1" fill="#16a6d2"/><rect x="561.28" y="185.80" width="16.4" height="19.2" rx="1" fill="#1a363c"/><rect x="5.30" y="185.80" width="51.66" height="19.2" rx="1" fill="#16a6d2"/><rect x="220.91" y="185.80" width="34.03" height="19.2" rx="1" fill="#16a6d2"/><rect x="292.78" y="185.80" width="34.03" height="19.2" rx="1" fill="#16a6d2"/><rect x="58.19" y="207.40" width="16.4" height="17.1" rx="1" fill="#1a363c"/><rect x="77.17" y="207.40" width="16.4" height="17.1" rx="1" fill="#265566"/><rect x="94.80" y="207.40" width="16.4" height="17.1" rx="1" fill="#1a363c"/><rect x="112.43" y="207.40" width="16.4" height="17.1" rx="1" fill="#1a363c"/><rect x="130.06" y="207.40" width="16.4" height="17.1" rx="1" fill="#1a363c"/><rect x="149.04" y="207.40" width="16.4" height="17.1" rx="1" fill="#1a363c"/><rect x="166.67" y="207.40" width="16.4" height="17.1" rx="1" fill="#1a363c"/><rect x="184.30" y="207.40" width="16.4" height="17.1" rx="1" fill="#16a6d2"/><rect x="201.93" y="207.40" width="16.4" height="17.1" rx="1" fill="#1a363c"/><rect x="256.17" y="207.40" width="16.4" height="17.1" rx="1" fill="#1a363c"/><rect x="273.80" y="207.40" width="16.4" height="17.1" rx="1" fill="#1a363c"/><rect x="328.04" y="207.40" width="16.4" height="17.1" rx="1" fill="#1a363c"/><rect x="345.67" y="207.40" width="16.4" height="17.1" rx="1" fill="#16a6d2"/><rect x="364.65" y="207.40" width="16.4" height="17.1" rx="1" fill="#1a363c"/><rect x="382.28" y="207.40" width="16.4" height="17.1" rx="1" fill="#265566"/><rect x="399.91" y="207.40" width="16.4" height="17.1" rx="1" fill="#1a363c"/><rect x="417.54" y="207.40" width="16.4" height="17.1" rx="1" fill="#1a363c"/><rect x="436.52" y="207.40" width="16.4" height="17.1" rx="1" fill="#1a363c"/><rect x="454.15" y="207.40" width="16.4" height="17.1" rx="1" fill="#1a363c"/><rect x="471.78" y="207.40" width="16.4" height="17.1" rx="1" fill="#16a6d2"/><rect x="489.41" y="207.40" width="16.4" height="17.1" rx="1" fill="#1a363c"/><rect x="508.39" y="207.40" width="16.4" height="17.1" rx="1" fill="#1a363c"/><rect x="526.02" y="207.40" width="16.4" height="17.1" rx="1" fill="#16a6d2"/><rect x="543.65" y="207.40" width="16.4" height="17.1" rx="1" fill="#265566"/><rect x="561.28" y="207.40" width="16.4" height="17.1" rx="1" fill="#1a363c"/><rect x="5.30" y="207.40" width="51.66" height="17.1" rx="1" fill="#265566"/><rect x="220.91" y="207.40" width="34.03" height="17.1" rx="1" fill="#16a6d2"/><rect x="292.78" y="207.40" width="34.03" height="17.1" rx="1" fill="#265566"/><rect x="6.80" y="208.40" width="0.5" height="15.10" fill="rgba(0,0,0,0.13)"/><rect x="8.80" y="208.40" width="0.5" height="15.10" fill="rgba(0,0,0,0.13)"/><rect x="10.80" y="208.40" width="0.5" height="15.10" fill="rgba(0,0,0,0.13)"/><rect x="12.80" y="208.40" width="0.5" height="15.10" fill="rgba(0,0,0,0.13)"/><rect x="14.80" y="208.40" width="0.5" height="15.10" fill="rgba(0,0,0,0.13)"/><rect x="16.80" y="208.40" width="0.5" height="15.10" fill="rgba(0,0,0,0.13)"/><rect x="18.80" y="208.40" width="0.5" height="15.10" fill="rgba(0,0,0,0.13)"/><rect x="24.43" y="208.40" width="0.5" height="15.10" fill="rgba(0,0,0,0.13)"/><rect x="26.43" y="208.40" width="0.5" height="15.10" fill="rgba(0,0,0,0.13)"/><rect x="28.43" y="208.40" width="0.5" height="15.10" fill="rgba(0,0,0,0.13)"/><rect x="30.43" y="208.40" width="0.5" height="15.10" fill="rgba(0,0,0,0.13)"/><rect x="32.43" y="208.40" width="0.5" height="15.10" fill="rgba(0,0,0,0.13)"/><rect x="34.43" y="208.40" width="0.5" height="15.10" fill="rgba(0,0,0,0.13)"/><rect x="36.43" y="208.40" width="0.5" height="15.10" fill="rgba(0,0,0,0.13)"/><rect x="42.06" y="208.40" width="0.5" height="15.10" fill="rgba(0,0,0,0.13)"/><rect x="44.06" y="208.40" width="0.5" height="15.10" fill="rgba(0,0,0,0.13)"/><rect x="46.06" y="208.40" width="0.5" height="15.10" fill="rgba(0,0,0,0.13)"/><rect x="48.06" y="208.40" width="0.5" height="15.10" fill="rgba(0,0,0,0.13)"/><rect x="50.06" y="208.40" width="0.5" height="15.10" fill="rgba(0,0,0,0.13)"/><rect x="52.06" y="208.40" width="0.5" height="15.10" fill="rgba(0,0,0,0.13)"/><rect x="54.06" y="208.40" width="0.5" height="15.10" fill="rgba(0,0,0,0.13)"/><rect x="59.69" y="208.40" width="0.5" height="15.10" fill="rgba(0,0,0,0.13)"/><rect x="61.69" y="208.40" width="0.5" height="15.10" fill="rgba(0,0,0,0.13)"/><rect x="63.69" y="208.40" width="0.5" height="15.10" fill="rgba(0,0,0,0.13)"/><rect x="65.69" y="208.40" width="0.5" height="15.10" fill="rgba(0,0,0,0.13)"/><rect x="67.69" y="208.40" width="0.5" height="15.10" fill="rgba(0,0,0,0.13)"/><rect x="69.69" y="208.40" width="0.5" height="15.10" fill="rgba(0,0,0,0.13)"/><rect x="71.69" y="208.40" width="0.5" height="15.10" fill="rgba(0,0,0,0.13)"/><rect x="78.67" y="208.40" width="0.5" height="15.10" fill="rgba(0,0,0,0.13)"/><rect x="80.67" y="208.40" width="0.5" height="15.10" fill="rgba(0,0,0,0.13)"/><rect x="82.67" y="208.40" width="0.5" height="15.10" fill="rgba(0,0,0,0.13)"/><rect x="84.67" y="208.40" width="0.5" height="15.10" fill="rgba(0,0,0,0.13)"/><rect x="86.67" y="208.40" width="0.5" height="15.10" fill="rgba(0,0,0,0.13)"/><rect x="88.67" y="208.40" width="0.5" height="15.10" fill="rgba(0,0,0,0.13)"/><rect x="90.67" y="208.40" width="0.5" height="15.10" fill="rgba(0,0,0,0.13)"/><rect x="96.30" y="208.40" width="0.5" height="15.10" fill="rgba(0,0,0,0.13)"/><rect x="98.30" y="208.40" width="0.5" height="15.10" fill="rgba(0,0,0,0.13)"/><rect x="100.30" y="208.40" width="0.5" height="15.10" fill="rgba(0,0,0,0.13)"/><rect x="102.30" y="208.40" width="0.5" height="15.10" fill="rgba(0,0,0,0.13)"/><rect x="104.30" y="208.40" width="0.5" height="15.10" fill="rgba(0,0,0,0.13)"/><rect x="106.30" y="208.40" width="0.5" height="15.10" fill="rgba(0,0,0,0.13)"/><rect x="108.30" y="208.40" width="0.5" height="15.10" fill="rgba(0,0,0,0.13)"/><rect x="113.93" y="208.40" width="0.5" height="15.10" fill="rgba(0,0,0,0.13)"/><rect x="115.93" y="208.40" width="0.5" height="15.10" fill="rgba(0,0,0,0.13)"/><rect x="117.93" y="208.40" width="0.5" height="15.10" fill="rgba(0,0,0,0.13)"/><rect x="119.93" y="208.40" width="0.5" height="15.10" fill="rgba(0,0,0,0.13)"/><rect x="121.93" y="208.40" width="0.5" height="15.10" fill="rgba(0,0,0,0.13)"/><rect x="123.93" y="208.40" width="0.5" height="15.10" fill="rgba(0,0,0,0.13)"/><rect x="125.93" y="208.40" width="0.5" height="15.10" fill="rgba(0,0,0,0.13)"/><rect x="131.56" y="208.40" width="0.5" height="15.10" fill="rgba(0,0,0,0.13)"/><rect x="133.56" y="208.40" width="0.5" height="15.10" fill="rgba(0,0,0,0.13)"/><rect x="135.56" y="208.40" width="0.5" height="15.10" fill="rgba(0,0,0,0.13)"/><rect x="137.56" y="208.40" width="0.5" height="15.10" fill="rgba(0,0,0,0.13)"/><rect x="139.56" y="208.40" width="0.5" height="15.10" fill="rgba(0,0,0,0.13)"/><rect x="141.56" y="208.40" width="0.5" height="15.10" fill="rgba(0,0,0,0.13)"/><rect x="143.56" y="208.40" width="0.5" height="15.10" fill="rgba(0,0,0,0.13)"/><rect x="150.54" y="208.40" width="0.5" height="15.10" fill="rgba(0,0,0,0.13)"/><rect x="152.54" y="208.40" width="0.5" height="15.10" fill="rgba(0,0,0,0.13)"/><rect x="154.54" y="208.40" width="0.5" height="15.10" fill="rgba(0,0,0,0.13)"/><rect x="156.54" y="208.40" width="0.5" height="15.10" fill="rgba(0,0,0,0.13)"/><rect x="158.54" y="208.40" width="0.5" height="15.10" fill="rgba(0,0,0,0.13)"/><rect x="160.54" y="208.40" width="0.5" height="15.10" fill="rgba(0,0,0,0.13)"/><rect x="162.54" y="208.40" width="0.5" height="15.10" fill="rgba(0,0,0,0.13)"/><rect x="168.17" y="208.40" width="0.5" height="15.10" fill="rgba(0,0,0,0.13)"/><rect x="170.17" y="208.40" width="0.5" height="15.10" fill="rgba(0,0,0,0.13)"/><rect x="172.17" y="208.40" width="0.5" height="15.10" fill="rgba(0,0,0,0.13)"/><rect x="174.17" y="208.40" width="0.5" height="15.10" fill="rgba(0,0,0,0.13)"/><rect x="176.17" y="208.40" width="0.5" height="15.10" fill="rgba(0,0,0,0.13)"/><rect x="178.17" y="208.40" width="0.5" height="15.10" fill="rgba(0,0,0,0.13)"/><rect x="180.17" y="208.40" width="0.5" height="15.10" fill="rgba(0,0,0,0.13)"/><rect x="185.80" y="208.40" width="0.5" height="15.10" fill="rgba(0,0,0,0.13)"/><rect x="187.80" y="208.40" width="0.5" height="15.10" fill="rgba(0,0,0,0.13)"/><rect x="189.80" y="208.40" width="0.5" height="15.10" fill="rgba(0,0,0,0.13)"/><rect x="191.80" y="208.40" width="0.5" height="15.10" fill="rgba(0,0,0,0.13)"/><rect x="193.80" y="208.40" width="0.5" height="15.10" fill="rgba(0,0,0,0.13)"/><rect x="195.80" y="208.40" width="0.5" height="15.10" fill="rgba(0,0,0,0.13)"/><rect x="197.80" y="208.40" width="0.5" height="15.10" fill="rgba(0,0,0,0.13)"/><rect x="203.43" y="208.40" width="0.5" height="15.10" fill="rgba(0,0,0,0.13)"/><rect x="205.43" y="208.40" width="0.5" height="15.10" fill="rgba(0,0,0,0.13)"/><rect x="207.43" y="208.40" width="0.5" height="15.10" fill="rgba(0,0,0,0.13)"/><rect x="209.43" y="208.40" width="0.5" height="15.10" fill="rgba(0,0,0,0.13)"/><rect x="211.43" y="208.40" width="0.5" height="15.10" fill="rgba(0,0,0,0.13)"/><rect x="213.43" y="208.40" width="0.5" height="15.10" fill="rgba(0,0,0,0.13)"/><rect x="215.43" y="208.40" width="0.5" height="15.10" fill="rgba(0,0,0,0.13)"/><rect x="222.41" y="208.40" width="0.5" height="15.10" fill="rgba(0,0,0,0.13)"/><rect x="224.41" y="208.40" width="0.5" height="15.10" fill="rgba(0,0,0,0.13)"/><rect x="226.41" y="208.40" width="0.5" height="15.10" fill="rgba(0,0,0,0.13)"/><rect x="228.41" y="208.40" width="0.5" height="15.10" fill="rgba(0,0,0,0.13)"/><rect x="230.41" y="208.40" width="0.5" height="15.10" fill="rgba(0,0,0,0.13)"/><rect x="232.41" y="208.40" width="0.5" height="15.10" fill="rgba(0,0,0,0.13)"/><rect x="234.41" y="208.40" width="0.5" height="15.10" fill="rgba(0,0,0,0.13)"/><rect x="240.04" y="208.40" width="0.5" height="15.10" fill="rgba(0,0,0,0.13)"/><rect x="242.04" y="208.40" width="0.5" height="15.10" fill="rgba(0,0,0,0.13)"/><rect x="244.04" y="208.40" width="0.5" height="15.10" fill="rgba(0,0,0,0.13)"/><rect x="246.04" y="208.40" width="0.5" height="15.10" fill="rgba(0,0,0,0.13)"/><rect x="248.04" y="208.40" width="0.5" height="15.10" fill="rgba(0,0,0,0.13)"/><rect x="250.04" y="208.40" width="0.5" height="15.10" fill="rgba(0,0,0,0.13)"/><rect x="252.04" y="208.40" width="0.5" height="15.10" fill="rgba(0,0,0,0.13)"/><rect x="257.67" y="208.40" width="0.5" height="15.10" fill="rgba(0,0,0,0.13)"/><rect x="259.67" y="208.40" width="0.5" height="15.10" fill="rgba(0,0,0,0.13)"/><rect x="261.67" y="208.40" width="0.5" height="15.10" fill="rgba(0,0,0,0.13)"/><rect x="263.67" y="208.40" width="0.5" height="15.10" fill="rgba(0,0,0,0.13)"/><rect x="265.67" y="208.40" width="0.5" height="15.10" fill="rgba(0,0,0,0.13)"/><rect x="267.67" y="208.40" width="0.5" height="15.10" fill="rgba(0,0,0,0.13)"/><rect x="269.67" y="208.40" width="0.5" height="15.10" fill="rgba(0,0,0,0.13)"/><rect x="275.30" y="208.40" width="0.5" height="15.10" fill="rgba(0,0,0,0.13)"/><rect x="277.30" y="208.40" width="0.5" height="15.10" fill="rgba(0,0,0,0.13)"/><rect x="279.30" y="208.40" width="0.5" height="15.10" fill="rgba(0,0,0,0.13)"/><rect x="281.30" y="208.40" width="0.5" height="15.10" fill="rgba(0,0,0,0.13)"/><rect x="283.30" y="208.40" width="0.5" height="15.10" fill="rgba(0,0,0,0.13)"/><rect x="285.30" y="208.40" width="0.5" height="15.10" fill="rgba(0,0,0,0.13)"/><rect x="287.30" y="208.40" width="0.5" height="15.10" fill="rgba(0,0,0,0.13)"/><rect x="294.28" y="208.40" width="0.5" height="15.10" fill="rgba(0,0,0,0.13)"/><rect x="296.28" y="208.40" width="0.5" height="15.10" fill="rgba(0,0,0,0.13)"/><rect x="298.28" y="208.40" width="0.5" height="15.10" fill="rgba(0,0,0,0.13)"/><rect x="300.28" y="208.40" width="0.5" height="15.10" fill="rgba(0,0,0,0.13)"/><rect x="302.28" y="208.40" width="0.5" height="15.10" fill="rgba(0,0,0,0.13)"/><rect x="304.28" y="208.40" width="0.5" height="15.10" fill="rgba(0,0,0,0.13)"/><rect x="306.28" y="208.40" width="0.5" height="15.10" fill="rgba(0,0,0,0.13)"/><rect x="311.91" y="208.40" width="0.5" height="15.10" fill="rgba(0,0,0,0.13)"/><rect x="313.91" y="208.40" width="0.5" height="15.10" fill="rgba(0,0,0,0.13)"/><rect x="315.91" y="208.40" width="0.5" height="15.10" fill="rgba(0,0,0,0.13)"/><rect x="317.91" y="208.40" width="0.5" height="15.10" fill="rgba(0,0,0,0.13)"/><rect x="319.91" y="208.40" width="0.5" height="15.10" fill="rgba(0,0,0,0.13)"/><rect x="321.91" y="208.40" width="0.5" height="15.10" fill="rgba(0,0,0,0.13)"/><rect x="323.91" y="208.40" width="0.5" height="15.10" fill="rgba(0,0,0,0.13)"/><rect x="329.54" y="208.40" width="0.5" height="15.10" fill="rgba(0,0,0,0.13)"/><rect x="331.54" y="208.40" width="0.5" height="15.10" fill="rgba(0,0,0,0.13)"/><rect x="333.54" y="208.40" width="0.5" height="15.10" fill="rgba(0,0,0,0.13)"/><rect x="335.54" y="208.40" width="0.5" height="15.10" fill="rgba(0,0,0,0.13)"/><rect x="337.54" y="208.40" width="0.5" height="15.10" fill="rgba(0,0,0,0.13)"/><rect x="339.54" y="208.40" width="0.5" height="15.10" fill="rgba(0,0,0,0.13)"/><rect x="341.54" y="208.40" width="0.5" height="15.10" fill="rgba(0,0,0,0.13)"/><rect x="347.17" y="208.40" width="0.5" height="15.10" fill="rgba(0,0,0,0.13)"/><rect x="349.17" y="208.40" width="0.5" height="15.10" fill="rgba(0,0,0,0.13)"/><rect x="351.17" y="208.40" width="0.5" height="15.10" fill="rgba(0,0,0,0.13)"/><rect x="353.17" y="208.40" width="0.5" height="15.10" fill="rgba(0,0,0,0.13)"/><rect x="355.17" y="208.40" width="0.5" height="15.10" fill="rgba(0,0,0,0.13)"/><rect x="357.17" y="208.40" width="0.5" height="15.10" fill="rgba(0,0,0,0.13)"/><rect x="359.17" y="208.40" width="0.5" height="15.10" fill="rgba(0,0,0,0.13)"/><rect x="366.15" y="208.40" width="0.5" height="15.10" fill="rgba(0,0,0,0.13)"/><rect x="368.15" y="208.40" width="0.5" height="15.10" fill="rgba(0,0,0,0.13)"/><rect x="370.15" y="208.40" width="0.5" height="15.10" fill="rgba(0,0,0,0.13)"/><rect x="372.15" y="208.40" width="0.5" height="15.10" fill="rgba(0,0,0,0.13)"/><rect x="374.15" y="208.40" width="0.5" height="15.10" fill="rgba(0,0,0,0.13)"/><rect x="376.15" y="208.40" width="0.5" height="15.10" fill="rgba(0,0,0,0.13)"/><rect x="378.15" y="208.40" width="0.5" height="15.10" fill="rgba(0,0,0,0.13)"/><rect x="383.78" y="208.40" width="0.5" height="15.10" fill="rgba(0,0,0,0.13)"/><rect x="385.78" y="208.40" width="0.5" height="15.10" fill="rgba(0,0,0,0.13)"/><rect x="387.78" y="208.40" width="0.5" height="15.10" fill="rgba(0,0,0,0.13)"/><rect x="389.78" y="208.40" width="0.5" height="15.10" fill="rgba(0,0,0,0.13)"/><rect x="391.78" y="208.40" width="0.5" height="15.10" fill="rgba(0,0,0,0.13)"/><rect x="393.78" y="208.40" width="0.5" height="15.10" fill="rgba(0,0,0,0.13)"/><rect x="395.78" y="208.40" width="0.5" height="15.10" fill="rgba(0,0,0,0.13)"/><rect x="401.41" y="208.40" width="0.5" height="15.10" fill="rgba(0,0,0,0.13)"/><rect x="403.41" y="208.40" width="0.5" height="15.10" fill="rgba(0,0,0,0.13)"/><rect x="405.41" y="208.40" width="0.5" height="15.10" fill="rgba(0,0,0,0.13)"/><rect x="407.41" y="208.40" width="0.5" height="15.10" fill="rgba(0,0,0,0.13)"/><rect x="409.41" y="208.40" width="0.5" height="15.10" fill="rgba(0,0,0,0.13)"/><rect x="411.41" y="208.40" width="0.5" height="15.10" fill="rgba(0,0,0,0.13)"/><rect x="413.41" y="208.40" width="0.5" height="15.10" fill="rgba(0,0,0,0.13)"/><rect x="419.04" y="208.40" width="0.5" height="15.10" fill="rgba(0,0,0,0.13)"/><rect x="421.04" y="208.40" width="0.5" height="15.10" fill="rgba(0,0,0,0.13)"/><rect x="423.04" y="208.40" width="0.5" height="15.10" fill="rgba(0,0,0,0.13)"/><rect x="425.04" y="208.40" width="0.5" height="15.10" fill="rgba(0,0,0,0.13)"/><rect x="427.04" y="208.40" width="0.5" height="15.10" fill="rgba(0,0,0,0.13)"/><rect x="429.04" y="208.40" width="0.5" height="15.10" fill="rgba(0,0,0,0.13)"/><rect x="431.04" y="208.40" width="0.5" height="15.10" fill="rgba(0,0,0,0.13)"/><rect x="438.02" y="208.40" width="0.5" height="15.10" fill="rgba(0,0,0,0.13)"/><rect x="440.02" y="208.40" width="0.5" height="15.10" fill="rgba(0,0,0,0.13)"/><rect x="442.02" y="208.40" width="0.5" height="15.10" fill="rgba(0,0,0,0.13)"/><rect x="444.02" y="208.40" width="0.5" height="15.10" fill="rgba(0,0,0,0.13)"/><rect x="446.02" y="208.40" width="0.5" height="15.10" fill="rgba(0,0,0,0.13)"/><rect x="448.02" y="208.40" width="0.5" height="15.10" fill="rgba(0,0,0,0.13)"/><rect x="450.02" y="208.40" width="0.5" height="15.10" fill="rgba(0,0,0,0.13)"/><rect x="455.65" y="208.40" width="0.5" height="15.10" fill="rgba(0,0,0,0.13)"/><rect x="457.65" y="208.40" width="0.5" height="15.10" fill="rgba(0,0,0,0.13)"/><rect x="459.65" y="208.40" width="0.5" height="15.10" fill="rgba(0,0,0,0.13)"/><rect x="461.65" y="208.40" width="0.5" height="15.10" fill="rgba(0,0,0,0.13)"/><rect x="463.65" y="208.40" width="0.5" height="15.10" fill="rgba(0,0,0,0.13)"/><rect x="465.65" y="208.40" width="0.5" height="15.10" fill="rgba(0,0,0,0.13)"/><rect x="467.65" y="208.40" width="0.5" height="15.10" fill="rgba(0,0,0,0.13)"/><rect x="473.28" y="208.40" width="0.5" height="15.10" fill="rgba(0,0,0,0.13)"/><rect x="475.28" y="208.40" width="0.5" height="15.10" fill="rgba(0,0,0,0.13)"/><rect x="477.28" y="208.40" width="0.5" height="15.10" fill="rgba(0,0,0,0.13)"/><rect x="479.28" y="208.40" width="0.5" height="15.10" fill="rgba(0,0,0,0.13)"/><rect x="481.28" y="208.40" width="0.5" height="15.10" fill="rgba(0,0,0,0.13)"/><rect x="483.28" y="208.40" width="0.5" height="15.10" fill="rgba(0,0,0,0.13)"/><rect x="485.28" y="208.40" width="0.5" height="15.10" fill="rgba(0,0,0,0.13)"/><rect x="490.91" y="208.40" width="0.5" height="15.10" fill="rgba(0,0,0,0.13)"/><rect x="492.91" y="208.40" width="0.5" height="15.10" fill="rgba(0,0,0,0.13)"/><rect x="494.91" y="208.40" width="0.5" height="15.10" fill="rgba(0,0,0,0.13)"/><rect x="496.91" y="208.40" width="0.5" height="15.10" fill="rgba(0,0,0,0.13)"/><rect x="498.91" y="208.40" width="0.5" height="15.10" fill="rgba(0,0,0,0.13)"/><rect x="500.91" y="208.40" width="0.5" height="15.10" fill="rgba(0,0,0,0.13)"/><rect x="502.91" y="208.40" width="0.5" height="15.10" fill="rgba(0,0,0,0.13)"/><rect x="509.89" y="208.40" width="0.5" height="15.10" fill="rgba(0,0,0,0.13)"/><rect x="511.89" y="208.40" width="0.5" height="15.10" fill="rgba(0,0,0,0.13)"/><rect x="513.89" y="208.40" width="0.5" height="15.10" fill="rgba(0,0,0,0.13)"/><rect x="515.89" y="208.40" width="0.5" height="15.10" fill="rgba(0,0,0,0.13)"/><rect x="517.89" y="208.40" width="0.5" height="15.10" fill="rgba(0,0,0,0.13)"/><rect x="519.89" y="208.40" width="0.5" height="15.10" fill="rgba(0,0,0,0.13)"/><rect x="521.89" y="208.40" width="0.5" height="15.10" fill="rgba(0,0,0,0.13)"/><rect x="527.52" y="208.40" width="0.5" height="15.10" fill="rgba(0,0,0,0.13)"/><rect x="529.52" y="208.40" width="0.5" height="15.10" fill="rgba(0,0,0,0.13)"/><rect x="531.52" y="208.40" width="0.5" height="15.10" fill="rgba(0,0,0,0.13)"/><rect x="533.52" y="208.40" width="0.5" height="15.10" fill="rgba(0,0,0,0.13)"/><rect x="535.52" y="208.40" width="0.5" height="15.10" fill="rgba(0,0,0,0.13)"/><rect x="537.52" y="208.40" width="0.5" height="15.10" fill="rgba(0,0,0,0.13)"/><rect x="539.52" y="208.40" width="0.5" height="15.10" fill="rgba(0,0,0,0.13)"/><rect x="545.15" y="208.40" width="0.5" height="15.10" fill="rgba(0,0,0,0.13)"/><rect x="547.15" y="208.40" width="0.5" height="15.10" fill="rgba(0,0,0,0.13)"/><rect x="549.15" y="208.40" width="0.5" height="15.10" fill="rgba(0,0,0,0.13)"/><rect x="551.15" y="208.40" width="0.5" height="15.10" fill="rgba(0,0,0,0.13)"/><rect x="553.15" y="208.40" width="0.5" height="15.10" fill="rgba(0,0,0,0.13)"/><rect x="555.15" y="208.40" width="0.5" height="15.10" fill="rgba(0,0,0,0.13)"/><rect x="557.15" y="208.40" width="0.5" height="15.10" fill="rgba(0,0,0,0.13)"/><rect x="562.78" y="208.40" width="0.5" height="15.10" fill="rgba(0,0,0,0.13)"/><rect x="564.78" y="208.40" width="0.5" height="15.10" fill="rgba(0,0,0,0.13)"/><rect x="566.78" y="208.40" width="0.5" height="15.10" fill="rgba(0,0,0,0.13)"/><rect x="568.78" y="208.40" width="0.5" height="15.10" fill="rgba(0,0,0,0.13)"/><rect x="570.78" y="208.40" width="0.5" height="15.10" fill="rgba(0,0,0,0.13)"/><rect x="572.78" y="208.40" width="0.5" height="15.10" fill="rgba(0,0,0,0.13)"/><rect x="574.78" y="208.40" width="0.5" height="15.10" fill="rgba(0,0,0,0.13)"/><rect x="14.30" y="211.40" width="0.6" height="9.10" fill="rgba(60,190,230,0.8)"/><rect x="15.60" y="211.40" width="0.6" height="9.10" fill="rgba(60,190,230,0.8)"/><rect x="16.90" y="211.40" width="0.6" height="9.10" fill="rgba(60,190,230,0.8)"/><rect x="18.20" y="211.40" width="0.6" height="9.10" fill="rgba(60,190,230,0.8)"/><rect x="19.50" y="211.40" width="0.6" height="9.10" fill="rgba(60,190,230,0.8)"/><rect x="20.80" y="211.40" width="0.6" height="9.10" fill="rgba(60,190,230,0.8)"/><rect x="22.10" y="211.40" width="0.6" height="9.10" fill="rgba(60,190,230,0.8)"/><rect x="23.40" y="211.40" width="0.6" height="9.10" fill="rgba(60,190,230,0.8)"/><rect x="24.70" y="211.40" width="0.6" height="9.10" fill="rgba(60,190,230,0.8)"/><rect x="26.00" y="211.40" width="0.6" height="9.10" fill="rgba(60,190,230,0.8)"/><rect x="27.30" y="211.40" width="0.6" height="9.10" fill="rgba(60,190,230,0.8)"/><rect x="28.60" y="211.40" width="0.6" height="9.10" fill="rgba(60,190,230,0.8)"/><rect x="29.90" y="211.40" width="0.6" height="9.10" fill="rgba(60,190,230,0.8)"/><rect x="31.20" y="211.40" width="0.6" height="9.10" fill="rgba(60,190,230,0.8)"/><rect x="32.50" y="211.40" width="0.6" height="9.10" fill="rgba(60,190,230,0.8)"/><rect x="33.80" y="211.40" width="0.6" height="9.10" fill="rgba(60,190,230,0.8)"/><rect x="35.10" y="211.40" width="0.6" height="9.10" fill="rgba(60,190,230,0.8)"/><rect x="36.40" y="211.40" width="0.6" height="9.10" fill="rgba(60,190,230,0.8)"/><rect x="37.70" y="211.40" width="0.6" height="9.10" fill="rgba(60,190,230,0.8)"/><rect x="39.00" y="211.40" width="0.6" height="9.10" fill="rgba(60,190,230,0.8)"/><rect x="40.30" y="211.40" width="0.6" height="9.10" fill="rgba(60,190,230,0.8)"/><rect x="41.60" y="211.40" width="0.6" height="9.10" fill="rgba(60,190,230,0.8)"/><rect x="42.90" y="211.40" width="0.6" height="9.10" fill="rgba(60,190,230,0.8)"/><rect x="44.20" y="211.40" width="0.6" height="9.10" fill="rgba(60,190,230,0.8)"/><rect x="45.50" y="211.40" width="0.6" height="9.10" fill="rgba(60,190,230,0.8)"/><rect x="80.17" y="211.40" width="0.6" height="9.10" fill="rgba(60,190,230,0.8)"/><rect x="81.47" y="211.40" width="0.6" height="9.10" fill="rgba(60,190,230,0.8)"/><rect x="82.77" y="211.40" width="0.6" height="9.10" fill="rgba(60,190,230,0.8)"/><rect x="84.07" y="211.40" width="0.6" height="9.10" fill="rgba(60,190,230,0.8)"/><rect x="85.37" y="211.40" width="0.6" height="9.10" fill="rgba(60,190,230,0.8)"/><rect x="86.67" y="211.40" width="0.6" height="9.10" fill="rgba(60,190,230,0.8)"/><rect x="87.97" y="211.40" width="0.6" height="9.10" fill="rgba(60,190,230,0.8)"/><rect x="89.27" y="211.40" width="0.6" height="9.10" fill="rgba(60,190,230,0.8)"/><rect x="300.78" y="211.40" width="0.6" height="9.10" fill="rgba(60,190,230,0.8)"/><rect x="302.08" y="211.40" width="0.6" height="9.10" fill="rgba(60,190,230,0.8)"/><rect x="303.38" y="211.40" width="0.6" height="9.10" fill="rgba(60,190,230,0.8)"/><rect x="304.68" y="211.40" width="0.6" height="9.10" fill="rgba(60,190,230,0.8)"/><rect x="305.98" y="211.40" width="0.6" height="9.10" fill="rgba(60,190,230,0.8)"/><rect x="307.28" y="211.40" width="0.6" height="9.10" fill="rgba(60,190,230,0.8)"/><rect x="308.58" y="211.40" width="0.6" height="9.10" fill="rgba(60,190,230,0.8)"/><rect x="309.88" y="211.40" width="0.6" height="9.10" fill="rgba(60,190,230,0.8)"/><rect x="311.18" y="211.40" width="0.6" height="9.10" fill="rgba(60,190,230,0.8)"/><rect x="312.48" y="211.40" width="0.6" height="9.10" fill="rgba(60,190,230,0.8)"/><rect x="313.78" y="211.40" width="0.6" height="9.10" fill="rgba(60,190,230,0.8)"/><rect x="315.08" y="211.40" width="0.6" height="9.10" fill="rgba(60,190,230,0.8)"/><rect x="316.38" y="211.40" width="0.6" height="9.10" fill="rgba(60,190,230,0.8)"/><rect x="546.65" y="211.40" width="0.6" height="9.10" fill="rgba(60,190,230,0.8)"/><rect x="547.95" y="211.40" width="0.6" height="9.10" fill="rgba(60,190,230,0.8)"/><rect x="549.25" y="211.40" width="0.6" height="9.10" fill="rgba(60,190,230,0.8)"/><rect x="550.55" y="211.40" width="0.6" height="9.10" fill="rgba(60,190,230,0.8)"/><rect x="551.85" y="211.40" width="0.6" height="9.10" fill="rgba(60,190,230,0.8)"/><rect x="553.15" y="211.40" width="0.6" height="9.10" fill="rgba(60,190,230,0.8)"/><rect x="554.45" y="211.40" width="0.6" height="9.10" fill="rgba(60,190,230,0.8)"/><rect x="100.80" y="212.90" width="0.6" height="6.10" fill="rgba(60,190,230,0.85)"/><rect x="102.00" y="212.90" width="0.6" height="6.10" fill="rgba(60,190,230,0.85)"/><rect x="103.20" y="212.90" width="0.6" height="6.10" fill="rgba(60,190,230,0.85)"/><rect x="104.40" y="212.90" width="0.6" height="6.10" fill="rgba(60,190,230,0.85)"/><rect x="155.04" y="212.90" width="0.6" height="6.10" fill="rgba(60,190,230,0.85)"/><rect x="156.24" y="212.90" width="0.6" height="6.10" fill="rgba(60,190,230,0.85)"/><rect x="157.44" y="212.90" width="0.6" height="6.10" fill="rgba(60,190,230,0.85)"/><rect x="370.65" y="212.90" width="0.6" height="6.10" fill="rgba(60,190,230,0.85)"/><rect x="371.85" y="212.90" width="0.6" height="6.10" fill="rgba(60,190,230,0.85)"/><rect x="373.05" y="212.90" width="0.6" height="6.10" fill="rgba(60,190,230,0.85)"/><rect x="374.25" y="212.90" width="0.6" height="6.10" fill="rgba(60,190,230,0.85)"/><rect x="386.28" y="212.90" width="0.6" height="6.10" fill="rgba(60,190,230,0.85)"/><rect x="387.48" y="212.90" width="0.6" height="6.10" fill="rgba(60,190,230,0.85)"/><rect x="388.68" y="212.90" width="0.6" height="6.10" fill="rgba(60,190,230,0.85)"/><rect x="389.88" y="212.90" width="0.6" height="6.10" fill="rgba(60,190,230,0.85)"/><rect x="391.08" y="212.90" width="0.6" height="6.10" fill="rgba(60,190,230,0.85)"/><rect x="392.28" y="212.90" width="0.6" height="6.10" fill="rgba(60,190,230,0.85)"/><rect x="393.48" y="212.90" width="0.6" height="6.10" fill="rgba(60,190,230,0.85)"/><rect x="394.68" y="212.90" width="0.6" height="6.10" fill="rgba(60,190,230,0.85)"/><rect x="185.30" y="207.90" width="0.5" height="16.10" fill="rgba(0,60,90,0.18)"/><rect x="186.80" y="207.90" width="0.5" height="16.10" fill="rgba(0,60,90,0.18)"/><rect x="188.30" y="207.90" width="0.5" height="16.10" fill="rgba(0,60,90,0.18)"/><rect x="189.80" y="207.90" width="0.5" height="16.10" fill="rgba(0,60,90,0.18)"/><rect x="191.30" y="207.90" width="0.5" height="16.10" fill="rgba(0,60,90,0.18)"/><rect x="192.80" y="207.90" width="0.5" height="16.10" fill="rgba(0,60,90,0.18)"/><rect x="194.30" y="207.90" width="0.5" height="16.10" fill="rgba(0,60,90,0.18)"/><rect x="195.80" y="207.90" width="0.5" height="16.10" fill="rgba(0,60,90,0.18)"/><rect x="197.30" y="207.90" width="0.5" height="16.10" fill="rgba(0,60,90,0.18)"/><rect x="198.80" y="207.90" width="0.5" height="16.10" fill="rgba(0,60,90,0.18)"/><rect x="346.67" y="207.90" width="0.5" height="16.10" fill="rgba(0,60,90,0.18)"/><rect x="348.17" y="207.90" width="0.5" height="16.10" fill="rgba(0,60,90,0.18)"/><rect x="349.67" y="207.90" width="0.5" height="16.10" fill="rgba(0,60,90,0.18)"/><rect x="351.17" y="207.90" width="0.5" height="16.10" fill="rgba(0,60,90,0.18)"/><rect x="352.67" y="207.90" width="0.5" height="16.10" fill="rgba(0,60,90,0.18)"/><rect x="354.17" y="207.90" width="0.5" height="16.10" fill="rgba(0,60,90,0.18)"/><rect x="355.67" y="207.90" width="0.5" height="16.10" fill="rgba(0,60,90,0.18)"/><rect x="357.17" y="207.90" width="0.5" height="16.10" fill="rgba(0,60,90,0.18)"/><rect x="358.67" y="207.90" width="0.5" height="16.10" fill="rgba(0,60,90,0.18)"/><rect x="360.17" y="207.90" width="0.5" height="16.10" fill="rgba(0,60,90,0.18)"/><rect x="472.78" y="207.90" width="0.5" height="16.10" fill="rgba(0,60,90,0.18)"/><rect x="474.28" y="207.90" width="0.5" height="16.10" fill="rgba(0,60,90,0.18)"/><rect x="475.78" y="207.90" width="0.5" height="16.10" fill="rgba(0,60,90,0.18)"/><rect x="477.28" y="207.90" width="0.5" height="16.10" fill="rgba(0,60,90,0.18)"/><rect x="478.78" y="207.90" width="0.5" height="16.10" fill="rgba(0,60,90,0.18)"/><rect x="480.28" y="207.90" width="0.5" height="16.10" fill="rgba(0,60,90,0.18)"/><rect x="481.78" y="207.90" width="0.5" height="16.10" fill="rgba(0,60,90,0.18)"/><rect x="483.28" y="207.90" width="0.5" height="16.10" fill="rgba(0,60,90,0.18)"/><rect x="484.78" y="207.90" width="0.5" height="16.10" fill="rgba(0,60,90,0.18)"/><rect x="486.28" y="207.90" width="0.5" height="16.10" fill="rgba(0,60,90,0.18)"/><rect x="527.02" y="207.90" width="0.5" height="16.10" fill="rgba(0,60,90,0.18)"/><rect x="528.52" y="207.90" width="0.5" height="16.10" fill="rgba(0,60,90,0.18)"/><rect x="530.02" y="207.90" width="0.5" height="16.10" fill="rgba(0,60,90,0.18)"/><rect x="531.52" y="207.90" width="0.5" height="16.10" fill="rgba(0,60,90,0.18)"/><rect x="533.02" y="207.90" width="0.5" height="16.10" fill="rgba(0,60,90,0.18)"/><rect x="534.52" y="207.90" width="0.5" height="16.10" fill="rgba(0,60,90,0.18)"/><rect x="536.02" y="207.90" width="0.5" height="16.10" fill="rgba(0,60,90,0.18)"/><rect x="537.52" y="207.90" width="0.5" height="16.10" fill="rgba(0,60,90,0.18)"/><rect x="539.02" y="207.90" width="0.5" height="16.10" fill="rgba(0,60,90,0.18)"/><rect x="540.52" y="207.90" width="0.5" height="16.10" fill="rgba(0,60,90,0.18)"/><rect x="221.91" y="207.90" width="0.5" height="16.10" fill="rgba(0,60,90,0.18)"/><rect x="223.41" y="207.90" width="0.5" height="16.10" fill="rgba(0,60,90,0.18)"/><rect x="224.91" y="207.90" width="0.5" height="16.10" fill="rgba(0,60,90,0.18)"/><rect x="226.41" y="207.90" width="0.5" height="16.10" fill="rgba(0,60,90,0.18)"/><rect x="227.91" y="207.90" width="0.5" height="16.10" fill="rgba(0,60,90,0.18)"/><rect x="229.41" y="207.90" width="0.5" height="16.10" fill="rgba(0,60,90,0.18)"/><rect x="230.91" y="207.90" width="0.5" height="16.10" fill="rgba(0,60,90,0.18)"/><rect x="232.41" y="207.90" width="0.5" height="16.10" fill="rgba(0,60,90,0.18)"/><rect x="233.91" y="207.90" width="0.5" height="16.10" fill="rgba(0,60,90,0.18)"/><rect x="235.41" y="207.90" width="0.5" height="16.10" fill="rgba(0,60,90,0.18)"/><rect x="239.54" y="207.90" width="0.5" height="16.10" fill="rgba(0,60,90,0.18)"/><rect x="241.04" y="207.90" width="0.5" height="16.10" fill="rgba(0,60,90,0.18)"/><rect x="242.54" y="207.90" width="0.5" height="16.10" fill="rgba(0,60,90,0.18)"/><rect x="244.04" y="207.90" width="0.5" height="16.10" fill="rgba(0,60,90,0.18)"/><rect x="245.54" y="207.90" width="0.5" height="16.10" fill="rgba(0,60,90,0.18)"/><rect x="247.04" y="207.90" width="0.5" height="16.10" fill="rgba(0,60,90,0.18)"/><rect x="248.54" y="207.90" width="0.5" height="16.10" fill="rgba(0,60,90,0.18)"/><rect x="250.04" y="207.90" width="0.5" height="16.10" fill="rgba(0,60,90,0.18)"/><rect x="251.54" y="207.90" width="0.5" height="16.10" fill="rgba(0,60,90,0.18)"/><rect x="253.04" y="207.90" width="0.5" height="16.10" fill="rgba(0,60,90,0.18)"/><rect x="5.30" y="188.00" width="17.75" height="1" fill="#7fd0e8"/><rect x="22.93" y="188.00" width="17.75" height="1" fill="#7fd0e8"/><rect x="40.56" y="188.00" width="16.40" height="1" fill="#7fd0e8"/><rect x="77.17" y="185.80" width="16.4" height="9.60" rx="1" fill="#2a7d98"/><rect x="77.17" y="195.40" width="16.4" height="1" fill="#8ad8ee"/><rect x="78.17" y="196.40" width="0.5" height="8.10" fill="rgba(0,70,100,0.35)"/><rect x="79.97" y="196.40" width="0.5" height="8.10" fill="rgba(0,70,100,0.35)"/><rect x="81.77" y="196.40" width="0.5" height="8.10" fill="rgba(0,70,100,0.35)"/><rect x="83.57" y="196.40" width="0.5" height="8.10" fill="rgba(0,70,100,0.35)"/><rect x="85.37" y="196.40" width="0.5" height="8.10" fill="rgba(0,70,100,0.35)"/><rect x="87.17" y="196.40" width="0.5" height="8.10" fill="rgba(0,70,100,0.35)"/><rect x="88.97" y="196.40" width="0.5" height="8.10" fill="rgba(0,70,100,0.35)"/><rect x="90.77" y="196.40" width="0.5" height="8.10" fill="rgba(0,70,100,0.35)"/><rect x="92.57" y="196.40" width="0.5" height="8.10" fill="rgba(0,70,100,0.35)"/><rect x="94.80" y="188.00" width="16.40" height="1" fill="#7fd0e8"/><rect x="95.80" y="189.30" width="0.5" height="14.70" fill="rgba(0,70,100,0.35)"/><rect x="97.60" y="189.30" width="0.5" height="14.70" fill="rgba(0,70,100,0.35)"/><rect x="99.40" y="189.30" width="0.5" height="14.70" fill="rgba(0,70,100,0.35)"/><rect x="101.20" y="189.30" width="0.5" height="14.70" fill="rgba(0,70,100,0.35)"/><rect x="103.00" y="189.30" width="0.5" height="14.70" fill="rgba(0,70,100,0.35)"/><rect x="104.80" y="189.30" width="0.5" height="14.70" fill="rgba(0,70,100,0.35)"/><rect x="106.60" y="189.30" width="0.5" height="14.70" fill="rgba(0,70,100,0.35)"/><rect x="108.40" y="189.30" width="0.5" height="14.70" fill="rgba(0,70,100,0.35)"/><rect x="110.20" y="189.30" width="0.5" height="14.70" fill="rgba(0,70,100,0.35)"/><rect x="149.04" y="188.00" width="16.40" height="1" fill="#7fd0e8"/><rect x="184.30" y="188.00" width="16.40" height="1" fill="#7fd0e8"/><rect x="220.91" y="188.00" width="17.75" height="1" fill="#7fd0e8"/><rect x="238.54" y="188.00" width="16.40" height="1" fill="#7fd0e8"/><rect x="292.78" y="188.00" width="17.75" height="1" fill="#7fd0e8"/><rect x="310.41" y="188.00" width="16.40" height="1" fill="#7fd0e8"/><rect x="345.67" y="185.80" width="16.4" height="9.60" rx="1" fill="#2a7d98"/><rect x="345.67" y="195.40" width="16.4" height="1" fill="#8ad8ee"/><rect x="346.67" y="196.40" width="0.5" height="8.10" fill="rgba(0,70,100,0.35)"/><rect x="348.47" y="196.40" width="0.5" height="8.10" fill="rgba(0,70,100,0.35)"/><rect x="350.27" y="196.40" width="0.5" height="8.10" fill="rgba(0,70,100,0.35)"/><rect x="352.07" y="196.40" width="0.5" height="8.10" fill="rgba(0,70,100,0.35)"/><rect x="353.87" y="196.40" width="0.5" height="8.10" fill="rgba(0,70,100,0.35)"/><rect x="355.67" y="196.40" width="0.5" height="8.10" fill="rgba(0,70,100,0.35)"/><rect x="357.47" y="196.40" width="0.5" height="8.10" fill="rgba(0,70,100,0.35)"/><rect x="359.27" y="196.40" width="0.5" height="8.10" fill="rgba(0,70,100,0.35)"/><rect x="364.65" y="185.80" width="16.4" height="9.60" rx="1" fill="#2a7d98"/><rect x="364.65" y="195.40" width="16.4" height="1" fill="#8ad8ee"/><rect x="365.65" y="196.40" width="0.5" height="8.10" fill="rgba(0,70,100,0.35)"/><rect x="367.45" y="196.40" width="0.5" height="8.10" fill="rgba(0,70,100,0.35)"/><rect x="369.25" y="196.40" width="0.5" height="8.10" fill="rgba(0,70,100,0.35)"/><rect x="371.05" y="196.40" width="0.5" height="8.10" fill="rgba(0,70,100,0.35)"/><rect x="372.85" y="196.40" width="0.5" height="8.10" fill="rgba(0,70,100,0.35)"/><rect x="374.65" y="196.40" width="0.5" height="8.10" fill="rgba(0,70,100,0.35)"/><rect x="376.45" y="196.40" width="0.5" height="8.10" fill="rgba(0,70,100,0.35)"/><rect x="378.25" y="196.40" width="0.5" height="8.10" fill="rgba(0,70,100,0.35)"/><rect x="382.28" y="188.00" width="16.40" height="1" fill="#7fd0e8"/><rect x="383.28" y="189.30" width="0.5" height="14.70" fill="rgba(0,70,100,0.35)"/><rect x="385.08" y="189.30" width="0.5" height="14.70" fill="rgba(0,70,100,0.35)"/><rect x="386.88" y="189.30" width="0.5" height="14.70" fill="rgba(0,70,100,0.35)"/><rect x="388.68" y="189.30" width="0.5" height="14.70" fill="rgba(0,70,100,0.35)"/><rect x="390.48" y="189.30" width="0.5" height="14.70" fill="rgba(0,70,100,0.35)"/><rect x="392.28" y="189.30" width="0.5" height="14.70" fill="rgba(0,70,100,0.35)"/><rect x="394.08" y="189.30" width="0.5" height="14.70" fill="rgba(0,70,100,0.35)"/><rect x="395.88" y="189.30" width="0.5" height="14.70" fill="rgba(0,70,100,0.35)"/><rect x="471.78" y="188.00" width="16.40" height="1" fill="#7fd0e8"/><rect x="526.02" y="188.00" width="16.40" height="1" fill="#7fd0e8"/><rect x="543.65" y="188.00" width="16.40" height="1" fill="#7fd0e8"/><rect x="21.68" y="169.55" width="0.5" height="9.6" fill="rgba(255,255,255,0.45)"/><path d="M21.93 172.35l2 2-2 2-2-2z" fill="#f4fbff"/><rect x="39.31" y="169.55" width="0.5" height="9.6" fill="rgba(255,255,255,0.45)"/><path d="M39.56 172.35l2 2-2 2-2-2z" fill="#f4fbff"/><rect x="237.29" y="169.55" width="0.5" height="9.6" fill="rgba(255,255,255,0.45)"/><path d="M237.54 172.35l2 2-2 2-2-2z" fill="#f4fbff"/><rect x="309.16" y="169.55" width="0.5" height="9.6" fill="rgba(255,255,255,0.45)"/><path d="M309.41 172.35l2 2-2 2-2-2z" fill="#f4fbff"/><path d="M52.96 172.75l1.8 1.6-1.8 1.6z" fill="rgba(255,255,255,0.8)"/><path d="M70.59 172.75l1.8 1.6-1.8 1.6z" fill="rgba(255,255,255,0.1)"/><path d="M89.57 172.75l1.8 1.6-1.8 1.6z" fill="rgba(255,255,255,0.8)"/><path d="M107.20 172.75l1.8 1.6-1.8 1.6z" fill="rgba(255,255,255,0.8)"/><path d="M124.83 172.75l1.8 1.6-1.8 1.6z" fill="rgba(255,255,255,0.1)"/><path d="M142.46 172.75l1.8 1.6-1.8 1.6z" fill="rgba(255,255,255,0.1)"/><path d="M161.44 172.75l1.8 1.6-1.8 1.6z" fill="rgba(255,255,255,0.8)"/><path d="M179.07 172.75l1.8 1.6-1.8 1.6z" fill="rgba(255,255,255,0.1)"/><path d="M196.70 172.75l1.8 1.6-1.8 1.6z" fill="rgba(255,255,255,0.8)"/><path d="M214.33 172.75l1.8 1.6-1.8 1.6z" fill="rgba(255,255,255,0.1)"/><path d="M250.94 172.75l1.8 1.6-1.8 1.6z" fill="rgba(255,255,255,0.8)"/><path d="M268.57 172.75l1.8 1.6-1.8 1.6z" fill="rgba(255,255,255,0.1)"/><path d="M286.20 172.75l1.8 1.6-1.8 1.6z" fill="rgba(255,255,255,0.1)"/><path d="M322.81 172.75l1.8 1.6-1.8 1.6z" fill="rgba(255,255,255,0.8)"/><path d="M340.44 172.75l1.8 1.6-1.8 1.6z" fill="rgba(255,255,255,0.1)"/><path d="M358.07 172.75l1.8 1.6-1.8 1.6z" fill="rgba(255,255,255,0.8)"/><path d="M377.05 172.75l1.8 1.6-1.8 1.6z" fill="rgba(255,255,255,0.8)"/><path d="M394.68 172.75l1.8 1.6-1.8 1.6z" fill="rgba(255,255,255,0.8)"/><path d="M412.31 172.75l1.8 1.6-1.8 1.6z" fill="rgba(255,255,255,0.1)"/><path d="M429.94 172.75l1.8 1.6-1.8 1.6z" fill="rgba(255,255,255,0.1)"/><path d="M448.92 172.75l1.8 1.6-1.8 1.6z" fill="rgba(255,255,255,0.1)"/><path d="M466.55 172.75l1.8 1.6-1.8 1.6z" fill="rgba(255,255,255,0.1)"/><path d="M484.18 172.75l1.8 1.6-1.8 1.6z" fill="rgba(255,255,255,0.8)"/><path d="M501.81 172.75l1.8 1.6-1.8 1.6z" fill="rgba(255,255,255,0.1)"/><path d="M520.79 172.75l1.8 1.6-1.8 1.6z" fill="rgba(255,255,255,0.1)"/><path d="M538.42 172.75l1.8 1.6-1.8 1.6z" fill="rgba(255,255,255,0.8)"/><path d="M556.05 172.75l1.8 1.6-1.8 1.6z" fill="rgba(255,255,255,0.8)"/><path d="M573.68 172.75l1.8 1.6-1.8 1.6z" fill="rgba(255,255,255,0.1)"/><rect x="184.80" y="19.20" width="15.399999999999999" height="15.399999999999999" rx="1" fill="none" stroke="#e4e6f2" stroke-width="1.05"/><rect x="184.80" y="40.30" width="15.399999999999999" height="15.399999999999999" rx="1" fill="none" stroke="#e4e6f2" stroke-width="1.05"/><rect x="184.80" y="61.30" width="15.399999999999999" height="15.399999999999999" rx="1" fill="none" stroke="#6e5e7c" stroke-width="1.05"/><rect x="184.80" y="82.40" width="15.399999999999999" height="15.399999999999999" rx="1" fill="none" stroke="#e4e6f2" stroke-width="1.05"/><rect x="184.80" y="103.50" width="15.399999999999999" height="15.399999999999999" rx="1" fill="none" stroke="#e4e6f2" stroke-width="1.05"/><rect x="184.80" y="124.50" width="15.399999999999999" height="15.5" rx="1" fill="none" stroke="#e4e6f2" stroke-width="1.05"/><rect x="184.80" y="146.10" width="15.399999999999999" height="16.3" rx="1" fill="none" stroke="#e4e6f2" stroke-width="1.05"/><rect x="526.37" y="103.35" width="15.7" height="15.7" rx="1" fill="none" stroke="#a0a0a8" stroke-width="0.8"/></svg>
</div>
<div style="position:absolute;left:247.00px;top:677.60px;width:766.00px;height:2.40px;background:#000;"></div>
</body></html>
